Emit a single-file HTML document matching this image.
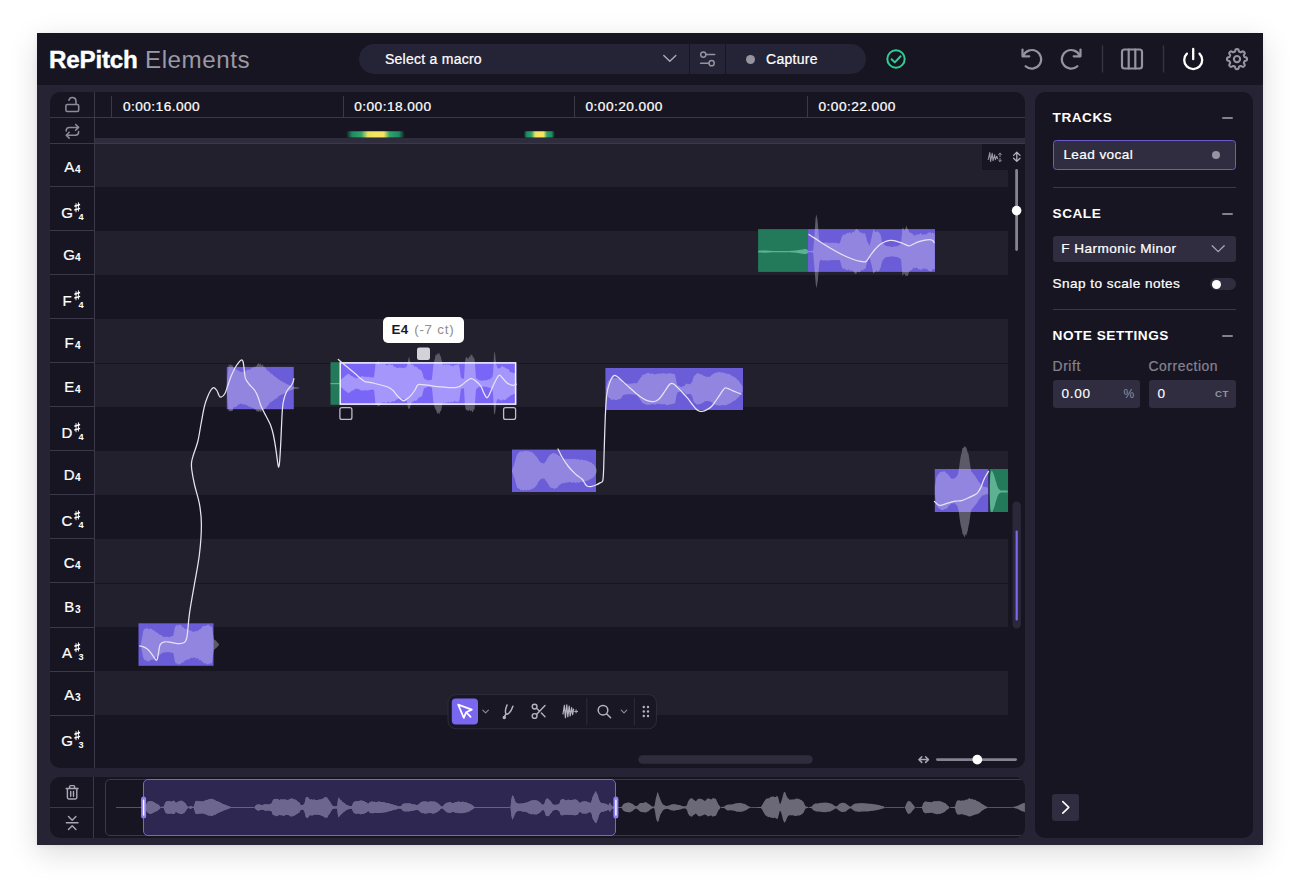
<!DOCTYPE html>
<html><head><meta charset="utf-8"><title>RePitch Elements</title>
<style>
*{box-sizing:border-box;margin:0;padding:0}
html,body{width:1300px;height:886px;overflow:hidden;background:#ffffff}
body{position:relative;font-family:"Liberation Sans",sans-serif;color:#fff}
.abs{position:absolute}
.win{position:absolute;left:37px;top:33px;width:1226px;height:812px;background:#252334;box-shadow:0 8px 28px rgba(0,0,0,.14),0 1px 5px rgba(0,0,0,.06)}
.hdr{position:absolute;left:37px;top:33px;width:1226px;height:52px;background:#171521}
.panel{position:absolute;background:#171522;border-radius:10px;overflow:hidden}
.t{position:absolute;white-space:nowrap;line-height:1}
.m{-webkit-text-stroke:0.24px currentColor}
svg{position:absolute;overflow:visible}
</style></head><body>

<div class="win"></div><div class="hdr"></div>
<div class="t" style="left:49px;top:47.6px;font-size:24.2px;font-weight:bold;letter-spacing:-0.2px;-webkit-text-stroke:0.4px #fff">RePitch</div>
<div class="t" style="left:145px;top:47.6px;font-size:24.2px;color:#9b99a4;letter-spacing:0.55px">Elements</div>
<div class="abs" style="left:358.6px;top:44px;width:507.4px;height:30px;border-radius:15px;background:#252336"></div>
<div class="abs" style="left:689px;top:44px;width:1px;height:30px;background:#171521"></div>
<div class="abs" style="left:725px;top:44px;width:1px;height:30px;background:#171521"></div>
<div class="t m" style="left:385px;top:52px;font-size:14px;letter-spacing:0.25px">Select a macro</div>
<div class="t m" style="left:766px;top:52px;font-size:14px;letter-spacing:0.3px">Capture</div>
<div class="abs" style="left:745.5px;top:54.5px;width:9px;height:9px;border-radius:50%;background:#9593a0"></div>
<svg style="left:0;top:0" width="1300" height="90" viewBox="0 0 1300 90" fill="none" stroke-linecap="round" stroke-linejoin="round">
<path d="M663.8 55.4 L669.8 61.2 L675.8 55.4" stroke="#aeacb8" stroke-width="1.4"/>
<g stroke="#9593a0" stroke-width="1.5"><circle cx="703.3" cy="54.6" r="2.6"/><path d="M706.5 54.6H714.6"/><circle cx="711.6" cy="63.2" r="2.6"/><path d="M700.6 63.2H708.5"/></g>
<g stroke="#2fcf93" stroke-width="2"><circle cx="896" cy="59" r="8.7"/><path d="M891.6 59.3 L894.8 62.4 L900.6 56.2"/></g>
<g stroke="#9593a0" stroke-width="2.2"><path d="M1022.5 49.5 V56.3 H1029.3"/><path d="M1023.2 56 A9.3 9.3 0 1 1 1025.6 66.2"/></g>
<g stroke="#9593a0" stroke-width="2.2"><path d="M1080.5 49.5 V56.3 H1073.7"/><path d="M1079.8 56 A9.3 9.3 0 1 0 1077.4 66.2"/></g>
<path d="M1102.5 46V72M1163.5 46V72" stroke="#353342" stroke-width="1.5"/>
<g stroke="#9593a0" stroke-width="2.2"><rect x="1122" y="49.5" width="20" height="19" rx="2.5"/><path d="M1128.7 49.5V68.5M1135.3 49.5V68.5"/></g>
<g stroke="#ffffff" stroke-width="2.3"><path d="M1193.2 48.9V59.2"/><path d="M1186.9 53.6 A9 9 0 1 0 1199.5 53.6"/></g>
<g stroke="#9593a0" stroke-width="2.1"><path d="M1237.00 49.10 L1237.39 49.11 L1237.78 49.17 L1238.16 49.30 L1238.49 49.67 L1238.73 50.42 L1238.90 51.17 L1239.13 51.56 L1239.39 51.74 L1239.67 51.87 L1239.95 51.99 L1240.23 52.10 L1240.51 52.21 L1240.83 52.26 L1241.26 52.15 L1241.92 51.74 L1242.61 51.38 L1243.11 51.35 L1243.47 51.52 L1243.78 51.76 L1244.07 52.03 L1244.34 52.32 L1244.58 52.63 L1244.75 52.99 L1244.72 53.49 L1244.36 54.18 L1243.95 54.84 L1243.84 55.27 L1243.89 55.59 L1244.00 55.87 L1244.11 56.15 L1244.23 56.43 L1244.36 56.71 L1244.54 56.97 L1244.93 57.20 L1245.68 57.37 L1246.43 57.61 L1246.80 57.94 L1246.93 58.32 L1246.99 58.71 L1247.00 59.10 L1246.99 59.49 L1246.93 59.88 L1246.80 60.26 L1246.43 60.59 L1245.68 60.83 L1244.93 61.00 L1244.54 61.23 L1244.36 61.49 L1244.23 61.77 L1244.11 62.05 L1244.00 62.33 L1243.89 62.61 L1243.84 62.93 L1243.95 63.36 L1244.36 64.02 L1244.72 64.71 L1244.75 65.21 L1244.58 65.57 L1244.34 65.88 L1244.07 66.17 L1243.78 66.44 L1243.47 66.68 L1243.11 66.85 L1242.61 66.82 L1241.92 66.46 L1241.26 66.05 L1240.83 65.94 L1240.51 65.99 L1240.23 66.10 L1239.95 66.21 L1239.67 66.33 L1239.39 66.46 L1239.13 66.64 L1238.90 67.03 L1238.73 67.78 L1238.49 68.53 L1238.16 68.90 L1237.78 69.03 L1237.39 69.09 L1237.00 69.10 L1236.61 69.09 L1236.22 69.03 L1235.84 68.90 L1235.51 68.53 L1235.27 67.78 L1235.10 67.03 L1234.87 66.64 L1234.61 66.46 L1234.33 66.33 L1234.05 66.21 L1233.77 66.10 L1233.49 65.99 L1233.17 65.94 L1232.74 66.05 L1232.08 66.46 L1231.39 66.82 L1230.89 66.85 L1230.53 66.68 L1230.22 66.44 L1229.93 66.17 L1229.66 65.88 L1229.42 65.57 L1229.25 65.21 L1229.28 64.71 L1229.64 64.02 L1230.05 63.36 L1230.16 62.93 L1230.11 62.61 L1230.00 62.33 L1229.89 62.05 L1229.77 61.77 L1229.64 61.49 L1229.46 61.23 L1229.07 61.00 L1228.32 60.83 L1227.57 60.59 L1227.20 60.26 L1227.07 59.88 L1227.01 59.49 L1227.00 59.10 L1227.01 58.71 L1227.07 58.32 L1227.20 57.94 L1227.57 57.61 L1228.32 57.37 L1229.07 57.20 L1229.46 56.97 L1229.64 56.71 L1229.77 56.43 L1229.89 56.15 L1230.00 55.87 L1230.11 55.59 L1230.16 55.27 L1230.05 54.84 L1229.64 54.18 L1229.28 53.49 L1229.25 52.99 L1229.42 52.63 L1229.66 52.32 L1229.93 52.03 L1230.22 51.76 L1230.53 51.52 L1230.89 51.35 L1231.39 51.38 L1232.08 51.74 L1232.74 52.15 L1233.17 52.26 L1233.49 52.21 L1233.77 52.10 L1234.05 51.99 L1234.33 51.87 L1234.61 51.74 L1234.87 51.56 L1235.10 51.17 L1235.27 50.42 L1235.51 49.67 L1235.84 49.30 L1236.22 49.17 L1236.61 49.11 Z" stroke-linejoin="round"/><circle cx="1237.0" cy="59.1" r="3.15"/></g>
</svg>
<div class="panel" style="left:50px;top:92px;width:975px;height:676px">
<div class="abs" style="left:45px;top:51.50px;width:913.2px;height:43.20px;background:#22202d"></div>
<div class="abs" style="left:45px;top:94.70px;width:913.2px;height:44.03px;background:#171522"></div>
<div class="abs" style="left:45px;top:138.73px;width:913.2px;height:44.03px;background:#22202d"></div>
<div class="abs" style="left:45px;top:182.76px;width:913.2px;height:44.03px;background:#171522"></div>
<div class="abs" style="left:45px;top:226.79px;width:913.2px;height:44.03px;background:#22202d"></div>
<div class="abs" style="left:45px;top:270.82px;width:913.2px;height:44.03px;background:#22202d"></div>
<div class="abs" style="left:45px;top:314.85px;width:913.2px;height:44.03px;background:#171522"></div>
<div class="abs" style="left:45px;top:358.88px;width:913.2px;height:44.03px;background:#22202d"></div>
<div class="abs" style="left:45px;top:402.91px;width:913.2px;height:44.03px;background:#171522"></div>
<div class="abs" style="left:45px;top:446.94px;width:913.2px;height:44.03px;background:#22202d"></div>
<div class="abs" style="left:45px;top:490.97px;width:913.2px;height:44.03px;background:#22202d"></div>
<div class="abs" style="left:45px;top:535.00px;width:913.2px;height:44.03px;background:#171522"></div>
<div class="abs" style="left:45px;top:579.03px;width:913.2px;height:44.03px;background:#22202d"></div>
<div class="abs" style="left:45px;top:623.06px;width:913.2px;height:44.03px;background:#171522"></div>
<div class="abs" style="left:45px;top:270.72px;width:913.2px;height:1px;background:#171522"></div>
<div class="abs" style="left:45px;top:490.87px;width:913.2px;height:1px;background:#171522"></div>
<div class="abs" style="left:45px;top:45.6px;width:930px;height:6px;background:#2f2d3d"></div>
<div class="abs" style="left:0;top:25px;width:975px;height:1px;background:#3b3949"></div>
<div class="abs" style="left:0;top:51px;width:975px;height:1px;background:#3b3949"></div>
<div class="abs" style="left:44px;top:0;width:1px;height:676px;background:#3b3949"></div>
<div class="abs" style="left:0;top:94.20px;width:44px;height:1px;background:#3b3949"></div>
<div class="abs" style="left:0;top:138.23px;width:44px;height:1px;background:#3b3949"></div>
<div class="abs" style="left:0;top:182.26px;width:44px;height:1px;background:#3b3949"></div>
<div class="abs" style="left:0;top:226.29px;width:44px;height:1px;background:#3b3949"></div>
<div class="abs" style="left:0;top:270.32px;width:44px;height:1px;background:#3b3949"></div>
<div class="abs" style="left:0;top:314.35px;width:44px;height:1px;background:#3b3949"></div>
<div class="abs" style="left:0;top:358.38px;width:44px;height:1px;background:#3b3949"></div>
<div class="abs" style="left:0;top:402.41px;width:44px;height:1px;background:#3b3949"></div>
<div class="abs" style="left:0;top:446.44px;width:44px;height:1px;background:#3b3949"></div>
<div class="abs" style="left:0;top:490.47px;width:44px;height:1px;background:#3b3949"></div>
<div class="abs" style="left:0;top:534.50px;width:44px;height:1px;background:#3b3949"></div>
<div class="abs" style="left:0;top:578.53px;width:44px;height:1px;background:#3b3949"></div>
<div class="abs" style="left:0;top:622.56px;width:44px;height:1px;background:#3b3949"></div>
<div class="abs" style="left:61.2px;top:4px;width:1px;height:21px;background:#3b3949"></div>
<div class="t m" style="left:72.9px;top:7.9px;font-size:13.7px;letter-spacing:0.45px">0:00:16.000</div>
<div class="abs" style="left:292.5px;top:4px;width:1px;height:21px;background:#3b3949"></div>
<div class="t m" style="left:304.2px;top:7.9px;font-size:13.7px;letter-spacing:0.45px">0:00:18.000</div>
<div class="abs" style="left:523.8px;top:4px;width:1px;height:21px;background:#3b3949"></div>
<div class="t m" style="left:535.5px;top:7.9px;font-size:13.7px;letter-spacing:0.45px">0:00:20.000</div>
<div class="abs" style="left:756.8px;top:4px;width:1px;height:21px;background:#3b3949"></div>
<div class="t m" style="left:768.5px;top:7.9px;font-size:13.7px;letter-spacing:0.45px">0:00:22.000</div>
<div class="abs" style="left:931.8px;top:52px;width:44px;height:25.5px;background:#171522"></div>
</div>
<svg style="left:0;top:0" width="1300" height="886" viewBox="0 0 1300 886" fill="none">
<defs>
<linearGradient id="mk" x1="0" x2="1" y1="0" y2="0"><stop offset="0" stop-color="#1a7a56" stop-opacity="0"/><stop offset="0.1" stop-color="#1d8a60"/><stop offset="0.26" stop-color="#2fa56a"/><stop offset="0.37" stop-color="#e9e060"/><stop offset="0.48" stop-color="#f6e35f"/><stop offset="0.64" stop-color="#f6e35f"/><stop offset="0.74" stop-color="#2fa56a"/><stop offset="0.9" stop-color="#1d8a60"/><stop offset="1" stop-color="#1a7a56" stop-opacity="0"/></linearGradient>
<filter id="bl" x="-10%" y="-30%" width="120%" height="160%"><feGaussianBlur stdDeviation="0.7"/></filter>
<clipPath id="gridclip"><rect x="95" y="144" width="913.2" height="624"/></clipPath>
<clipPath id="c_b1"><rect x="138.5" y="623.3" width="75.0" height="42.5"/></clipPath>
<clipPath id="c_b2"><rect x="226.8" y="366.9" width="67.0" height="42.3"/></clipPath>
<clipPath id="c_b3"><rect x="339.5" y="362.2" width="176.8" height="42.6"/></clipPath>
<clipPath id="c_b3g"><rect x="330.5" y="362.2" width="9.0" height="42.6"/></clipPath>
<clipPath id="c_b4"><rect x="512.0" y="449.6" width="84.0" height="42.4"/></clipPath>
<clipPath id="c_b5"><rect x="605.4" y="368.0" width="137.6" height="42.0"/></clipPath>
<clipPath id="c_b6g"><rect x="758.1" y="229.1" width="49.9" height="42.8"/></clipPath>
<clipPath id="c_b6"><rect x="808.0" y="229.1" width="127.0" height="42.8"/></clipPath>
<clipPath id="c_b7"><rect x="934.8" y="469.0" width="53.6" height="43.0"/></clipPath>
<clipPath id="c_b7g"><rect x="989.6" y="469.0" width="18.6" height="43.0"/></clipPath>
</defs>
<rect x="346" y="131.2" width="59" height="6.4" rx="2" fill="url(#mk)" filter="url(#bl)"/>
<rect x="523.5" y="131.2" width="31.5" height="6.4" rx="2" fill="url(#mk)" filter="url(#bl)"/>
<g clip-path="url(#gridclip)">
<path d="M141.0 642.7 L141.8 639.1 L142.5 635.3 L143.2 631.0 L144.0 629.3 L144.8 628.8 L145.5 628.9 L146.2 627.8 L147.0 628.2 L147.8 628.3 L148.5 629.2 L149.2 629.2 L150.0 628.2 L150.8 628.7 L151.5 628.7 L152.2 629.8 L153.0 630.1 L153.8 629.9 L154.5 631.2 L155.2 631.2 L156.0 631.9 L156.8 632.8 L157.5 632.6 L158.2 633.4 L159.0 634.1 L159.8 634.9 L160.5 634.8 L161.2 635.0 L162.0 635.4 L162.8 636.6 L163.5 636.9 L164.2 636.8 L165.0 636.7 L165.8 637.0 L166.5 636.7 L167.2 636.5 L168.0 637.0 L168.8 637.2 L169.5 636.9 L170.2 636.5 L171.0 636.5 L171.8 636.2 L172.5 636.0 L173.2 636.0 L174.0 632.0 L174.8 627.4 L175.5 626.2 L176.2 625.0 L177.0 625.1 L177.8 626.3 L178.5 624.6 L179.2 624.7 L180.0 625.3 L180.8 624.6 L181.5 625.8 L182.2 627.3 L183.0 626.9 L183.8 627.7 L184.5 628.6 L185.2 629.0 L186.0 628.7 L186.8 628.8 L187.5 629.3 L188.2 630.0 L189.0 630.4 L189.8 630.1 L190.5 630.5 L191.2 630.6 L192.0 631.6 L192.8 631.4 L193.5 631.5 L194.2 632.0 L195.0 631.3 L195.8 630.7 L196.5 630.9 L197.2 631.4 L198.0 630.1 L198.8 630.2 L199.5 629.6 L200.2 629.0 L201.0 629.0 L201.8 627.3 L202.5 626.5 L203.2 626.6 L204.0 625.6 L204.8 626.0 L205.5 625.9 L206.2 625.9 L207.0 624.7 L207.8 625.0 L208.5 624.4 L209.2 624.9 L210.0 626.4 L210.8 626.4 L211.5 626.5 L212.2 627.3 L213.0 634.1 L213.8 639.2 L214.5 639.8 L215.2 640.3 L216.0 640.6 L216.8 641.8 L217.5 642.5 L218.2 643.2 L219.0 644.1 L219.0 645.1 L218.2 645.9 L217.5 646.7 L216.8 647.5 L216.0 648.3 L215.2 648.8 L214.5 649.6 L213.8 649.9 L213.0 655.0 L212.2 661.9 L211.5 663.9 L210.8 662.7 L210.0 663.8 L209.2 663.4 L208.5 664.3 L207.8 664.8 L207.0 663.9 L206.2 663.5 L205.5 663.4 L204.8 662.9 L204.0 663.8 L203.2 662.2 L202.5 661.6 L201.8 661.7 L201.0 660.5 L200.2 659.5 L199.5 660.4 L198.8 659.5 L198.0 657.7 L197.2 658.7 L196.5 658.4 L195.8 658.5 L195.0 657.8 L194.2 657.0 L193.5 658.0 L192.8 657.7 L192.0 658.2 L191.2 657.4 L190.5 658.3 L189.8 658.9 L189.0 659.2 L188.2 659.3 L187.5 659.9 L186.8 659.5 L186.0 660.4 L185.2 660.3 L184.5 660.9 L183.8 662.7 L183.0 662.1 L182.2 662.4 L181.5 663.1 L180.8 663.8 L180.0 664.6 L179.2 664.0 L178.5 664.5 L177.8 664.6 L177.0 663.0 L176.2 663.9 L175.5 662.9 L174.8 661.2 L174.0 656.7 L173.2 652.8 L172.5 653.1 L171.8 652.4 L171.0 652.8 L170.2 652.3 L169.5 652.1 L168.8 652.5 L168.0 651.9 L167.2 652.2 L166.5 652.3 L165.8 652.1 L165.0 652.6 L164.2 652.5 L163.5 652.8 L162.8 652.8 L162.0 653.2 L161.2 653.8 L160.5 654.1 L159.8 655.2 L159.0 655.6 L158.2 655.4 L157.5 656.2 L156.8 656.5 L156.0 657.5 L155.2 657.6 L154.5 658.3 L153.8 659.1 L153.0 659.8 L152.2 659.8 L151.5 659.8 L150.8 659.6 L150.0 661.0 L149.2 660.9 L148.5 661.6 L147.8 661.2 L147.0 660.4 L146.2 661.2 L145.5 659.7 L144.8 660.3 L144.0 659.3 L143.2 657.6 L142.5 654.0 L141.8 650.5 L141.0 646.6 Z" fill="#5c5a68"/>
<path d="M226.5 387.1 L227.2 378.8 L228.0 371.1 L228.8 364.2 L229.5 365.8 L230.2 363.7 L231.0 365.5 L231.8 364.8 L232.5 365.3 L233.2 368.1 L234.0 368.1 L234.8 368.4 L235.5 369.8 L236.2 369.2 L237.0 369.7 L237.8 370.3 L238.5 370.4 L239.2 371.1 L240.0 371.8 L240.8 371.7 L241.5 372.1 L242.2 372.3 L243.0 371.9 L243.8 370.9 L244.5 370.9 L245.2 371.6 L246.0 370.6 L246.8 370.6 L247.5 369.4 L248.2 369.4 L249.0 370.0 L249.8 369.2 L250.5 369.6 L251.2 368.6 L252.0 368.1 L252.8 367.5 L253.5 367.1 L254.2 367.2 L255.0 367.3 L255.8 366.1 L256.5 366.3 L257.2 364.2 L258.0 363.7 L258.8 363.3 L259.5 364.7 L260.2 363.0 L261.0 364.7 L261.8 365.5 L262.5 364.3 L263.2 365.3 L264.0 367.5 L264.8 366.5 L265.5 368.2 L266.2 368.5 L267.0 370.4 L267.8 370.8 L268.5 370.5 L269.2 372.3 L270.0 372.1 L270.8 374.0 L271.5 373.5 L272.2 374.0 L273.0 374.9 L273.8 375.6 L274.5 376.6 L275.2 376.4 L276.0 377.4 L276.8 377.5 L277.5 378.7 L278.2 378.7 L279.0 379.8 L279.8 379.9 L280.5 380.4 L281.2 381.1 L282.0 381.6 L282.8 381.8 L283.5 382.4 L284.2 382.6 L285.0 383.0 L285.8 383.5 L286.5 384.1 L287.2 384.3 L288.0 384.6 L288.8 385.0 L289.5 385.4 L290.2 385.5 L291.0 386.0 L291.8 386.2 L292.5 386.4 L293.2 386.6 L294.0 386.9 L294.8 387.0 L295.5 387.1 L296.2 387.1 L297.0 387.2 L297.8 387.3 L298.5 387.4 L299.2 387.5 L299.2 388.5 L298.5 388.6 L297.8 388.7 L297.0 388.8 L296.2 388.9 L295.5 388.9 L294.8 389.0 L294.0 389.1 L293.2 389.3 L292.5 389.5 L291.8 389.9 L291.0 390.2 L290.2 390.4 L289.5 390.7 L288.8 391.1 L288.0 391.5 L287.2 391.8 L286.5 392.1 L285.8 392.5 L285.0 392.9 L284.2 393.4 L283.5 393.8 L282.8 394.3 L282.0 394.2 L281.2 395.0 L280.5 395.0 L279.8 395.5 L279.0 396.1 L278.2 396.5 L277.5 397.6 L276.8 398.5 L276.0 398.4 L275.2 398.7 L274.5 400.1 L273.8 399.8 L273.0 401.3 L272.2 401.0 L271.5 402.2 L270.8 401.8 L270.0 402.4 L269.2 403.9 L268.5 404.9 L267.8 405.4 L267.0 407.0 L266.2 407.3 L265.5 408.2 L264.8 408.9 L264.0 408.9 L263.2 410.5 L262.5 409.9 L261.8 410.2 L261.0 412.6 L260.2 411.6 L259.5 411.0 L258.8 411.2 L258.0 411.9 L257.2 411.1 L256.5 411.4 L255.8 409.1 L255.0 410.2 L254.2 408.4 L253.5 407.8 L252.8 408.3 L252.0 407.5 L251.2 407.6 L250.5 407.4 L249.8 406.4 L249.0 406.5 L248.2 406.6 L247.5 405.7 L246.8 404.9 L246.0 405.1 L245.2 404.7 L244.5 404.6 L243.8 403.8 L243.0 404.6 L242.2 404.6 L241.5 403.8 L240.8 403.4 L240.0 403.7 L239.2 404.7 L238.5 404.2 L237.8 405.4 L237.0 405.7 L236.2 406.7 L235.5 407.5 L234.8 406.7 L234.0 407.0 L233.2 408.6 L232.5 411.0 L231.8 410.7 L231.0 411.4 L230.2 410.7 L229.5 410.4 L228.8 411.7 L228.0 405.9 L227.2 396.7 L226.5 389.0 Z" fill="#5c5a68"/>
<path d="M339.5 381.7 L340.2 380.7 L341.0 379.9 L341.8 379.0 L342.5 378.2 L343.2 378.0 L344.0 376.9 L344.8 376.4 L345.5 375.5 L346.2 375.4 L347.0 374.5 L347.8 373.7 L348.5 373.9 L349.2 374.2 L350.0 374.8 L350.8 375.5 L351.5 376.0 L352.2 376.3 L353.0 376.5 L353.8 377.4 L354.5 377.6 L355.2 377.6 L356.0 378.6 L356.8 378.3 L357.5 377.6 L358.2 377.6 L359.0 377.6 L359.8 377.2 L360.5 377.1 L361.2 376.5 L362.0 376.1 L362.8 376.2 L363.5 376.6 L364.2 376.7 L365.0 376.7 L365.8 377.0 L366.5 376.8 L367.2 377.0 L368.0 377.1 L368.8 376.6 L369.5 377.2 L370.2 377.3 L371.0 377.2 L371.8 377.2 L372.5 377.5 L373.2 377.4 L374.0 377.1 L374.8 371.0 L375.5 363.9 L376.2 361.8 L377.0 362.5 L377.8 361.7 L378.5 361.3 L379.2 361.7 L380.0 363.4 L380.8 364.1 L381.5 362.2 L382.2 364.6 L383.0 363.8 L383.8 363.3 L384.5 363.4 L385.2 363.4 L386.0 365.5 L386.8 365.3 L387.5 365.6 L388.2 364.1 L389.0 364.8 L389.8 363.8 L390.5 365.0 L391.2 364.4 L392.0 364.9 L392.8 364.3 L393.5 366.3 L394.2 366.8 L395.0 367.2 L395.8 366.6 L396.5 368.4 L397.2 367.7 L398.0 368.0 L398.8 367.5 L399.5 367.8 L400.2 367.5 L401.0 367.9 L401.8 367.5 L402.5 368.4 L403.2 367.7 L404.0 368.2 L404.8 367.6 L405.5 367.4 L406.2 367.3 L407.0 366.1 L407.8 362.2 L408.5 358.3 L409.2 356.8 L410.0 361.1 L410.8 363.8 L411.5 365.0 L412.2 364.3 L413.0 364.6 L413.8 365.6 L414.5 366.9 L415.2 366.4 L416.0 366.4 L416.8 367.3 L417.5 367.6 L418.2 368.8 L419.0 369.6 L419.8 369.5 L420.5 370.0 L421.2 370.0 L422.0 372.0 L422.8 374.1 L423.5 377.2 L424.2 378.8 L425.0 379.1 L425.8 379.7 L426.5 379.9 L427.2 379.7 L428.0 380.4 L428.8 380.2 L429.5 380.0 L430.2 380.1 L431.0 380.1 L431.8 379.6 L432.5 374.1 L433.2 366.6 L434.0 361.7 L434.8 358.9 L435.5 355.2 L436.2 354.2 L437.0 355.2 L437.8 352.8 L438.5 354.3 L439.2 352.4 L440.0 355.4 L440.8 356.3 L441.5 359.7 L442.2 362.1 L443.0 365.0 L443.8 364.9 L444.5 363.4 L445.2 365.4 L446.0 363.9 L446.8 364.5 L447.5 364.4 L448.2 365.1 L449.0 364.2 L449.8 364.6 L450.5 365.5 L451.2 365.9 L452.0 365.3 L452.8 366.5 L453.5 366.3 L454.2 365.0 L455.0 365.0 L455.8 365.3 L456.5 364.5 L457.2 365.4 L458.0 364.0 L458.8 364.1 L459.5 367.3 L460.2 372.3 L461.0 378.1 L461.8 378.3 L462.5 378.6 L463.2 378.4 L464.0 378.9 L464.8 364.4 L465.5 358.3 L466.2 357.2 L467.0 357.1 L467.8 358.9 L468.5 358.5 L469.2 356.1 L470.0 357.4 L470.8 354.3 L471.5 355.1 L472.2 354.5 L473.0 357.8 L473.8 357.0 L474.5 359.0 L475.2 367.1 L476.0 378.2 L476.8 378.6 L477.5 378.8 L478.2 379.7 L479.0 379.9 L479.8 380.4 L480.5 380.5 L481.2 380.7 L482.0 380.7 L482.8 380.4 L483.5 380.6 L484.2 380.3 L485.0 380.3 L485.8 380.4 L486.5 380.2 L487.2 380.0 L488.0 379.7 L488.8 379.3 L489.5 379.4 L490.2 378.8 L491.0 378.6 L491.8 377.4 L492.5 376.5 L493.2 371.4 L494.0 354.5 L494.8 350.9 L495.5 357.7 L496.2 364.2 L497.0 366.6 L497.8 368.4 L498.5 368.5 L499.2 368.6 L500.0 367.7 L500.8 367.7 L501.5 366.3 L502.2 365.9 L503.0 367.0 L503.8 366.8 L504.5 367.2 L505.2 368.0 L506.0 368.5 L506.8 368.2 L507.5 369.6 L508.2 368.8 L509.0 369.7 L509.8 371.8 L510.5 372.2 L511.2 372.4 L512.0 371.9 L512.8 373.2 L513.5 373.1 L514.2 373.0 L515.0 373.5 L515.8 374.3 L515.8 392.3 L515.0 393.4 L514.2 393.8 L513.5 393.9 L512.8 395.0 L512.0 394.4 L511.2 395.2 L510.5 395.7 L509.8 395.8 L509.0 397.2 L508.2 397.7 L507.5 397.3 L506.8 398.2 L506.0 400.3 L505.2 399.3 L504.5 400.4 L503.8 399.0 L503.0 400.6 L502.2 399.5 L501.5 400.7 L500.8 400.5 L500.0 399.7 L499.2 399.5 L498.5 399.5 L497.8 398.4 L497.0 400.2 L496.2 402.4 L495.5 410.2 L494.8 414.5 L494.0 413.2 L493.2 395.4 L492.5 389.9 L491.8 389.2 L491.0 388.5 L490.2 387.8 L489.5 388.0 L488.8 387.6 L488.0 387.4 L487.2 387.0 L486.5 386.8 L485.8 386.9 L485.0 386.7 L484.2 386.8 L483.5 386.4 L482.8 386.5 L482.0 386.7 L481.2 386.4 L480.5 386.3 L479.8 386.6 L479.0 386.9 L478.2 387.5 L477.5 388.2 L476.8 388.4 L476.0 389.3 L475.2 399.9 L474.5 410.4 L473.8 408.7 L473.0 412.2 L472.2 411.9 L471.5 410.0 L470.8 411.2 L470.0 411.0 L469.2 409.3 L468.5 411.0 L467.8 410.9 L467.0 409.7 L466.2 410.3 L465.5 408.8 L464.8 403.3 L464.0 388.5 L463.2 388.2 L462.5 388.8 L461.8 388.6 L461.0 388.9 L460.2 394.2 L459.5 399.9 L458.8 401.1 L458.0 402.4 L457.2 400.9 L456.5 402.0 L455.8 402.4 L455.0 400.5 L454.2 400.8 L453.5 402.1 L452.8 402.0 L452.0 402.4 L451.2 401.2 L450.5 402.6 L449.8 402.2 L449.0 403.3 L448.2 401.2 L447.5 403.0 L446.8 402.1 L446.0 403.8 L445.2 402.3 L444.5 403.5 L443.8 403.1 L443.0 402.8 L442.2 404.4 L441.5 409.1 L440.8 411.2 L440.0 411.4 L439.2 414.7 L438.5 412.5 L437.8 413.7 L437.0 413.0 L436.2 410.3 L435.5 409.2 L434.8 407.8 L434.0 404.9 L433.2 400.9 L432.5 392.7 L431.8 387.4 L431.0 387.3 L430.2 386.9 L429.5 386.8 L428.8 387.1 L428.0 386.8 L427.2 387.0 L426.5 387.6 L425.8 387.4 L425.0 387.9 L424.2 388.3 L423.5 390.3 L422.8 392.7 L422.0 396.3 L421.2 396.6 L420.5 397.1 L419.8 397.3 L419.0 398.0 L418.2 397.6 L417.5 399.4 L416.8 400.3 L416.0 400.8 L415.2 401.3 L414.5 399.9 L413.8 402.1 L413.0 400.7 L412.2 402.7 L411.5 402.4 L410.8 404.1 L410.0 408.0 L409.2 408.7 L408.5 409.1 L407.8 407.1 L407.0 401.4 L406.2 399.9 L405.5 400.2 L404.8 400.8 L404.0 399.6 L403.2 398.7 L402.5 398.8 L401.8 398.3 L401.0 399.7 L400.2 399.4 L399.5 398.0 L398.8 398.0 L398.0 399.4 L397.2 399.2 L396.5 399.4 L395.8 400.4 L395.0 401.1 L394.2 400.7 L393.5 402.3 L392.8 401.0 L392.0 400.9 L391.2 402.2 L390.5 402.4 L389.8 402.0 L389.0 403.3 L388.2 401.3 L387.5 401.9 L386.8 402.5 L386.0 403.5 L385.2 402.7 L384.5 402.6 L383.8 401.9 L383.0 403.7 L382.2 402.0 L381.5 403.7 L380.8 403.0 L380.0 405.5 L379.2 406.2 L378.5 405.8 L377.8 406.4 L377.0 404.4 L376.2 404.7 L375.5 404.5 L374.8 396.7 L374.0 389.8 L373.2 390.0 L372.5 389.6 L371.8 389.6 L371.0 389.9 L370.2 389.5 L369.5 390.2 L368.8 390.2 L368.0 390.3 L367.2 390.5 L366.5 390.2 L365.8 390.0 L365.0 390.7 L364.2 390.2 L363.5 390.3 L362.8 390.2 L362.0 390.7 L361.2 390.7 L360.5 389.9 L359.8 389.5 L359.0 389.4 L358.2 389.1 L357.5 389.1 L356.8 388.7 L356.0 388.6 L355.2 388.9 L354.5 389.4 L353.8 390.3 L353.0 390.6 L352.2 390.5 L351.5 391.1 L350.8 391.6 L350.0 392.2 L349.2 392.8 L348.5 392.8 L347.8 393.0 L347.0 392.1 L346.2 391.6 L345.5 391.1 L344.8 390.6 L344.0 389.5 L343.2 389.3 L342.5 388.3 L341.8 387.8 L341.0 387.0 L340.2 386.3 L339.5 385.3 Z" fill="#5c5a68"/>
<path d="M512.0 469.9 L512.8 467.9 L513.5 466.3 L514.2 464.1 L515.0 461.7 L515.8 458.4 L516.5 456.1 L517.2 454.4 L518.0 453.0 L518.8 452.7 L519.5 451.8 L520.2 451.3 L521.0 451.3 L521.8 452.0 L522.5 451.2 L523.2 451.7 L524.0 450.5 L524.8 451.1 L525.5 451.0 L526.2 451.1 L527.0 450.5 L527.8 451.6 L528.5 450.9 L529.2 451.4 L530.0 451.2 L530.8 451.9 L531.5 451.4 L532.2 452.8 L533.0 452.5 L533.8 454.2 L534.5 454.2 L535.2 455.4 L536.0 456.0 L536.8 457.1 L537.5 458.3 L538.2 459.1 L539.0 460.8 L539.8 461.5 L540.5 462.4 L541.2 462.4 L542.0 463.0 L542.8 462.9 L543.5 463.6 L544.2 463.5 L545.0 462.2 L545.8 461.2 L546.5 459.9 L547.2 458.8 L548.0 457.6 L548.8 455.9 L549.5 455.3 L550.2 454.8 L551.0 454.1 L551.8 453.9 L552.5 453.2 L553.2 453.0 L554.0 453.3 L554.8 453.3 L555.5 453.7 L556.2 453.8 L557.0 454.2 L557.8 455.3 L558.5 455.6 L559.2 456.0 L560.0 456.0 L560.8 457.1 L561.5 458.3 L562.2 458.7 L563.0 458.0 L563.8 458.9 L564.5 459.1 L565.2 459.2 L566.0 459.0 L566.8 458.8 L567.5 459.2 L568.2 458.8 L569.0 458.9 L569.8 459.3 L570.5 458.8 L571.2 458.7 L572.0 459.1 L572.8 459.3 L573.5 459.0 L574.2 458.5 L575.0 458.9 L575.8 459.2 L576.5 459.5 L577.2 459.0 L578.0 459.2 L578.8 459.5 L579.5 459.7 L580.2 459.7 L581.0 459.7 L581.8 459.6 L582.5 459.5 L583.2 460.2 L584.0 460.3 L584.8 460.1 L585.5 460.7 L586.2 460.4 L587.0 460.6 L587.8 460.9 L588.5 461.5 L589.2 461.9 L590.0 461.9 L590.8 462.3 L591.5 462.6 L592.2 463.6 L593.0 464.0 L593.8 464.6 L594.5 465.5 L595.2 466.6 L596.0 468.3 L596.8 469.8 L596.8 471.8 L596.0 473.4 L595.2 475.1 L594.5 476.1 L593.8 476.7 L593.0 477.7 L592.2 478.1 L591.5 478.6 L590.8 479.3 L590.0 479.1 L589.2 479.8 L588.5 480.4 L587.8 480.4 L587.0 480.8 L586.2 480.9 L585.5 481.4 L584.8 481.4 L584.0 481.0 L583.2 481.6 L582.5 482.0 L581.8 482.3 L581.0 481.8 L580.2 481.6 L579.5 482.4 L578.8 482.7 L578.0 482.7 L577.2 482.2 L576.5 482.5 L575.8 482.9 L575.0 482.9 L574.2 482.3 L573.5 482.3 L572.8 482.6 L572.0 482.7 L571.2 482.5 L570.5 482.2 L569.8 482.1 L569.0 482.0 L568.2 482.6 L567.5 482.6 L566.8 482.8 L566.0 482.2 L565.2 483.1 L564.5 483.1 L563.8 483.3 L563.0 483.3 L562.2 482.8 L561.5 484.1 L560.8 484.0 L560.0 484.6 L559.2 485.5 L558.5 485.8 L557.8 487.4 L557.0 487.5 L556.2 488.4 L555.5 487.9 L554.8 489.1 L554.0 488.9 L553.2 488.1 L552.5 487.9 L551.8 488.2 L551.0 487.9 L550.2 486.8 L549.5 486.7 L548.8 485.0 L548.0 484.0 L547.2 482.6 L546.5 481.5 L545.8 480.7 L545.0 479.4 L544.2 478.6 L543.5 478.5 L542.8 478.4 L542.0 478.5 L541.2 479.2 L540.5 479.3 L539.8 479.9 L539.0 481.4 L538.2 482.0 L537.5 483.9 L536.8 485.3 L536.0 486.0 L535.2 486.9 L534.5 488.0 L533.8 487.4 L533.0 489.2 L532.2 488.6 L531.5 489.6 L530.8 489.0 L530.0 490.2 L529.2 490.0 L528.5 489.9 L527.8 489.5 L527.0 490.2 L526.2 491.0 L525.5 489.8 L524.8 489.9 L524.0 489.7 L523.2 490.7 L522.5 490.7 L521.8 489.3 L521.0 490.2 L520.2 489.9 L519.5 488.8 L518.8 489.1 L518.0 487.8 L517.2 487.9 L516.5 485.3 L515.8 483.1 L515.0 480.0 L514.2 477.6 L513.5 475.5 L512.8 473.6 L512.0 471.8 Z" fill="#5c5a68"/>
<path d="M606.0 388.0 L606.8 385.5 L607.5 382.8 L608.2 380.8 L609.0 380.7 L609.8 379.4 L610.5 378.9 L611.2 378.7 L612.0 378.2 L612.8 377.9 L613.5 378.5 L614.2 377.7 L615.0 378.3 L615.8 378.2 L616.5 377.9 L617.2 378.1 L618.0 378.4 L618.8 378.9 L619.5 379.1 L620.2 379.2 L621.0 379.6 L621.8 380.7 L622.5 382.5 L623.2 383.4 L624.0 383.2 L624.8 383.5 L625.5 383.5 L626.2 383.6 L627.0 383.4 L627.8 383.6 L628.5 383.7 L629.2 383.7 L630.0 383.8 L630.8 383.6 L631.5 383.6 L632.2 383.4 L633.0 383.3 L633.8 383.3 L634.5 383.2 L635.2 383.3 L636.0 383.1 L636.8 383.3 L637.5 382.5 L638.2 381.0 L639.0 379.9 L639.8 379.1 L640.5 377.4 L641.2 377.3 L642.0 375.5 L642.8 374.5 L643.5 374.9 L644.2 374.4 L645.0 374.2 L645.8 373.3 L646.5 373.9 L647.2 373.1 L648.0 372.5 L648.8 373.0 L649.5 373.2 L650.2 374.1 L651.0 374.0 L651.8 373.1 L652.5 373.7 L653.2 373.7 L654.0 374.0 L654.8 374.5 L655.5 374.5 L656.2 373.4 L657.0 374.3 L657.8 373.3 L658.5 373.9 L659.2 373.4 L660.0 373.6 L660.8 373.4 L661.5 373.4 L662.2 373.9 L663.0 373.1 L663.8 373.0 L664.5 373.7 L665.2 373.6 L666.0 373.3 L666.8 373.9 L667.5 373.8 L668.2 372.9 L669.0 373.7 L669.8 373.0 L670.5 373.0 L671.2 373.6 L672.0 374.1 L672.8 373.8 L673.5 373.7 L674.2 374.6 L675.0 374.2 L675.8 378.8 L676.5 382.3 L677.2 385.4 L678.0 385.6 L678.8 386.1 L679.5 386.3 L680.2 386.7 L681.0 387.1 L681.8 386.8 L682.5 386.7 L683.2 386.3 L684.0 386.0 L684.8 385.4 L685.5 384.4 L686.2 383.6 L687.0 383.7 L687.8 383.9 L688.5 384.0 L689.2 384.2 L690.0 384.3 L690.8 383.3 L691.5 382.7 L692.2 381.7 L693.0 379.0 L693.8 376.3 L694.5 375.4 L695.2 374.9 L696.0 374.4 L696.8 373.5 L697.5 373.1 L698.2 373.0 L699.0 374.1 L699.8 374.1 L700.5 374.1 L701.2 374.5 L702.0 374.8 L702.8 374.7 L703.5 375.8 L704.2 375.9 L705.0 375.9 L705.8 376.5 L706.5 377.4 L707.2 376.4 L708.0 376.8 L708.8 376.7 L709.5 376.9 L710.2 376.2 L711.0 375.5 L711.8 375.1 L712.5 374.3 L713.2 374.0 L714.0 373.4 L714.8 372.7 L715.5 373.0 L716.2 372.6 L717.0 372.2 L717.8 372.9 L718.5 371.8 L719.2 372.1 L720.0 371.8 L720.8 372.8 L721.5 372.4 L722.2 372.2 L723.0 372.4 L723.8 373.1 L724.5 372.8 L725.2 373.1 L726.0 373.8 L726.8 374.0 L727.5 373.6 L728.2 373.9 L729.0 373.7 L729.8 374.3 L730.5 374.7 L731.2 375.2 L732.0 375.9 L732.8 376.6 L733.5 376.2 L734.2 377.5 L735.0 377.1 L735.8 378.3 L736.5 378.5 L737.2 379.8 L738.0 380.1 L738.8 380.9 L739.5 382.0 L740.2 383.3 L741.0 384.1 L741.8 385.3 L742.5 386.4 L742.5 391.6 L741.8 392.6 L741.0 393.6 L740.2 394.7 L739.5 396.2 L738.8 396.7 L738.0 397.9 L737.2 398.6 L736.5 398.7 L735.8 400.2 L735.0 400.2 L734.2 400.7 L733.5 401.0 L732.8 401.4 L732.0 402.4 L731.2 402.5 L730.5 403.1 L729.8 403.8 L729.0 403.4 L728.2 404.4 L727.5 404.5 L726.8 404.7 L726.0 404.9 L725.2 405.4 L724.5 405.4 L723.8 404.9 L723.0 405.2 L722.2 404.8 L721.5 405.4 L720.8 405.4 L720.0 405.3 L719.2 406.1 L718.5 405.3 L717.8 405.7 L717.0 405.1 L716.2 405.5 L715.5 404.6 L714.8 404.7 L714.0 404.5 L713.2 404.4 L712.5 402.7 L711.8 402.4 L711.0 402.0 L710.2 401.2 L709.5 401.4 L708.8 401.2 L708.0 401.0 L707.2 401.1 L706.5 401.0 L705.8 400.9 L705.0 401.6 L704.2 401.5 L703.5 402.6 L702.8 402.8 L702.0 402.9 L701.2 403.7 L700.5 403.9 L699.8 404.4 L699.0 404.0 L698.2 404.6 L697.5 404.5 L696.8 404.7 L696.0 403.8 L695.2 403.2 L694.5 402.4 L693.8 401.9 L693.0 398.9 L692.2 396.6 L691.5 395.1 L690.8 394.5 L690.0 393.8 L689.2 393.9 L688.5 393.9 L687.8 394.3 L687.0 394.3 L686.2 394.2 L685.5 393.7 L684.8 392.7 L684.0 391.9 L683.2 391.5 L682.5 391.4 L681.8 391.2 L681.0 391.0 L680.2 391.3 L679.5 391.7 L678.8 391.9 L678.0 392.4 L677.2 392.8 L676.5 395.5 L675.8 399.4 L675.0 403.5 L674.2 403.3 L673.5 403.4 L672.8 404.3 L672.0 404.1 L671.2 404.2 L670.5 404.7 L669.8 404.3 L669.0 404.8 L668.2 405.0 L667.5 405.3 L666.8 405.2 L666.0 404.7 L665.2 404.7 L664.5 404.1 L663.8 404.1 L663.0 404.2 L662.2 404.4 L661.5 404.7 L660.8 403.7 L660.0 403.8 L659.2 404.2 L658.5 403.7 L657.8 404.1 L657.0 403.4 L656.2 404.3 L655.5 404.3 L654.8 404.4 L654.0 404.4 L653.2 403.9 L652.5 403.9 L651.8 404.4 L651.0 404.3 L650.2 404.5 L649.5 404.9 L648.8 404.5 L648.0 405.2 L647.2 404.7 L646.5 404.8 L645.8 404.7 L645.0 404.2 L644.2 403.4 L643.5 403.2 L642.8 403.6 L642.0 402.4 L641.2 400.7 L640.5 399.9 L639.8 398.8 L639.0 397.7 L638.2 396.7 L637.5 395.4 L636.8 394.7 L636.0 394.9 L635.2 394.8 L634.5 394.4 L633.8 394.8 L633.0 394.3 L632.2 394.4 L631.5 394.5 L630.8 394.2 L630.0 394.1 L629.2 394.2 L628.5 394.2 L627.8 394.3 L627.0 394.3 L626.2 394.6 L625.5 394.7 L624.8 394.4 L624.0 394.8 L623.2 395.0 L622.5 395.9 L621.8 397.1 L621.0 398.6 L620.2 398.9 L619.5 399.2 L618.8 399.0 L618.0 399.2 L617.2 400.1 L616.5 400.3 L615.8 400.1 L615.0 400.0 L614.2 399.6 L613.5 399.6 L612.8 399.4 L612.0 399.8 L611.2 399.9 L610.5 399.0 L609.8 398.3 L609.0 397.9 L608.2 396.9 L607.5 394.9 L606.8 392.6 L606.0 390.0 Z" fill="#5c5a68"/>
<path d="M808.0 251.0 L808.8 250.9 L809.5 250.9 L810.2 250.9 L811.0 250.9 L811.8 250.8 L812.5 250.9 L813.2 250.2 L814.0 240.2 L814.8 229.6 L815.5 219.1 L816.2 214.5 L817.0 217.3 L817.8 222.3 L818.5 232.9 L819.2 239.5 L820.0 241.8 L820.8 243.2 L821.5 242.8 L822.2 242.9 L823.0 243.2 L823.8 243.0 L824.5 242.5 L825.2 242.5 L826.0 242.6 L826.8 242.3 L827.5 242.6 L828.2 243.0 L829.0 243.1 L829.8 242.8 L830.5 242.8 L831.2 243.0 L832.0 242.8 L832.8 242.8 L833.5 243.1 L834.2 242.6 L835.0 243.4 L835.8 242.6 L836.5 242.6 L837.2 243.4 L838.0 243.2 L838.8 243.4 L839.5 243.2 L840.2 242.3 L841.0 239.5 L841.8 236.7 L842.5 235.7 L843.2 234.3 L844.0 235.0 L844.8 234.4 L845.5 234.4 L846.2 233.6 L847.0 233.0 L847.8 232.9 L848.5 233.4 L849.2 232.2 L850.0 232.0 L850.8 233.4 L851.5 233.5 L852.2 231.4 L853.0 232.1 L853.8 232.4 L854.5 230.6 L855.2 230.6 L856.0 228.9 L856.8 229.1 L857.5 229.8 L858.2 230.1 L859.0 230.7 L859.8 232.3 L860.5 232.8 L861.2 231.8 L862.0 233.3 L862.8 233.5 L863.5 233.4 L864.2 233.3 L865.0 233.1 L865.8 236.5 L866.5 238.0 L867.2 241.6 L868.0 242.9 L868.8 244.2 L869.5 245.9 L870.2 242.9 L871.0 240.1 L871.8 236.6 L872.5 233.3 L873.2 230.3 L874.0 229.3 L874.8 231.7 L875.5 232.0 L876.2 231.5 L877.0 232.1 L877.8 230.6 L878.5 232.5 L879.2 232.8 L880.0 233.6 L880.8 235.4 L881.5 238.9 L882.2 242.3 L883.0 243.0 L883.8 244.0 L884.5 244.9 L885.2 245.0 L886.0 246.1 L886.8 246.1 L887.5 246.3 L888.2 246.4 L889.0 246.3 L889.8 246.5 L890.5 246.5 L891.2 247.0 L892.0 246.9 L892.8 246.7 L893.5 246.5 L894.2 246.7 L895.0 246.1 L895.8 246.4 L896.5 246.2 L897.2 246.2 L898.0 245.9 L898.8 245.2 L899.5 244.7 L900.2 244.4 L901.0 243.9 L901.8 234.9 L902.5 228.2 L903.2 227.4 L904.0 230.4 L904.8 230.3 L905.5 228.4 L906.2 225.3 L907.0 227.9 L907.8 228.5 L908.5 230.4 L909.2 231.9 L910.0 232.7 L910.8 232.7 L911.5 233.2 L912.2 233.4 L913.0 234.6 L913.8 234.8 L914.5 235.9 L915.2 235.5 L916.0 234.4 L916.8 234.4 L917.5 234.8 L918.2 234.5 L919.0 233.8 L919.8 234.5 L920.5 233.1 L921.2 233.3 L922.0 234.7 L922.8 234.7 L923.5 234.7 L924.2 234.6 L925.0 233.7 L925.8 234.7 L926.5 234.3 L927.2 233.8 L928.0 232.6 L928.8 232.6 L929.5 232.8 L930.2 232.1 L931.0 233.1 L931.8 233.4 L932.5 232.2 L933.2 232.7 L934.0 234.1 L934.8 232.8 L934.8 269.8 L934.0 269.1 L933.2 269.1 L932.5 269.3 L931.8 270.9 L931.0 271.4 L930.2 271.3 L929.5 271.1 L928.8 270.9 L928.0 270.2 L927.2 269.1 L926.5 269.6 L925.8 268.2 L925.0 269.3 L924.2 268.0 L923.5 268.6 L922.8 270.0 L922.0 268.5 L921.2 269.7 L920.5 270.4 L919.8 268.6 L919.0 269.9 L918.2 269.2 L917.5 267.9 L916.8 268.3 L916.0 267.3 L915.2 268.0 L914.5 268.7 L913.8 267.6 L913.0 268.0 L912.2 269.9 L911.5 270.0 L910.8 270.9 L910.0 270.2 L909.2 271.7 L908.5 273.6 L907.8 275.5 L907.0 276.3 L906.2 275.4 L905.5 276.0 L904.8 273.4 L904.0 274.2 L903.2 274.5 L902.5 276.6 L901.8 268.5 L901.0 259.2 L900.2 258.7 L899.5 258.1 L898.8 258.0 L898.0 257.2 L897.2 257.2 L896.5 256.8 L895.8 257.1 L895.0 256.7 L894.2 256.7 L893.5 256.5 L892.8 256.6 L892.0 256.3 L891.2 256.6 L890.5 256.5 L889.8 256.5 L889.0 257.1 L888.2 256.7 L887.5 256.9 L886.8 257.3 L886.0 257.1 L885.2 257.7 L884.5 258.2 L883.8 259.1 L883.0 259.9 L882.2 261.4 L881.5 263.9 L880.8 267.3 L880.0 268.7 L879.2 271.0 L878.5 271.0 L877.8 272.0 L877.0 270.9 L876.2 269.9 L875.5 271.8 L874.8 271.9 L874.0 273.0 L873.2 273.4 L872.5 269.4 L871.8 265.6 L871.0 262.8 L870.2 260.1 L869.5 257.6 L868.8 258.5 L868.0 259.9 L867.2 262.4 L866.5 264.3 L865.8 267.9 L865.0 268.8 L864.2 269.0 L863.5 269.6 L862.8 271.0 L862.0 269.7 L861.2 270.0 L860.5 271.5 L859.8 271.8 L859.0 272.8 L858.2 271.4 L857.5 271.6 L856.8 272.6 L856.0 274.6 L855.2 273.6 L854.5 273.3 L853.8 271.9 L853.0 270.4 L852.2 271.0 L851.5 270.6 L850.8 270.3 L850.0 271.0 L849.2 270.0 L848.5 269.2 L847.8 270.1 L847.0 270.0 L846.2 270.2 L845.5 268.9 L844.8 269.3 L844.0 268.0 L843.2 269.2 L842.5 268.7 L841.8 266.9 L841.0 264.3 L840.2 261.0 L839.5 260.0 L838.8 260.0 L838.0 259.9 L837.2 260.1 L836.5 260.4 L835.8 260.3 L835.0 260.1 L834.2 259.9 L833.5 259.9 L832.8 260.1 L832.0 260.4 L831.2 260.0 L830.5 259.9 L829.8 260.6 L829.0 260.5 L828.2 260.7 L827.5 260.5 L826.8 260.6 L826.0 260.4 L825.2 260.6 L824.5 260.2 L823.8 260.3 L823.0 260.8 L822.2 260.3 L821.5 259.8 L820.8 259.8 L820.0 260.8 L819.2 263.7 L818.5 272.1 L817.8 280.7 L817.0 285.3 L816.2 288.3 L815.5 281.4 L814.8 272.8 L814.0 263.0 L813.2 253.1 L812.5 252.4 L811.8 252.4 L811.0 252.3 L810.2 252.3 L809.5 252.3 L808.8 252.3 L808.0 252.2 Z" fill="#5c5a68"/>
<path d="M934.8 486.8 L935.5 482.4 L936.3 477.5 L937.0 475.9 L937.8 474.9 L938.5 473.7 L939.3 473.4 L940.0 472.0 L940.8 471.9 L941.5 471.6 L942.3 472.2 L943.0 471.2 L943.8 471.2 L944.5 471.3 L945.3 471.8 L946.0 473.1 L946.8 473.4 L947.5 473.7 L948.3 474.6 L949.0 476.1 L949.8 476.3 L950.5 477.9 L951.3 478.4 L952.0 478.7 L952.8 478.7 L953.5 478.3 L954.3 478.7 L955.0 477.6 L955.8 477.6 L956.5 476.7 L957.3 475.2 L958.0 473.9 L958.8 470.1 L959.5 464.3 L960.3 458.8 L961.0 455.0 L961.8 452.5 L962.5 448.0 L963.3 448.1 L964.0 447.0 L964.8 446.1 L965.5 447.3 L966.3 447.5 L967.0 449.9 L967.8 452.7 L968.5 454.0 L969.3 459.0 L970.0 463.8 L970.8 469.2 L971.5 471.9 L972.3 472.2 L973.0 473.7 L973.8 474.2 L974.5 475.2 L975.3 475.9 L976.0 477.7 L976.8 478.5 L977.5 479.8 L978.3 481.2 L979.0 482.0 L979.8 483.0 L980.5 483.9 L981.3 485.1 L982.0 485.8 L982.8 486.2 L983.5 486.5 L984.3 486.8 L985.0 486.8 L985.8 487.1 L986.5 487.3 L987.3 487.6 L988.0 487.8 L988.0 493.7 L987.3 494.1 L986.5 494.3 L985.8 494.5 L985.0 494.8 L984.3 494.9 L983.5 495.3 L982.8 495.4 L982.0 495.6 L981.3 496.7 L980.5 497.7 L979.8 498.3 L979.0 499.7 L978.3 500.8 L977.5 502.2 L976.8 503.1 L976.0 504.3 L975.3 505.0 L974.5 506.0 L973.8 507.0 L973.0 507.8 L972.3 508.7 L971.5 509.6 L970.8 511.7 L970.0 517.4 L969.3 523.0 L968.5 526.1 L967.8 530.4 L967.0 532.9 L966.3 535.4 L965.5 534.2 L964.8 536.9 L964.0 536.5 L963.3 534.3 L962.5 533.9 L961.8 529.6 L961.0 526.4 L960.3 522.9 L959.5 517.5 L958.8 511.5 L958.0 508.2 L957.3 505.8 L956.5 505.3 L955.8 504.6 L955.0 503.8 L954.3 503.1 L953.5 503.4 L952.8 503.2 L952.0 503.6 L951.3 503.5 L950.5 504.4 L949.8 505.1 L949.0 505.5 L948.3 506.4 L947.5 507.9 L946.8 508.4 L946.0 509.0 L945.3 508.8 L944.5 509.2 L943.8 509.7 L943.0 510.0 L942.3 510.0 L941.5 509.9 L940.8 509.5 L940.0 508.8 L939.3 508.4 L938.5 508.1 L937.8 507.1 L937.0 506.0 L936.3 504.2 L935.5 499.3 L934.8 494.6 Z" fill="#5c5a68"/>
<rect x="138.5" y="623.3" width="75.0" height="42.5" fill="#6b5cd8"/>
<path d="M141.0 642.7 L141.8 639.1 L142.5 635.3 L143.2 631.0 L144.0 629.3 L144.8 628.8 L145.5 628.9 L146.2 627.8 L147.0 628.2 L147.8 628.3 L148.5 629.2 L149.2 629.2 L150.0 628.2 L150.8 628.7 L151.5 628.7 L152.2 629.8 L153.0 630.1 L153.8 629.9 L154.5 631.2 L155.2 631.2 L156.0 631.9 L156.8 632.8 L157.5 632.6 L158.2 633.4 L159.0 634.1 L159.8 634.9 L160.5 634.8 L161.2 635.0 L162.0 635.4 L162.8 636.6 L163.5 636.9 L164.2 636.8 L165.0 636.7 L165.8 637.0 L166.5 636.7 L167.2 636.5 L168.0 637.0 L168.8 637.2 L169.5 636.9 L170.2 636.5 L171.0 636.5 L171.8 636.2 L172.5 636.0 L173.2 636.0 L174.0 632.0 L174.8 627.4 L175.5 626.2 L176.2 625.0 L177.0 625.1 L177.8 626.3 L178.5 624.6 L179.2 624.7 L180.0 625.3 L180.8 624.6 L181.5 625.8 L182.2 627.3 L183.0 626.9 L183.8 627.7 L184.5 628.6 L185.2 629.0 L186.0 628.7 L186.8 628.8 L187.5 629.3 L188.2 630.0 L189.0 630.4 L189.8 630.1 L190.5 630.5 L191.2 630.6 L192.0 631.6 L192.8 631.4 L193.5 631.5 L194.2 632.0 L195.0 631.3 L195.8 630.7 L196.5 630.9 L197.2 631.4 L198.0 630.1 L198.8 630.2 L199.5 629.6 L200.2 629.0 L201.0 629.0 L201.8 627.3 L202.5 626.5 L203.2 626.6 L204.0 625.6 L204.8 626.0 L205.5 625.9 L206.2 625.9 L207.0 624.7 L207.8 625.0 L208.5 624.4 L209.2 624.9 L210.0 626.4 L210.8 626.4 L211.5 626.5 L212.2 627.3 L213.0 634.1 L213.8 639.2 L214.5 639.8 L215.2 640.3 L216.0 640.6 L216.8 641.8 L217.5 642.5 L218.2 643.2 L219.0 644.1 L219.0 645.1 L218.2 645.9 L217.5 646.7 L216.8 647.5 L216.0 648.3 L215.2 648.8 L214.5 649.6 L213.8 649.9 L213.0 655.0 L212.2 661.9 L211.5 663.9 L210.8 662.7 L210.0 663.8 L209.2 663.4 L208.5 664.3 L207.8 664.8 L207.0 663.9 L206.2 663.5 L205.5 663.4 L204.8 662.9 L204.0 663.8 L203.2 662.2 L202.5 661.6 L201.8 661.7 L201.0 660.5 L200.2 659.5 L199.5 660.4 L198.8 659.5 L198.0 657.7 L197.2 658.7 L196.5 658.4 L195.8 658.5 L195.0 657.8 L194.2 657.0 L193.5 658.0 L192.8 657.7 L192.0 658.2 L191.2 657.4 L190.5 658.3 L189.8 658.9 L189.0 659.2 L188.2 659.3 L187.5 659.9 L186.8 659.5 L186.0 660.4 L185.2 660.3 L184.5 660.9 L183.8 662.7 L183.0 662.1 L182.2 662.4 L181.5 663.1 L180.8 663.8 L180.0 664.6 L179.2 664.0 L178.5 664.5 L177.8 664.6 L177.0 663.0 L176.2 663.9 L175.5 662.9 L174.8 661.2 L174.0 656.7 L173.2 652.8 L172.5 653.1 L171.8 652.4 L171.0 652.8 L170.2 652.3 L169.5 652.1 L168.8 652.5 L168.0 651.9 L167.2 652.2 L166.5 652.3 L165.8 652.1 L165.0 652.6 L164.2 652.5 L163.5 652.8 L162.8 652.8 L162.0 653.2 L161.2 653.8 L160.5 654.1 L159.8 655.2 L159.0 655.6 L158.2 655.4 L157.5 656.2 L156.8 656.5 L156.0 657.5 L155.2 657.6 L154.5 658.3 L153.8 659.1 L153.0 659.8 L152.2 659.8 L151.5 659.8 L150.8 659.6 L150.0 661.0 L149.2 660.9 L148.5 661.6 L147.8 661.2 L147.0 660.4 L146.2 661.2 L145.5 659.7 L144.8 660.3 L144.0 659.3 L143.2 657.6 L142.5 654.0 L141.8 650.5 L141.0 646.6 Z" fill="#9185e0" clip-path="url(#c_b1)"/>
<rect x="226.8" y="366.9" width="67.0" height="42.3" fill="#6b5cd8"/>
<path d="M226.5 387.1 L227.2 378.8 L228.0 371.1 L228.8 364.2 L229.5 365.8 L230.2 363.7 L231.0 365.5 L231.8 364.8 L232.5 365.3 L233.2 368.1 L234.0 368.1 L234.8 368.4 L235.5 369.8 L236.2 369.2 L237.0 369.7 L237.8 370.3 L238.5 370.4 L239.2 371.1 L240.0 371.8 L240.8 371.7 L241.5 372.1 L242.2 372.3 L243.0 371.9 L243.8 370.9 L244.5 370.9 L245.2 371.6 L246.0 370.6 L246.8 370.6 L247.5 369.4 L248.2 369.4 L249.0 370.0 L249.8 369.2 L250.5 369.6 L251.2 368.6 L252.0 368.1 L252.8 367.5 L253.5 367.1 L254.2 367.2 L255.0 367.3 L255.8 366.1 L256.5 366.3 L257.2 364.2 L258.0 363.7 L258.8 363.3 L259.5 364.7 L260.2 363.0 L261.0 364.7 L261.8 365.5 L262.5 364.3 L263.2 365.3 L264.0 367.5 L264.8 366.5 L265.5 368.2 L266.2 368.5 L267.0 370.4 L267.8 370.8 L268.5 370.5 L269.2 372.3 L270.0 372.1 L270.8 374.0 L271.5 373.5 L272.2 374.0 L273.0 374.9 L273.8 375.6 L274.5 376.6 L275.2 376.4 L276.0 377.4 L276.8 377.5 L277.5 378.7 L278.2 378.7 L279.0 379.8 L279.8 379.9 L280.5 380.4 L281.2 381.1 L282.0 381.6 L282.8 381.8 L283.5 382.4 L284.2 382.6 L285.0 383.0 L285.8 383.5 L286.5 384.1 L287.2 384.3 L288.0 384.6 L288.8 385.0 L289.5 385.4 L290.2 385.5 L291.0 386.0 L291.8 386.2 L292.5 386.4 L293.2 386.6 L294.0 386.9 L294.8 387.0 L295.5 387.1 L296.2 387.1 L297.0 387.2 L297.8 387.3 L298.5 387.4 L299.2 387.5 L299.2 388.5 L298.5 388.6 L297.8 388.7 L297.0 388.8 L296.2 388.9 L295.5 388.9 L294.8 389.0 L294.0 389.1 L293.2 389.3 L292.5 389.5 L291.8 389.9 L291.0 390.2 L290.2 390.4 L289.5 390.7 L288.8 391.1 L288.0 391.5 L287.2 391.8 L286.5 392.1 L285.8 392.5 L285.0 392.9 L284.2 393.4 L283.5 393.8 L282.8 394.3 L282.0 394.2 L281.2 395.0 L280.5 395.0 L279.8 395.5 L279.0 396.1 L278.2 396.5 L277.5 397.6 L276.8 398.5 L276.0 398.4 L275.2 398.7 L274.5 400.1 L273.8 399.8 L273.0 401.3 L272.2 401.0 L271.5 402.2 L270.8 401.8 L270.0 402.4 L269.2 403.9 L268.5 404.9 L267.8 405.4 L267.0 407.0 L266.2 407.3 L265.5 408.2 L264.8 408.9 L264.0 408.9 L263.2 410.5 L262.5 409.9 L261.8 410.2 L261.0 412.6 L260.2 411.6 L259.5 411.0 L258.8 411.2 L258.0 411.9 L257.2 411.1 L256.5 411.4 L255.8 409.1 L255.0 410.2 L254.2 408.4 L253.5 407.8 L252.8 408.3 L252.0 407.5 L251.2 407.6 L250.5 407.4 L249.8 406.4 L249.0 406.5 L248.2 406.6 L247.5 405.7 L246.8 404.9 L246.0 405.1 L245.2 404.7 L244.5 404.6 L243.8 403.8 L243.0 404.6 L242.2 404.6 L241.5 403.8 L240.8 403.4 L240.0 403.7 L239.2 404.7 L238.5 404.2 L237.8 405.4 L237.0 405.7 L236.2 406.7 L235.5 407.5 L234.8 406.7 L234.0 407.0 L233.2 408.6 L232.5 411.0 L231.8 410.7 L231.0 411.4 L230.2 410.7 L229.5 410.4 L228.8 411.7 L228.0 405.9 L227.2 396.7 L226.5 389.0 Z" fill="#9185e0" clip-path="url(#c_b2)"/>
<rect x="339.5" y="362.2" width="176.8" height="42.6" fill="#7a66f6"/>
<path d="M339.5 381.7 L340.2 380.7 L341.0 379.9 L341.8 379.0 L342.5 378.2 L343.2 378.0 L344.0 376.9 L344.8 376.4 L345.5 375.5 L346.2 375.4 L347.0 374.5 L347.8 373.7 L348.5 373.9 L349.2 374.2 L350.0 374.8 L350.8 375.5 L351.5 376.0 L352.2 376.3 L353.0 376.5 L353.8 377.4 L354.5 377.6 L355.2 377.6 L356.0 378.6 L356.8 378.3 L357.5 377.6 L358.2 377.6 L359.0 377.6 L359.8 377.2 L360.5 377.1 L361.2 376.5 L362.0 376.1 L362.8 376.2 L363.5 376.6 L364.2 376.7 L365.0 376.7 L365.8 377.0 L366.5 376.8 L367.2 377.0 L368.0 377.1 L368.8 376.6 L369.5 377.2 L370.2 377.3 L371.0 377.2 L371.8 377.2 L372.5 377.5 L373.2 377.4 L374.0 377.1 L374.8 371.0 L375.5 363.9 L376.2 361.8 L377.0 362.5 L377.8 361.7 L378.5 361.3 L379.2 361.7 L380.0 363.4 L380.8 364.1 L381.5 362.2 L382.2 364.6 L383.0 363.8 L383.8 363.3 L384.5 363.4 L385.2 363.4 L386.0 365.5 L386.8 365.3 L387.5 365.6 L388.2 364.1 L389.0 364.8 L389.8 363.8 L390.5 365.0 L391.2 364.4 L392.0 364.9 L392.8 364.3 L393.5 366.3 L394.2 366.8 L395.0 367.2 L395.8 366.6 L396.5 368.4 L397.2 367.7 L398.0 368.0 L398.8 367.5 L399.5 367.8 L400.2 367.5 L401.0 367.9 L401.8 367.5 L402.5 368.4 L403.2 367.7 L404.0 368.2 L404.8 367.6 L405.5 367.4 L406.2 367.3 L407.0 366.1 L407.8 362.2 L408.5 358.3 L409.2 356.8 L410.0 361.1 L410.8 363.8 L411.5 365.0 L412.2 364.3 L413.0 364.6 L413.8 365.6 L414.5 366.9 L415.2 366.4 L416.0 366.4 L416.8 367.3 L417.5 367.6 L418.2 368.8 L419.0 369.6 L419.8 369.5 L420.5 370.0 L421.2 370.0 L422.0 372.0 L422.8 374.1 L423.5 377.2 L424.2 378.8 L425.0 379.1 L425.8 379.7 L426.5 379.9 L427.2 379.7 L428.0 380.4 L428.8 380.2 L429.5 380.0 L430.2 380.1 L431.0 380.1 L431.8 379.6 L432.5 374.1 L433.2 366.6 L434.0 361.7 L434.8 358.9 L435.5 355.2 L436.2 354.2 L437.0 355.2 L437.8 352.8 L438.5 354.3 L439.2 352.4 L440.0 355.4 L440.8 356.3 L441.5 359.7 L442.2 362.1 L443.0 365.0 L443.8 364.9 L444.5 363.4 L445.2 365.4 L446.0 363.9 L446.8 364.5 L447.5 364.4 L448.2 365.1 L449.0 364.2 L449.8 364.6 L450.5 365.5 L451.2 365.9 L452.0 365.3 L452.8 366.5 L453.5 366.3 L454.2 365.0 L455.0 365.0 L455.8 365.3 L456.5 364.5 L457.2 365.4 L458.0 364.0 L458.8 364.1 L459.5 367.3 L460.2 372.3 L461.0 378.1 L461.8 378.3 L462.5 378.6 L463.2 378.4 L464.0 378.9 L464.8 364.4 L465.5 358.3 L466.2 357.2 L467.0 357.1 L467.8 358.9 L468.5 358.5 L469.2 356.1 L470.0 357.4 L470.8 354.3 L471.5 355.1 L472.2 354.5 L473.0 357.8 L473.8 357.0 L474.5 359.0 L475.2 367.1 L476.0 378.2 L476.8 378.6 L477.5 378.8 L478.2 379.7 L479.0 379.9 L479.8 380.4 L480.5 380.5 L481.2 380.7 L482.0 380.7 L482.8 380.4 L483.5 380.6 L484.2 380.3 L485.0 380.3 L485.8 380.4 L486.5 380.2 L487.2 380.0 L488.0 379.7 L488.8 379.3 L489.5 379.4 L490.2 378.8 L491.0 378.6 L491.8 377.4 L492.5 376.5 L493.2 371.4 L494.0 354.5 L494.8 350.9 L495.5 357.7 L496.2 364.2 L497.0 366.6 L497.8 368.4 L498.5 368.5 L499.2 368.6 L500.0 367.7 L500.8 367.7 L501.5 366.3 L502.2 365.9 L503.0 367.0 L503.8 366.8 L504.5 367.2 L505.2 368.0 L506.0 368.5 L506.8 368.2 L507.5 369.6 L508.2 368.8 L509.0 369.7 L509.8 371.8 L510.5 372.2 L511.2 372.4 L512.0 371.9 L512.8 373.2 L513.5 373.1 L514.2 373.0 L515.0 373.5 L515.8 374.3 L515.8 392.3 L515.0 393.4 L514.2 393.8 L513.5 393.9 L512.8 395.0 L512.0 394.4 L511.2 395.2 L510.5 395.7 L509.8 395.8 L509.0 397.2 L508.2 397.7 L507.5 397.3 L506.8 398.2 L506.0 400.3 L505.2 399.3 L504.5 400.4 L503.8 399.0 L503.0 400.6 L502.2 399.5 L501.5 400.7 L500.8 400.5 L500.0 399.7 L499.2 399.5 L498.5 399.5 L497.8 398.4 L497.0 400.2 L496.2 402.4 L495.5 410.2 L494.8 414.5 L494.0 413.2 L493.2 395.4 L492.5 389.9 L491.8 389.2 L491.0 388.5 L490.2 387.8 L489.5 388.0 L488.8 387.6 L488.0 387.4 L487.2 387.0 L486.5 386.8 L485.8 386.9 L485.0 386.7 L484.2 386.8 L483.5 386.4 L482.8 386.5 L482.0 386.7 L481.2 386.4 L480.5 386.3 L479.8 386.6 L479.0 386.9 L478.2 387.5 L477.5 388.2 L476.8 388.4 L476.0 389.3 L475.2 399.9 L474.5 410.4 L473.8 408.7 L473.0 412.2 L472.2 411.9 L471.5 410.0 L470.8 411.2 L470.0 411.0 L469.2 409.3 L468.5 411.0 L467.8 410.9 L467.0 409.7 L466.2 410.3 L465.5 408.8 L464.8 403.3 L464.0 388.5 L463.2 388.2 L462.5 388.8 L461.8 388.6 L461.0 388.9 L460.2 394.2 L459.5 399.9 L458.8 401.1 L458.0 402.4 L457.2 400.9 L456.5 402.0 L455.8 402.4 L455.0 400.5 L454.2 400.8 L453.5 402.1 L452.8 402.0 L452.0 402.4 L451.2 401.2 L450.5 402.6 L449.8 402.2 L449.0 403.3 L448.2 401.2 L447.5 403.0 L446.8 402.1 L446.0 403.8 L445.2 402.3 L444.5 403.5 L443.8 403.1 L443.0 402.8 L442.2 404.4 L441.5 409.1 L440.8 411.2 L440.0 411.4 L439.2 414.7 L438.5 412.5 L437.8 413.7 L437.0 413.0 L436.2 410.3 L435.5 409.2 L434.8 407.8 L434.0 404.9 L433.2 400.9 L432.5 392.7 L431.8 387.4 L431.0 387.3 L430.2 386.9 L429.5 386.8 L428.8 387.1 L428.0 386.8 L427.2 387.0 L426.5 387.6 L425.8 387.4 L425.0 387.9 L424.2 388.3 L423.5 390.3 L422.8 392.7 L422.0 396.3 L421.2 396.6 L420.5 397.1 L419.8 397.3 L419.0 398.0 L418.2 397.6 L417.5 399.4 L416.8 400.3 L416.0 400.8 L415.2 401.3 L414.5 399.9 L413.8 402.1 L413.0 400.7 L412.2 402.7 L411.5 402.4 L410.8 404.1 L410.0 408.0 L409.2 408.7 L408.5 409.1 L407.8 407.1 L407.0 401.4 L406.2 399.9 L405.5 400.2 L404.8 400.8 L404.0 399.6 L403.2 398.7 L402.5 398.8 L401.8 398.3 L401.0 399.7 L400.2 399.4 L399.5 398.0 L398.8 398.0 L398.0 399.4 L397.2 399.2 L396.5 399.4 L395.8 400.4 L395.0 401.1 L394.2 400.7 L393.5 402.3 L392.8 401.0 L392.0 400.9 L391.2 402.2 L390.5 402.4 L389.8 402.0 L389.0 403.3 L388.2 401.3 L387.5 401.9 L386.8 402.5 L386.0 403.5 L385.2 402.7 L384.5 402.6 L383.8 401.9 L383.0 403.7 L382.2 402.0 L381.5 403.7 L380.8 403.0 L380.0 405.5 L379.2 406.2 L378.5 405.8 L377.8 406.4 L377.0 404.4 L376.2 404.7 L375.5 404.5 L374.8 396.7 L374.0 389.8 L373.2 390.0 L372.5 389.6 L371.8 389.6 L371.0 389.9 L370.2 389.5 L369.5 390.2 L368.8 390.2 L368.0 390.3 L367.2 390.5 L366.5 390.2 L365.8 390.0 L365.0 390.7 L364.2 390.2 L363.5 390.3 L362.8 390.2 L362.0 390.7 L361.2 390.7 L360.5 389.9 L359.8 389.5 L359.0 389.4 L358.2 389.1 L357.5 389.1 L356.8 388.7 L356.0 388.6 L355.2 388.9 L354.5 389.4 L353.8 390.3 L353.0 390.6 L352.2 390.5 L351.5 391.1 L350.8 391.6 L350.0 392.2 L349.2 392.8 L348.5 392.8 L347.8 393.0 L347.0 392.1 L346.2 391.6 L345.5 391.1 L344.8 390.6 L344.0 389.5 L343.2 389.3 L342.5 388.3 L341.8 387.8 L341.0 387.0 L340.2 386.3 L339.5 385.3 Z" fill="#a596fb" clip-path="url(#c_b3)"/>
<rect x="330.5" y="362.2" width="9.0" height="42.6" fill="#237a5b"/>
<rect x="512.0" y="449.6" width="84.0" height="42.4" fill="#6b5cd8"/>
<path d="M512.0 469.9 L512.8 467.9 L513.5 466.3 L514.2 464.1 L515.0 461.7 L515.8 458.4 L516.5 456.1 L517.2 454.4 L518.0 453.0 L518.8 452.7 L519.5 451.8 L520.2 451.3 L521.0 451.3 L521.8 452.0 L522.5 451.2 L523.2 451.7 L524.0 450.5 L524.8 451.1 L525.5 451.0 L526.2 451.1 L527.0 450.5 L527.8 451.6 L528.5 450.9 L529.2 451.4 L530.0 451.2 L530.8 451.9 L531.5 451.4 L532.2 452.8 L533.0 452.5 L533.8 454.2 L534.5 454.2 L535.2 455.4 L536.0 456.0 L536.8 457.1 L537.5 458.3 L538.2 459.1 L539.0 460.8 L539.8 461.5 L540.5 462.4 L541.2 462.4 L542.0 463.0 L542.8 462.9 L543.5 463.6 L544.2 463.5 L545.0 462.2 L545.8 461.2 L546.5 459.9 L547.2 458.8 L548.0 457.6 L548.8 455.9 L549.5 455.3 L550.2 454.8 L551.0 454.1 L551.8 453.9 L552.5 453.2 L553.2 453.0 L554.0 453.3 L554.8 453.3 L555.5 453.7 L556.2 453.8 L557.0 454.2 L557.8 455.3 L558.5 455.6 L559.2 456.0 L560.0 456.0 L560.8 457.1 L561.5 458.3 L562.2 458.7 L563.0 458.0 L563.8 458.9 L564.5 459.1 L565.2 459.2 L566.0 459.0 L566.8 458.8 L567.5 459.2 L568.2 458.8 L569.0 458.9 L569.8 459.3 L570.5 458.8 L571.2 458.7 L572.0 459.1 L572.8 459.3 L573.5 459.0 L574.2 458.5 L575.0 458.9 L575.8 459.2 L576.5 459.5 L577.2 459.0 L578.0 459.2 L578.8 459.5 L579.5 459.7 L580.2 459.7 L581.0 459.7 L581.8 459.6 L582.5 459.5 L583.2 460.2 L584.0 460.3 L584.8 460.1 L585.5 460.7 L586.2 460.4 L587.0 460.6 L587.8 460.9 L588.5 461.5 L589.2 461.9 L590.0 461.9 L590.8 462.3 L591.5 462.6 L592.2 463.6 L593.0 464.0 L593.8 464.6 L594.5 465.5 L595.2 466.6 L596.0 468.3 L596.8 469.8 L596.8 471.8 L596.0 473.4 L595.2 475.1 L594.5 476.1 L593.8 476.7 L593.0 477.7 L592.2 478.1 L591.5 478.6 L590.8 479.3 L590.0 479.1 L589.2 479.8 L588.5 480.4 L587.8 480.4 L587.0 480.8 L586.2 480.9 L585.5 481.4 L584.8 481.4 L584.0 481.0 L583.2 481.6 L582.5 482.0 L581.8 482.3 L581.0 481.8 L580.2 481.6 L579.5 482.4 L578.8 482.7 L578.0 482.7 L577.2 482.2 L576.5 482.5 L575.8 482.9 L575.0 482.9 L574.2 482.3 L573.5 482.3 L572.8 482.6 L572.0 482.7 L571.2 482.5 L570.5 482.2 L569.8 482.1 L569.0 482.0 L568.2 482.6 L567.5 482.6 L566.8 482.8 L566.0 482.2 L565.2 483.1 L564.5 483.1 L563.8 483.3 L563.0 483.3 L562.2 482.8 L561.5 484.1 L560.8 484.0 L560.0 484.6 L559.2 485.5 L558.5 485.8 L557.8 487.4 L557.0 487.5 L556.2 488.4 L555.5 487.9 L554.8 489.1 L554.0 488.9 L553.2 488.1 L552.5 487.9 L551.8 488.2 L551.0 487.9 L550.2 486.8 L549.5 486.7 L548.8 485.0 L548.0 484.0 L547.2 482.6 L546.5 481.5 L545.8 480.7 L545.0 479.4 L544.2 478.6 L543.5 478.5 L542.8 478.4 L542.0 478.5 L541.2 479.2 L540.5 479.3 L539.8 479.9 L539.0 481.4 L538.2 482.0 L537.5 483.9 L536.8 485.3 L536.0 486.0 L535.2 486.9 L534.5 488.0 L533.8 487.4 L533.0 489.2 L532.2 488.6 L531.5 489.6 L530.8 489.0 L530.0 490.2 L529.2 490.0 L528.5 489.9 L527.8 489.5 L527.0 490.2 L526.2 491.0 L525.5 489.8 L524.8 489.9 L524.0 489.7 L523.2 490.7 L522.5 490.7 L521.8 489.3 L521.0 490.2 L520.2 489.9 L519.5 488.8 L518.8 489.1 L518.0 487.8 L517.2 487.9 L516.5 485.3 L515.8 483.1 L515.0 480.0 L514.2 477.6 L513.5 475.5 L512.8 473.6 L512.0 471.8 Z" fill="#9185e0" clip-path="url(#c_b4)"/>
<rect x="605.4" y="368.0" width="137.6" height="42.0" fill="#6b5cd8"/>
<path d="M606.0 388.0 L606.8 385.5 L607.5 382.8 L608.2 380.8 L609.0 380.7 L609.8 379.4 L610.5 378.9 L611.2 378.7 L612.0 378.2 L612.8 377.9 L613.5 378.5 L614.2 377.7 L615.0 378.3 L615.8 378.2 L616.5 377.9 L617.2 378.1 L618.0 378.4 L618.8 378.9 L619.5 379.1 L620.2 379.2 L621.0 379.6 L621.8 380.7 L622.5 382.5 L623.2 383.4 L624.0 383.2 L624.8 383.5 L625.5 383.5 L626.2 383.6 L627.0 383.4 L627.8 383.6 L628.5 383.7 L629.2 383.7 L630.0 383.8 L630.8 383.6 L631.5 383.6 L632.2 383.4 L633.0 383.3 L633.8 383.3 L634.5 383.2 L635.2 383.3 L636.0 383.1 L636.8 383.3 L637.5 382.5 L638.2 381.0 L639.0 379.9 L639.8 379.1 L640.5 377.4 L641.2 377.3 L642.0 375.5 L642.8 374.5 L643.5 374.9 L644.2 374.4 L645.0 374.2 L645.8 373.3 L646.5 373.9 L647.2 373.1 L648.0 372.5 L648.8 373.0 L649.5 373.2 L650.2 374.1 L651.0 374.0 L651.8 373.1 L652.5 373.7 L653.2 373.7 L654.0 374.0 L654.8 374.5 L655.5 374.5 L656.2 373.4 L657.0 374.3 L657.8 373.3 L658.5 373.9 L659.2 373.4 L660.0 373.6 L660.8 373.4 L661.5 373.4 L662.2 373.9 L663.0 373.1 L663.8 373.0 L664.5 373.7 L665.2 373.6 L666.0 373.3 L666.8 373.9 L667.5 373.8 L668.2 372.9 L669.0 373.7 L669.8 373.0 L670.5 373.0 L671.2 373.6 L672.0 374.1 L672.8 373.8 L673.5 373.7 L674.2 374.6 L675.0 374.2 L675.8 378.8 L676.5 382.3 L677.2 385.4 L678.0 385.6 L678.8 386.1 L679.5 386.3 L680.2 386.7 L681.0 387.1 L681.8 386.8 L682.5 386.7 L683.2 386.3 L684.0 386.0 L684.8 385.4 L685.5 384.4 L686.2 383.6 L687.0 383.7 L687.8 383.9 L688.5 384.0 L689.2 384.2 L690.0 384.3 L690.8 383.3 L691.5 382.7 L692.2 381.7 L693.0 379.0 L693.8 376.3 L694.5 375.4 L695.2 374.9 L696.0 374.4 L696.8 373.5 L697.5 373.1 L698.2 373.0 L699.0 374.1 L699.8 374.1 L700.5 374.1 L701.2 374.5 L702.0 374.8 L702.8 374.7 L703.5 375.8 L704.2 375.9 L705.0 375.9 L705.8 376.5 L706.5 377.4 L707.2 376.4 L708.0 376.8 L708.8 376.7 L709.5 376.9 L710.2 376.2 L711.0 375.5 L711.8 375.1 L712.5 374.3 L713.2 374.0 L714.0 373.4 L714.8 372.7 L715.5 373.0 L716.2 372.6 L717.0 372.2 L717.8 372.9 L718.5 371.8 L719.2 372.1 L720.0 371.8 L720.8 372.8 L721.5 372.4 L722.2 372.2 L723.0 372.4 L723.8 373.1 L724.5 372.8 L725.2 373.1 L726.0 373.8 L726.8 374.0 L727.5 373.6 L728.2 373.9 L729.0 373.7 L729.8 374.3 L730.5 374.7 L731.2 375.2 L732.0 375.9 L732.8 376.6 L733.5 376.2 L734.2 377.5 L735.0 377.1 L735.8 378.3 L736.5 378.5 L737.2 379.8 L738.0 380.1 L738.8 380.9 L739.5 382.0 L740.2 383.3 L741.0 384.1 L741.8 385.3 L742.5 386.4 L742.5 391.6 L741.8 392.6 L741.0 393.6 L740.2 394.7 L739.5 396.2 L738.8 396.7 L738.0 397.9 L737.2 398.6 L736.5 398.7 L735.8 400.2 L735.0 400.2 L734.2 400.7 L733.5 401.0 L732.8 401.4 L732.0 402.4 L731.2 402.5 L730.5 403.1 L729.8 403.8 L729.0 403.4 L728.2 404.4 L727.5 404.5 L726.8 404.7 L726.0 404.9 L725.2 405.4 L724.5 405.4 L723.8 404.9 L723.0 405.2 L722.2 404.8 L721.5 405.4 L720.8 405.4 L720.0 405.3 L719.2 406.1 L718.5 405.3 L717.8 405.7 L717.0 405.1 L716.2 405.5 L715.5 404.6 L714.8 404.7 L714.0 404.5 L713.2 404.4 L712.5 402.7 L711.8 402.4 L711.0 402.0 L710.2 401.2 L709.5 401.4 L708.8 401.2 L708.0 401.0 L707.2 401.1 L706.5 401.0 L705.8 400.9 L705.0 401.6 L704.2 401.5 L703.5 402.6 L702.8 402.8 L702.0 402.9 L701.2 403.7 L700.5 403.9 L699.8 404.4 L699.0 404.0 L698.2 404.6 L697.5 404.5 L696.8 404.7 L696.0 403.8 L695.2 403.2 L694.5 402.4 L693.8 401.9 L693.0 398.9 L692.2 396.6 L691.5 395.1 L690.8 394.5 L690.0 393.8 L689.2 393.9 L688.5 393.9 L687.8 394.3 L687.0 394.3 L686.2 394.2 L685.5 393.7 L684.8 392.7 L684.0 391.9 L683.2 391.5 L682.5 391.4 L681.8 391.2 L681.0 391.0 L680.2 391.3 L679.5 391.7 L678.8 391.9 L678.0 392.4 L677.2 392.8 L676.5 395.5 L675.8 399.4 L675.0 403.5 L674.2 403.3 L673.5 403.4 L672.8 404.3 L672.0 404.1 L671.2 404.2 L670.5 404.7 L669.8 404.3 L669.0 404.8 L668.2 405.0 L667.5 405.3 L666.8 405.2 L666.0 404.7 L665.2 404.7 L664.5 404.1 L663.8 404.1 L663.0 404.2 L662.2 404.4 L661.5 404.7 L660.8 403.7 L660.0 403.8 L659.2 404.2 L658.5 403.7 L657.8 404.1 L657.0 403.4 L656.2 404.3 L655.5 404.3 L654.8 404.4 L654.0 404.4 L653.2 403.9 L652.5 403.9 L651.8 404.4 L651.0 404.3 L650.2 404.5 L649.5 404.9 L648.8 404.5 L648.0 405.2 L647.2 404.7 L646.5 404.8 L645.8 404.7 L645.0 404.2 L644.2 403.4 L643.5 403.2 L642.8 403.6 L642.0 402.4 L641.2 400.7 L640.5 399.9 L639.8 398.8 L639.0 397.7 L638.2 396.7 L637.5 395.4 L636.8 394.7 L636.0 394.9 L635.2 394.8 L634.5 394.4 L633.8 394.8 L633.0 394.3 L632.2 394.4 L631.5 394.5 L630.8 394.2 L630.0 394.1 L629.2 394.2 L628.5 394.2 L627.8 394.3 L627.0 394.3 L626.2 394.6 L625.5 394.7 L624.8 394.4 L624.0 394.8 L623.2 395.0 L622.5 395.9 L621.8 397.1 L621.0 398.6 L620.2 398.9 L619.5 399.2 L618.8 399.0 L618.0 399.2 L617.2 400.1 L616.5 400.3 L615.8 400.1 L615.0 400.0 L614.2 399.6 L613.5 399.6 L612.8 399.4 L612.0 399.8 L611.2 399.9 L610.5 399.0 L609.8 398.3 L609.0 397.9 L608.2 396.9 L607.5 394.9 L606.8 392.6 L606.0 390.0 Z" fill="#9185e0" clip-path="url(#c_b5)"/>
<rect x="758.1" y="229.1" width="49.9" height="42.8" fill="#237a5b"/>
<path d="M757.0 251.1 L757.8 251.0 L758.5 250.8 L759.2 250.7 L760.0 250.6 L760.8 250.6 L761.5 250.6 L762.2 250.6 L763.0 250.5 L763.8 250.5 L764.5 250.5 L765.2 250.5 L766.0 250.5 L766.8 250.5 L767.5 250.6 L768.2 250.7 L769.0 250.7 L769.8 250.8 L770.5 250.8 L771.2 250.8 L772.0 250.9 L772.8 250.9 L773.5 250.9 L774.2 250.9 L775.0 250.9 L775.8 250.9 L776.5 250.9 L777.2 250.9 L778.0 250.9 L778.8 250.9 L779.5 250.9 L780.2 250.9 L781.0 250.9 L781.8 250.9 L782.5 250.9 L783.2 250.9 L784.0 250.9 L784.8 250.9 L785.5 250.9 L786.2 250.9 L787.0 250.9 L787.8 250.9 L788.5 250.9 L789.2 250.9 L790.0 250.9 L790.8 250.8 L791.5 250.8 L792.2 250.8 L793.0 250.7 L793.8 250.7 L794.5 250.6 L795.2 250.5 L796.0 250.5 L796.8 250.4 L797.5 250.3 L798.2 250.1 L799.0 250.0 L799.8 249.9 L800.5 249.8 L801.2 249.7 L802.0 249.5 L802.8 249.4 L803.5 249.3 L804.2 249.1 L805.0 249.0 L805.8 249.1 L806.5 249.2 L807.2 249.6 L808.0 250.8 L808.0 252.4 L807.2 253.6 L806.5 254.0 L805.8 254.1 L805.0 254.2 L804.2 254.1 L803.5 253.9 L802.8 253.8 L802.0 253.7 L801.2 253.5 L800.5 253.4 L799.8 253.3 L799.0 253.2 L798.2 253.1 L797.5 252.9 L796.8 252.8 L796.0 252.7 L795.2 252.7 L794.5 252.6 L793.8 252.5 L793.0 252.5 L792.2 252.4 L791.5 252.4 L790.8 252.3 L790.0 252.3 L789.2 252.3 L788.5 252.3 L787.8 252.3 L787.0 252.3 L786.2 252.3 L785.5 252.3 L784.8 252.3 L784.0 252.3 L783.2 252.3 L782.5 252.3 L781.8 252.3 L781.0 252.3 L780.2 252.3 L779.5 252.3 L778.8 252.3 L778.0 252.3 L777.2 252.3 L776.5 252.3 L775.8 252.3 L775.0 252.3 L774.2 252.3 L773.5 252.3 L772.8 252.3 L772.0 252.3 L771.2 252.3 L770.5 252.4 L769.8 252.4 L769.0 252.5 L768.2 252.5 L767.5 252.6 L766.8 252.7 L766.0 252.7 L765.2 252.7 L764.5 252.7 L763.8 252.7 L763.0 252.7 L762.2 252.6 L761.5 252.6 L760.8 252.6 L760.0 252.6 L759.2 252.5 L758.5 252.3 L757.8 252.2 L757.0 252.1 Z" fill="#5fb193" clip-path="url(#c_b6g)"/>
<rect x="808.0" y="229.1" width="127.0" height="42.8" fill="#6b5cd8"/>
<path d="M808.0 251.0 L808.8 250.9 L809.5 250.9 L810.2 250.9 L811.0 250.9 L811.8 250.8 L812.5 250.9 L813.2 250.2 L814.0 240.2 L814.8 229.6 L815.5 219.1 L816.2 214.5 L817.0 217.3 L817.8 222.3 L818.5 232.9 L819.2 239.5 L820.0 241.8 L820.8 243.2 L821.5 242.8 L822.2 242.9 L823.0 243.2 L823.8 243.0 L824.5 242.5 L825.2 242.5 L826.0 242.6 L826.8 242.3 L827.5 242.6 L828.2 243.0 L829.0 243.1 L829.8 242.8 L830.5 242.8 L831.2 243.0 L832.0 242.8 L832.8 242.8 L833.5 243.1 L834.2 242.6 L835.0 243.4 L835.8 242.6 L836.5 242.6 L837.2 243.4 L838.0 243.2 L838.8 243.4 L839.5 243.2 L840.2 242.3 L841.0 239.5 L841.8 236.7 L842.5 235.7 L843.2 234.3 L844.0 235.0 L844.8 234.4 L845.5 234.4 L846.2 233.6 L847.0 233.0 L847.8 232.9 L848.5 233.4 L849.2 232.2 L850.0 232.0 L850.8 233.4 L851.5 233.5 L852.2 231.4 L853.0 232.1 L853.8 232.4 L854.5 230.6 L855.2 230.6 L856.0 228.9 L856.8 229.1 L857.5 229.8 L858.2 230.1 L859.0 230.7 L859.8 232.3 L860.5 232.8 L861.2 231.8 L862.0 233.3 L862.8 233.5 L863.5 233.4 L864.2 233.3 L865.0 233.1 L865.8 236.5 L866.5 238.0 L867.2 241.6 L868.0 242.9 L868.8 244.2 L869.5 245.9 L870.2 242.9 L871.0 240.1 L871.8 236.6 L872.5 233.3 L873.2 230.3 L874.0 229.3 L874.8 231.7 L875.5 232.0 L876.2 231.5 L877.0 232.1 L877.8 230.6 L878.5 232.5 L879.2 232.8 L880.0 233.6 L880.8 235.4 L881.5 238.9 L882.2 242.3 L883.0 243.0 L883.8 244.0 L884.5 244.9 L885.2 245.0 L886.0 246.1 L886.8 246.1 L887.5 246.3 L888.2 246.4 L889.0 246.3 L889.8 246.5 L890.5 246.5 L891.2 247.0 L892.0 246.9 L892.8 246.7 L893.5 246.5 L894.2 246.7 L895.0 246.1 L895.8 246.4 L896.5 246.2 L897.2 246.2 L898.0 245.9 L898.8 245.2 L899.5 244.7 L900.2 244.4 L901.0 243.9 L901.8 234.9 L902.5 228.2 L903.2 227.4 L904.0 230.4 L904.8 230.3 L905.5 228.4 L906.2 225.3 L907.0 227.9 L907.8 228.5 L908.5 230.4 L909.2 231.9 L910.0 232.7 L910.8 232.7 L911.5 233.2 L912.2 233.4 L913.0 234.6 L913.8 234.8 L914.5 235.9 L915.2 235.5 L916.0 234.4 L916.8 234.4 L917.5 234.8 L918.2 234.5 L919.0 233.8 L919.8 234.5 L920.5 233.1 L921.2 233.3 L922.0 234.7 L922.8 234.7 L923.5 234.7 L924.2 234.6 L925.0 233.7 L925.8 234.7 L926.5 234.3 L927.2 233.8 L928.0 232.6 L928.8 232.6 L929.5 232.8 L930.2 232.1 L931.0 233.1 L931.8 233.4 L932.5 232.2 L933.2 232.7 L934.0 234.1 L934.8 232.8 L934.8 269.8 L934.0 269.1 L933.2 269.1 L932.5 269.3 L931.8 270.9 L931.0 271.4 L930.2 271.3 L929.5 271.1 L928.8 270.9 L928.0 270.2 L927.2 269.1 L926.5 269.6 L925.8 268.2 L925.0 269.3 L924.2 268.0 L923.5 268.6 L922.8 270.0 L922.0 268.5 L921.2 269.7 L920.5 270.4 L919.8 268.6 L919.0 269.9 L918.2 269.2 L917.5 267.9 L916.8 268.3 L916.0 267.3 L915.2 268.0 L914.5 268.7 L913.8 267.6 L913.0 268.0 L912.2 269.9 L911.5 270.0 L910.8 270.9 L910.0 270.2 L909.2 271.7 L908.5 273.6 L907.8 275.5 L907.0 276.3 L906.2 275.4 L905.5 276.0 L904.8 273.4 L904.0 274.2 L903.2 274.5 L902.5 276.6 L901.8 268.5 L901.0 259.2 L900.2 258.7 L899.5 258.1 L898.8 258.0 L898.0 257.2 L897.2 257.2 L896.5 256.8 L895.8 257.1 L895.0 256.7 L894.2 256.7 L893.5 256.5 L892.8 256.6 L892.0 256.3 L891.2 256.6 L890.5 256.5 L889.8 256.5 L889.0 257.1 L888.2 256.7 L887.5 256.9 L886.8 257.3 L886.0 257.1 L885.2 257.7 L884.5 258.2 L883.8 259.1 L883.0 259.9 L882.2 261.4 L881.5 263.9 L880.8 267.3 L880.0 268.7 L879.2 271.0 L878.5 271.0 L877.8 272.0 L877.0 270.9 L876.2 269.9 L875.5 271.8 L874.8 271.9 L874.0 273.0 L873.2 273.4 L872.5 269.4 L871.8 265.6 L871.0 262.8 L870.2 260.1 L869.5 257.6 L868.8 258.5 L868.0 259.9 L867.2 262.4 L866.5 264.3 L865.8 267.9 L865.0 268.8 L864.2 269.0 L863.5 269.6 L862.8 271.0 L862.0 269.7 L861.2 270.0 L860.5 271.5 L859.8 271.8 L859.0 272.8 L858.2 271.4 L857.5 271.6 L856.8 272.6 L856.0 274.6 L855.2 273.6 L854.5 273.3 L853.8 271.9 L853.0 270.4 L852.2 271.0 L851.5 270.6 L850.8 270.3 L850.0 271.0 L849.2 270.0 L848.5 269.2 L847.8 270.1 L847.0 270.0 L846.2 270.2 L845.5 268.9 L844.8 269.3 L844.0 268.0 L843.2 269.2 L842.5 268.7 L841.8 266.9 L841.0 264.3 L840.2 261.0 L839.5 260.0 L838.8 260.0 L838.0 259.9 L837.2 260.1 L836.5 260.4 L835.8 260.3 L835.0 260.1 L834.2 259.9 L833.5 259.9 L832.8 260.1 L832.0 260.4 L831.2 260.0 L830.5 259.9 L829.8 260.6 L829.0 260.5 L828.2 260.7 L827.5 260.5 L826.8 260.6 L826.0 260.4 L825.2 260.6 L824.5 260.2 L823.8 260.3 L823.0 260.8 L822.2 260.3 L821.5 259.8 L820.8 259.8 L820.0 260.8 L819.2 263.7 L818.5 272.1 L817.8 280.7 L817.0 285.3 L816.2 288.3 L815.5 281.4 L814.8 272.8 L814.0 263.0 L813.2 253.1 L812.5 252.4 L811.8 252.4 L811.0 252.3 L810.2 252.3 L809.5 252.3 L808.8 252.3 L808.0 252.2 Z" fill="#9185e0" clip-path="url(#c_b6)"/>
<rect x="934.8" y="469.0" width="53.6" height="43.0" fill="#6b5cd8"/>
<path d="M934.8 486.8 L935.5 482.4 L936.3 477.5 L937.0 475.9 L937.8 474.9 L938.5 473.7 L939.3 473.4 L940.0 472.0 L940.8 471.9 L941.5 471.6 L942.3 472.2 L943.0 471.2 L943.8 471.2 L944.5 471.3 L945.3 471.8 L946.0 473.1 L946.8 473.4 L947.5 473.7 L948.3 474.6 L949.0 476.1 L949.8 476.3 L950.5 477.9 L951.3 478.4 L952.0 478.7 L952.8 478.7 L953.5 478.3 L954.3 478.7 L955.0 477.6 L955.8 477.6 L956.5 476.7 L957.3 475.2 L958.0 473.9 L958.8 470.1 L959.5 464.3 L960.3 458.8 L961.0 455.0 L961.8 452.5 L962.5 448.0 L963.3 448.1 L964.0 447.0 L964.8 446.1 L965.5 447.3 L966.3 447.5 L967.0 449.9 L967.8 452.7 L968.5 454.0 L969.3 459.0 L970.0 463.8 L970.8 469.2 L971.5 471.9 L972.3 472.2 L973.0 473.7 L973.8 474.2 L974.5 475.2 L975.3 475.9 L976.0 477.7 L976.8 478.5 L977.5 479.8 L978.3 481.2 L979.0 482.0 L979.8 483.0 L980.5 483.9 L981.3 485.1 L982.0 485.8 L982.8 486.2 L983.5 486.5 L984.3 486.8 L985.0 486.8 L985.8 487.1 L986.5 487.3 L987.3 487.6 L988.0 487.8 L988.0 493.7 L987.3 494.1 L986.5 494.3 L985.8 494.5 L985.0 494.8 L984.3 494.9 L983.5 495.3 L982.8 495.4 L982.0 495.6 L981.3 496.7 L980.5 497.7 L979.8 498.3 L979.0 499.7 L978.3 500.8 L977.5 502.2 L976.8 503.1 L976.0 504.3 L975.3 505.0 L974.5 506.0 L973.8 507.0 L973.0 507.8 L972.3 508.7 L971.5 509.6 L970.8 511.7 L970.0 517.4 L969.3 523.0 L968.5 526.1 L967.8 530.4 L967.0 532.9 L966.3 535.4 L965.5 534.2 L964.8 536.9 L964.0 536.5 L963.3 534.3 L962.5 533.9 L961.8 529.6 L961.0 526.4 L960.3 522.9 L959.5 517.5 L958.8 511.5 L958.0 508.2 L957.3 505.8 L956.5 505.3 L955.8 504.6 L955.0 503.8 L954.3 503.1 L953.5 503.4 L952.8 503.2 L952.0 503.6 L951.3 503.5 L950.5 504.4 L949.8 505.1 L949.0 505.5 L948.3 506.4 L947.5 507.9 L946.8 508.4 L946.0 509.0 L945.3 508.8 L944.5 509.2 L943.8 509.7 L943.0 510.0 L942.3 510.0 L941.5 509.9 L940.8 509.5 L940.0 508.8 L939.3 508.4 L938.5 508.1 L937.8 507.1 L937.0 506.0 L936.3 504.2 L935.5 499.3 L934.8 494.6 Z" fill="#9185e0" clip-path="url(#c_b7)"/>
<rect x="989.6" y="469.0" width="18.6" height="43.0" fill="#237a5b"/>
<path d="M989.6 485.6 L990.4 474.6 L991.1 471.7 L991.9 470.2 L992.6 472.0 L993.4 473.3 L994.1 475.6 L994.9 477.7 L995.6 480.4 L996.4 483.1 L997.1 485.4 L997.9 487.5 L998.6 488.9 L999.4 489.6 L1000.1 490.3 L1000.9 490.4 L1001.6 490.4 L1002.4 490.4 L1003.1 490.4 L1003.9 490.5 L1004.6 490.5 L1005.4 490.5 L1006.1 490.5 L1006.9 490.5 L1007.6 490.5 L1007.6 492.5 L1006.9 492.5 L1006.1 492.5 L1005.4 492.6 L1004.6 492.5 L1003.9 492.6 L1003.1 492.6 L1002.4 492.6 L1001.6 492.6 L1000.9 492.7 L1000.1 492.7 L999.4 493.4 L998.6 494.2 L997.9 495.4 L997.1 497.6 L996.4 499.9 L995.6 502.2 L994.9 505.2 L994.1 507.8 L993.4 509.1 L992.6 511.4 L991.9 512.8 L991.1 511.1 L990.4 509.0 L989.6 497.3 Z" fill="#5fb193" clip-path="url(#c_b7g)"/>
<rect x="330.5" y="383" width="9" height="1.2" fill="#5fb193"/>
<rect x="340.2" y="362.9" width="175.4" height="41.2" fill="none" stroke="#f4f2ff" stroke-width="1.5"/>
<path d="M139.7 645.9 C140.3 646.1 142.1 646.2 143.5 646.9 C144.9 647.6 146.8 648.4 148.4 650.0 C150.1 651.6 152.2 654.7 153.4 656.3 C154.6 657.9 155.0 659.3 155.6 659.8 C156.2 660.3 156.7 660.7 157.2 659.4 C157.7 658.1 158.1 654.5 158.6 652.0 C159.1 649.5 159.2 646.3 160.2 644.6 C161.2 642.9 162.6 642.1 164.6 641.8 C166.6 641.5 169.5 642.3 172.0 642.6 C174.5 642.9 177.4 643.7 179.5 643.6 C181.6 643.5 183.4 643.1 184.6 642.2 C185.8 641.4 186.1 640.2 186.6 638.5 C187.1 636.8 187.1 636.1 187.6 632.0 C188.1 627.9 188.3 622.1 189.4 614.1 C190.5 606.1 192.7 594.2 194.4 584.3 C196.1 574.4 198.2 564.4 199.4 554.5 C200.6 544.6 201.4 533.0 201.4 524.7 C201.4 516.4 200.7 511.4 199.6 504.8 C198.5 498.2 195.9 490.8 194.6 485.0 C193.3 479.2 192.3 473.8 191.8 470.0 C191.3 466.2 191.3 464.5 191.6 462.0 C191.9 459.5 192.3 458.5 193.4 455.0 C194.5 451.5 196.6 446.2 197.9 441.0 C199.2 435.8 199.9 429.8 201.0 424.0 C202.1 418.2 203.3 410.8 204.4 406.3 C205.5 401.8 206.5 399.6 207.5 397.0 C208.5 394.4 209.6 392.1 210.6 390.5 C211.6 388.9 212.6 387.6 213.7 387.6 C214.8 387.6 216.0 389.2 216.9 390.5 C217.8 391.8 218.3 394.4 219.0 395.5 C219.7 396.6 220.0 397.5 221.0 397.2 C222.0 396.9 223.6 395.7 224.8 393.7 C226.0 391.7 226.9 387.9 228.0 385.0 C229.1 382.1 229.9 379.1 231.1 376.3 C232.3 373.5 233.7 370.4 235.0 368.0 C236.3 365.6 237.9 363.5 239.0 362.1 C240.1 360.7 240.9 359.9 241.6 359.8 C242.3 359.7 242.6 360.3 243.0 361.5 C243.4 362.7 243.5 364.2 243.9 366.9 C244.3 369.6 244.5 375.0 245.3 377.9 C246.2 380.8 247.4 381.9 249.0 384.0 C250.6 386.1 253.3 388.3 254.8 390.5 C256.3 392.7 256.9 394.4 258.0 397.0 C259.1 399.6 259.8 403.1 261.1 406.3 C262.4 409.5 264.4 412.8 266.0 416.0 C267.6 419.2 269.4 422.1 270.6 425.3 C271.8 428.5 272.6 431.3 273.4 435.0 C274.2 438.7 274.9 442.9 275.6 447.4 C276.3 451.9 277.1 458.7 277.6 462.0 C278.1 465.3 278.3 467.2 278.6 467.2 C278.9 467.2 279.3 465.5 279.6 462.0 C279.9 458.5 280.1 454.8 280.6 446.0 C281.1 437.2 281.8 417.3 282.4 409.5 C283.0 401.7 283.3 401.9 284.0 399.0 C284.7 396.1 285.6 393.9 286.4 392.1 C287.2 390.3 288.1 389.4 289.0 388.2 C289.9 387.0 290.9 386.1 291.6 385.0 C292.3 383.9 292.8 382.7 293.2 381.6 C293.6 380.5 293.8 379.1 293.9 378.6" stroke="#e6e4f3" stroke-width="1.25" stroke-linejoin="round" stroke-linecap="round" fill="none"/>
<path d="M338.3 359.5 C339.6 360.6 343.2 363.6 346.0 366.0 C348.8 368.4 352.3 371.3 355.0 373.6 C357.7 375.9 360.2 378.2 362.0 379.6 C363.8 381.0 363.8 381.2 366.0 381.8 C368.2 382.4 371.4 382.6 375.0 383.5 C378.6 384.4 384.7 385.8 387.7 387.0 C390.7 388.2 391.4 389.1 393.0 390.5 C394.6 391.9 395.4 393.8 397.0 395.5 C398.6 397.2 401.4 399.9 402.9 400.6 C404.4 401.3 404.6 400.5 406.0 399.6 C407.4 398.7 409.5 397.0 411.0 395.4 C412.5 393.8 414.0 391.6 415.0 390.0 C416.0 388.4 416.3 386.9 417.0 386.0 C417.7 385.1 417.6 384.4 419.4 384.3 C421.2 384.2 424.6 384.8 428.0 385.2 C431.4 385.6 435.4 386.4 440.0 386.8 C444.6 387.2 451.9 387.8 455.4 387.6 C458.9 387.4 459.2 386.6 461.0 385.6 C462.8 384.6 464.4 382.8 466.0 381.6 C467.6 380.4 469.2 378.9 470.6 378.6 C472.0 378.3 472.8 378.7 474.5 380.0 C476.2 381.3 479.3 384.1 480.8 386.2 C482.3 388.3 482.6 390.6 483.6 392.5 C484.6 394.4 485.8 397.2 486.7 397.7 C487.6 398.1 487.9 397.1 489.0 395.2 C490.1 393.2 491.7 388.9 493.0 386.0 C494.3 383.1 495.9 379.8 497.0 378.0 C498.1 376.2 498.7 375.2 499.6 375.2 C500.5 375.2 501.4 376.8 502.5 378.0 C503.6 379.2 505.2 381.3 506.5 382.4 C507.8 383.5 509.4 384.3 510.5 384.8 C511.6 385.3 512.4 385.4 513.4 385.3 C514.4 385.2 515.8 384.4 516.3 384.2" stroke="#e6e4f3" stroke-width="1.25" stroke-linejoin="round" stroke-linecap="round" fill="none"/>
<path d="M558.0 449.0 C558.7 450.3 560.3 454.2 562.0 457.0 C563.7 459.8 565.8 463.2 568.0 466.0 C570.2 468.8 572.7 471.4 575.0 473.6 C577.3 475.8 580.4 477.4 582.0 479.0 C583.6 480.6 583.8 481.8 584.6 483.0 C585.4 484.2 585.9 485.4 587.0 486.0 C588.1 486.6 589.5 486.8 591.0 486.6 C592.5 486.4 594.4 485.7 596.0 485.0 C597.6 484.3 599.3 483.3 600.4 482.6 C601.5 481.9 602.3 482.7 602.8 480.6 C603.3 478.5 603.4 475.1 603.6 470.0 C603.8 464.9 603.9 460.0 604.2 450.0 C604.5 440.0 605.1 419.5 605.6 410.0 C606.1 400.5 606.4 397.4 607.0 393.0 C607.6 388.6 608.6 386.2 609.4 383.6 C610.2 381.0 611.1 379.0 612.0 377.6 C612.9 376.2 613.8 375.6 614.6 375.4 C615.4 375.2 616.1 375.8 617.0 376.4 C617.9 377.0 617.8 377.1 620.0 379.0 C622.2 380.9 626.7 385.1 630.0 388.0 C633.3 390.9 637.3 394.6 640.0 396.6 C642.7 398.6 644.0 399.4 646.0 400.2 C648.0 401.0 650.3 401.5 652.0 401.6 C653.7 401.7 654.7 401.6 656.0 401.0 C657.3 400.4 658.5 399.7 660.0 398.0 C661.5 396.3 663.5 393.2 665.0 391.0 C666.5 388.8 667.9 386.3 669.0 385.0 C670.1 383.7 670.8 383.5 671.6 383.4 C672.4 383.3 673.3 383.8 674.0 384.2 C674.7 384.6 674.7 384.7 676.0 386.0 C677.3 387.3 680.0 389.9 682.0 392.0 C684.0 394.1 686.3 396.6 688.0 398.6 C689.7 400.6 690.7 402.3 692.0 404.0 C693.3 405.7 694.8 407.8 696.0 409.0 C697.2 410.2 698.0 410.6 699.0 411.0 C700.0 411.4 700.7 411.6 702.0 411.4 C703.3 411.2 705.3 410.5 707.0 409.6 C708.7 408.7 710.3 407.8 712.0 406.0 C713.7 404.2 715.3 401.4 717.0 399.0 C718.7 396.6 720.7 393.4 722.0 391.6 C723.3 389.8 724.0 388.5 725.0 388.0 C726.0 387.5 726.7 388.1 728.0 388.6 C729.3 389.1 730.8 389.9 733.0 390.8 C735.2 391.7 739.7 393.5 741.0 394.0" stroke="#e6e4f3" stroke-width="1.25" stroke-linejoin="round" stroke-linecap="round" fill="none"/>
<path d="M809.0 234.4 C810.0 235.1 812.8 237.0 815.0 238.4 C817.2 239.8 818.7 240.9 822.0 243.0 C825.3 245.1 831.0 248.6 834.8 250.8 C838.6 253.0 841.6 254.5 845.0 256.0 C848.4 257.5 852.3 259.1 855.0 260.0 C857.7 260.9 859.3 261.1 861.0 261.4 C862.7 261.7 864.2 262.2 865.4 261.8 C866.6 261.4 867.1 260.2 868.0 259.0 C868.9 257.8 869.8 256.2 871.0 254.5 C872.2 252.8 873.9 250.7 875.4 249.0 C876.9 247.3 878.3 245.7 880.0 244.4 C881.7 243.2 883.8 242.2 885.5 241.5 C887.2 240.8 888.6 240.6 890.0 240.4 C891.4 240.2 892.3 240.3 894.0 240.6 C895.7 240.9 898.2 241.8 900.0 242.4 C901.8 243.0 903.5 243.8 905.0 244.4 C906.5 245.0 907.8 245.7 909.0 245.8 C910.2 245.9 910.7 245.4 912.0 244.8 C913.3 244.2 915.2 243.1 917.0 242.4 C918.8 241.7 921.1 241.0 922.8 240.6 C924.5 240.2 925.6 239.9 927.0 239.8 C928.4 239.7 930.0 239.6 931.0 239.8 C932.0 240.0 932.5 240.3 933.0 240.8 C933.5 241.3 933.8 242.3 934.0 242.6" stroke="#e6e4f3" stroke-width="1.25" stroke-linejoin="round" stroke-linecap="round" fill="none"/>
<path d="M934.4 501.4 C934.8 501.8 936.1 503.3 937.0 504.0 C937.9 504.7 938.4 505.3 939.6 505.4 C940.8 505.5 941.9 505.0 944.0 504.4 C946.1 503.8 949.9 502.4 952.1 501.8 C954.3 501.2 955.4 501.2 957.0 501.0 C958.6 500.8 959.8 501.1 961.6 500.6 C963.4 500.1 965.6 499.1 968.0 498.0 C970.4 496.9 974.0 495.4 975.8 494.3 C977.6 493.2 977.8 492.5 978.6 491.4 C979.4 490.3 980.0 489.1 980.6 487.9 C981.2 486.7 981.7 485.3 982.2 484.0 C982.7 482.7 983.1 481.4 983.7 480.0 C984.3 478.6 985.2 476.9 986.0 475.5 C986.8 474.1 988.1 472.1 988.5 471.4" stroke="#e6e4f3" stroke-width="1.25" stroke-linejoin="round" stroke-linecap="round" fill="none"/>
</g>
<rect x="417" y="347.4" width="13" height="12.6" rx="2.2" fill="#d3d2d8"/>
<rect x="339.9" y="407.6" width="12" height="11.8" rx="2" fill="#171522" stroke="#bebcc6" stroke-width="1.3"/>
<rect x="503.6" y="407.6" width="12" height="11.8" rx="2" fill="#171522" stroke="#bebcc6" stroke-width="1.3"/>
<rect x="1015.2" y="169" width="2.8" height="82" rx="1.4" fill="#85838f"/>
<circle cx="1016.6" cy="210.6" r="4.8" fill="#fff"/>
<rect x="1012.5" y="501.5" width="8.4" height="127" rx="4.2" fill="#2b2939"/>
<rect x="1015.6" y="530.5" width="2.2" height="90" rx="1.1" fill="#7b68ee"/>
<rect x="638.3" y="755.3" width="174.5" height="8.4" rx="4.2" fill="#2f2d3d"/>
<rect x="936" y="758.2" width="81" height="2.8" rx="1.4" fill="#85838f"/>
<circle cx="977.3" cy="759.6" r="4.9" fill="#fff"/>
<g stroke="#a9a7b1" stroke-width="1.5" stroke-linecap="round" stroke-linejoin="round"><path d="M919.4 759.6H928"/><path d="M921.8 756.8L919 759.6L921.8 762.4M925.6 756.8L928.4 759.6L925.6 762.4"/></g>
<g stroke="#9a98a3" stroke-width="1.1" stroke-linecap="round" stroke-linejoin="round"><path d="M988.2 159.5L989.8 152.6L990.6 161.4L992.2 153.4L993 160.6L994.6 154.8L995.4 159.6L996.8 156.2L997.6 158.6"/><path d="M1000 153.2V156.6M998.6 154.6L1000 153.2L1001.4 154.6M1000 161.6V158.4M998.6 160.2L1000 161.6L1001.4 160.2" stroke-width="0.9"/></g>
<g stroke="#b5b3bd" stroke-width="1.25" stroke-linecap="round" stroke-linejoin="round"><path d="M1016.8 152.4V161.2M1013.6 155.4L1016.8 152.2L1020 155.4M1013.6 158.2L1016.8 161.4L1020 158.2"/></g>
<rect x="448" y="694.6" width="208.4" height="34.2" rx="8" fill="#191724" stroke="#2f2d3c" stroke-width="1"/>
<rect x="451.8" y="698.4" width="26.2" height="26.2" rx="4" fill="#7a67f0"/>
<g stroke-linecap="round" stroke-linejoin="round">
<path d="M458.2 704.6 L471.8 709.6 L466.2 712.2 L463.8 717.8 Z" stroke="#fff" stroke-width="1.75" fill="none"/><path d="M466.6 712.6 L470.6 716.8" stroke="#fff" stroke-width="1.75"/>
<path d="M482.8 710.2 L485.6 712.9 L488.4 710.2" stroke="#8d8b96" stroke-width="1.15"/>
<path d="M621.2 710.2 L624 712.9 L626.8 710.2" stroke="#8d8b96" stroke-width="1.15"/>
<g stroke="#b5b3bd" stroke-width="1.5"><path d="M507 705 C505.6 708.6 504.8 712 506 713.7 C507.8 715.4 510.8 712.2 512.9 706.2"/><path d="M505.9 713.9 L504.6 716.6"/><circle cx="504.3" cy="717.4" r="1" fill="#b5b3bd"/></g>
<g stroke="#b5b3bd" stroke-width="1.4"><circle cx="534.6" cy="706.6" r="2.4"/><circle cx="534.6" cy="716" r="2.4"/><path d="M536.5 708.2 L539.6 711.2M541.4 713.1 L545 716.8M536.5 714.4 L545 705.4"/></g>
<g stroke="#b5b3bd" stroke-width="1.2"><path d="M563 714L564.4 705.4L565.4 717.6L566.8 704.8L567.8 716.8L569.2 706.2L570.2 716L571.6 707.6L572.6 714.6L573.6 709.2"/><path d="M574.6 711.4H577.6M576.1 709.9V712.9" stroke-width="1"/></g>
<path d="M586.8 698.6V724.6M634.4 698.6V724.6" stroke="#2c2a39" stroke-width="1.1"/>
<g stroke="#b5b3bd" stroke-width="1.5"><circle cx="603" cy="710.2" r="4.8"/><path d="M606.6 713.8L610.6 717.8"/></g>
<circle cx="643.8" cy="707.0" r="1.2" fill="#b5b3bd" stroke="none"/>
<circle cx="643.8" cy="711.5" r="1.2" fill="#b5b3bd" stroke="none"/>
<circle cx="643.8" cy="716.0" r="1.2" fill="#b5b3bd" stroke="none"/>
<circle cx="648.0" cy="707.0" r="1.2" fill="#b5b3bd" stroke="none"/>
<circle cx="648.0" cy="711.5" r="1.2" fill="#b5b3bd" stroke="none"/>
<circle cx="648.0" cy="716.0" r="1.2" fill="#b5b3bd" stroke="none"/>
</g>
<g stroke="#8d8b96" stroke-width="1.55" stroke-linecap="round" stroke-linejoin="round"><rect x="65.9" y="104.4" width="12.8" height="7" rx="1.4"/><path d="M76 104.2V101.2 A3.6 3.6 0 0 0 68.9 100.3"/></g>
<g stroke="#8d8b96" stroke-width="1.55" stroke-linecap="round" stroke-linejoin="round"><path d="M66.2 131V130.6 A3.2 3.2 0 0 1 69.4 127.4H78.4M75.6 124.5L78.6 127.4L75.6 130.3"/><path d="M78.6 131.6V132 A3.2 3.2 0 0 1 75.4 135.2H66.4M69.2 132.3L66.2 135.2L69.2 138.1"/></g>
</svg>
<div class="abs" style="left:382.6px;top:316.6px;width:81.2px;height:26px;border-radius:5px;background:#fff"></div>
<div class="t" style="left:391.6px;top:322.6px;font-size:13.4px;font-weight:bold;color:#1c1a26;letter-spacing:0.2px">E4</div>
<div class="t" style="left:414.2px;top:322.6px;font-size:13.4px;color:#8e8d94;letter-spacing:0.75px">(-7 ct)</div>
<div class="t m" style="left:63.2px;top:158.8px;font-size:15px;width:12px;text-align:center">A</div>
<div class="t" style="left:74.9px;top:164.6px;font-size:10.2px;font-weight:bold">4</div>
<div class="t m" style="left:60px;top:204.6px;font-size:15px;width:14px;text-align:center">G</div>
<div class="t" style="left:78.6px;top:212.8px;font-size:9.2px;font-weight:bold">4</div>
<svg style="left:73.9px;top:202.0px" width="6.5" height="10.8" viewBox="0 0 7 11" preserveAspectRatio="none" fill="none" stroke="#fff"><path d="M2.2 1.2V10.4M4.8 0.4V9.6" stroke-width="0.95"/><path d="M0.4 4.3L6.6 2.6M0.4 8.2L6.6 6.5" stroke-width="1.55"/></svg>
<div class="t m" style="left:63.2px;top:246.9px;font-size:15px;width:12px;text-align:center">G</div>
<div class="t" style="left:74.9px;top:252.6px;font-size:10.2px;font-weight:bold">4</div>
<div class="t m" style="left:60px;top:292.6px;font-size:15px;width:14px;text-align:center">F</div>
<div class="t" style="left:78.6px;top:300.9px;font-size:9.2px;font-weight:bold">4</div>
<svg style="left:73.9px;top:290.1px" width="6.5" height="10.8" viewBox="0 0 7 11" preserveAspectRatio="none" fill="none" stroke="#fff"><path d="M2.2 1.2V10.4M4.8 0.4V9.6" stroke-width="0.95"/><path d="M0.4 4.3L6.6 2.6M0.4 8.2L6.6 6.5" stroke-width="1.55"/></svg>
<div class="t m" style="left:63.2px;top:335.0px;font-size:15px;width:12px;text-align:center">F</div>
<div class="t" style="left:74.9px;top:340.7px;font-size:10.2px;font-weight:bold">4</div>
<div class="t m" style="left:63.2px;top:379.0px;font-size:15px;width:12px;text-align:center">E</div>
<div class="t" style="left:74.9px;top:384.7px;font-size:10.2px;font-weight:bold">4</div>
<div class="t m" style="left:60px;top:424.7px;font-size:15px;width:14px;text-align:center">D</div>
<div class="t" style="left:78.6px;top:433.0px;font-size:9.2px;font-weight:bold">4</div>
<svg style="left:73.9px;top:422.2px" width="6.5" height="10.8" viewBox="0 0 7 11" preserveAspectRatio="none" fill="none" stroke="#fff"><path d="M2.2 1.2V10.4M4.8 0.4V9.6" stroke-width="0.95"/><path d="M0.4 4.3L6.6 2.6M0.4 8.2L6.6 6.5" stroke-width="1.55"/></svg>
<div class="t m" style="left:63.2px;top:467.0px;font-size:15px;width:12px;text-align:center">D</div>
<div class="t" style="left:74.9px;top:472.8px;font-size:10.2px;font-weight:bold">4</div>
<div class="t m" style="left:60px;top:512.8px;font-size:15px;width:14px;text-align:center">C</div>
<div class="t" style="left:78.6px;top:521.0px;font-size:9.2px;font-weight:bold">4</div>
<svg style="left:73.9px;top:510.2px" width="6.5" height="10.8" viewBox="0 0 7 11" preserveAspectRatio="none" fill="none" stroke="#fff"><path d="M2.2 1.2V10.4M4.8 0.4V9.6" stroke-width="0.95"/><path d="M0.4 4.3L6.6 2.6M0.4 8.2L6.6 6.5" stroke-width="1.55"/></svg>
<div class="t m" style="left:63.2px;top:555.1px;font-size:15px;width:12px;text-align:center">C</div>
<div class="t" style="left:74.9px;top:560.9px;font-size:10.2px;font-weight:bold">4</div>
<div class="t m" style="left:63.2px;top:599.1px;font-size:15px;width:12px;text-align:center">B</div>
<div class="t" style="left:74.9px;top:604.9px;font-size:10.2px;font-weight:bold">3</div>
<div class="t m" style="left:60px;top:644.9px;font-size:15px;width:14px;text-align:center">A</div>
<div class="t" style="left:78.6px;top:653.1px;font-size:9.2px;font-weight:bold">3</div>
<svg style="left:73.9px;top:642.3px" width="6.5" height="10.8" viewBox="0 0 7 11" preserveAspectRatio="none" fill="none" stroke="#fff"><path d="M2.2 1.2V10.4M4.8 0.4V9.6" stroke-width="0.95"/><path d="M0.4 4.3L6.6 2.6M0.4 8.2L6.6 6.5" stroke-width="1.55"/></svg>
<div class="t m" style="left:63.2px;top:687.2px;font-size:15px;width:12px;text-align:center">A</div>
<div class="t" style="left:74.9px;top:692.9px;font-size:10.2px;font-weight:bold">3</div>
<div class="t m" style="left:60px;top:732.9px;font-size:15px;width:14px;text-align:center">G</div>
<div class="t" style="left:78.6px;top:741.2px;font-size:9.2px;font-weight:bold">3</div>
<svg style="left:73.9px;top:730.4px" width="6.5" height="10.8" viewBox="0 0 7 11" preserveAspectRatio="none" fill="none" stroke="#fff"><path d="M2.2 1.2V10.4M4.8 0.4V9.6" stroke-width="0.95"/><path d="M0.4 4.3L6.6 2.6M0.4 8.2L6.6 6.5" stroke-width="1.55"/></svg>
<div class="panel" style="left:1035px;top:92px;width:218px;height:745.5px"></div>
<div class="t" style="left:1052.6px;top:111.2px;font-size:13.6px;font-weight:bold;letter-spacing:0.52px">TRACKS</div>
<div class="abs" style="left:1221.5px;top:116.9px;width:11.6px;height:1.7px;background:#83818d;border-radius:1px"></div>
<div class="abs" style="left:1052.6px;top:140.3px;width:183.5px;height:29.6px;border-radius:3.5px;background:#2f2d3f;border:1.5px solid #6a5bcf"></div>
<div class="t m" style="left:1063.4px;top:148px;font-size:13.6px;letter-spacing:0.4px">Lead vocal</div>
<div class="abs" style="left:1211.7px;top:150.8px;width:8.6px;height:8.6px;border-radius:50%;background:#9593a0"></div>
<div class="abs" style="left:1052.6px;top:187px;width:183.5px;height:1px;background:#3b3949"></div>
<div class="t" style="left:1052.6px;top:207.2px;font-size:13.6px;font-weight:bold;letter-spacing:0.52px">SCALE</div>
<div class="abs" style="left:1221.5px;top:212.9px;width:11.6px;height:1.7px;background:#83818d;border-radius:1px"></div>
<div class="abs" style="left:1052.6px;top:235.8px;width:183.5px;height:26.2px;border-radius:3px;background:#2f2d3f"></div>
<div class="t m" style="left:1061.2px;top:241.8px;font-size:13.6px;letter-spacing:0.45px">F Harmonic Minor</div>
<div class="t m" style="left:1052.6px;top:277px;font-size:13.6px;letter-spacing:0.44px">Snap to scale notes</div>
<div class="abs" style="left:1209.9px;top:277.6px;width:26px;height:12.8px;border-radius:6.4px;background:#2f2d3f"></div>
<div class="abs" style="left:1211.7px;top:279.5px;width:9px;height:9px;border-radius:50%;background:#fff"></div>
<div class="abs" style="left:1052.6px;top:309.2px;width:183.5px;height:1px;background:#3b3949"></div>
<div class="t" style="left:1052.6px;top:329.2px;font-size:13.6px;font-weight:bold;letter-spacing:0.52px">NOTE SETTINGS</div>
<div class="abs" style="left:1221.5px;top:334.9px;width:11.6px;height:1.7px;background:#83818d;border-radius:1px"></div>
<div class="t m" style="left:1052.6px;top:359.6px;font-size:13.9px;letter-spacing:0.55px;color:#85838f">Drift</div>
<div class="t m" style="left:1148.5px;top:359.6px;font-size:13.9px;letter-spacing:0.55px;color:#85838f">Correction</div>
<div class="abs" style="left:1052.6px;top:379.8px;width:87.3px;height:28px;border-radius:3px;background:#2f2d3f"></div>
<div class="abs" style="left:1148.5px;top:379.8px;width:87.5px;height:28px;border-radius:3px;background:#2f2d3f"></div>
<div class="t" style="-webkit-text-stroke:0.12px #fff;left:1061.4px;top:387.2px;font-size:13.6px;letter-spacing:0.7px">0.00</div>
<div class="t" style="left:1123.4px;top:388px;font-size:12px;color:#9593a0">%</div>
<div class="t" style="-webkit-text-stroke:0.12px #fff;left:1157.4px;top:387.2px;font-size:13.6px">0</div>
<div class="t" style="left:1215px;top:389.4px;font-size:9.6px;font-weight:bold;letter-spacing:0.6px;color:#9593a0">CT</div>
<div class="abs" style="left:1052.3px;top:794px;width:26.5px;height:26.7px;border-radius:3px;background:#2f2d3f"></div>
<svg style="left:0;top:0" width="1300" height="886" viewBox="0 0 1300 886" fill="none" stroke-linecap="round" stroke-linejoin="round">
<path d="M1212.2 245.8 L1218.2 251.6 L1224.2 245.8" stroke="#a9a7b3" stroke-width="1.3"/>
<path d="M1062.8 801.6 L1068.8 807.4 L1062.8 813.2" stroke="#fff" stroke-width="1.6"/>
</svg>
<div class="panel" style="left:50px;top:777.4px;width:975px;height:60.2px">
<div class="abs" style="left:43px;top:0;width:1.1px;height:61px;background:#3b3949"></div>
<div class="abs" style="left:0;top:29.2px;width:43px;height:1.2px;background:#3b3949"></div>
<div class="abs" style="left:55.4px;top:1.5px;width:930px;height:57.3px;border:1px solid #3b3949;border-radius:5px"></div>
<div class="abs" style="left:92.8px;top:1.5px;width:473.6px;height:57.4px;border:1.6px solid #7464e6;border-radius:5px;background:#2e2752"></div>
</div>
<svg style="left:0;top:0" width="1300" height="886" viewBox="0 0 1300 886" fill="none">
<defs><clipPath id="ovsel"><rect x="143.5" y="779.5" width="472" height="56"/></clipPath><clipPath id="ovall"><rect x="106" y="779.5" width="919" height="56"/></clipPath></defs>
<g clip-path="url(#ovall)"><path d="M116.0 807.0 L116.7 807.0 L117.4 807.0 L118.1 807.0 L118.8 807.0 L119.5 807.0 L120.2 807.0 L120.9 807.0 L121.6 807.0 L122.3 807.0 L123.0 807.0 L123.7 807.0 L124.4 807.0 L125.1 807.0 L125.8 807.0 L126.5 807.0 L127.2 807.0 L127.9 807.0 L128.6 807.0 L129.3 807.0 L130.0 807.0 L130.7 807.0 L131.4 807.0 L132.1 807.0 L132.8 807.0 L133.5 807.0 L134.2 807.0 L134.9 807.0 L135.6 807.0 L136.3 807.0 L137.0 807.0 L137.7 807.0 L138.4 807.0 L139.1 807.0 L139.8 807.0 L140.5 807.0 L141.2 807.0 L141.9 807.0 L142.6 807.0 L142.6 807.8 L141.9 807.8 L141.2 807.8 L140.5 807.8 L139.8 807.8 L139.1 807.8 L138.4 807.8 L137.7 807.8 L137.0 807.8 L136.3 807.8 L135.6 807.8 L134.9 807.8 L134.2 807.8 L133.5 807.8 L132.8 807.8 L132.1 807.8 L131.4 807.8 L130.7 807.8 L130.0 807.8 L129.3 807.8 L128.6 807.8 L127.9 807.8 L127.2 807.8 L126.5 807.8 L125.8 807.8 L125.1 807.8 L124.4 807.8 L123.7 807.8 L123.0 807.8 L122.3 807.8 L121.6 807.8 L120.9 807.8 L120.2 807.8 L119.5 807.8 L118.8 807.8 L118.1 807.8 L117.4 807.8 L116.7 807.8 L116.0 807.8 Z M145.5 806.9 L146.2 804.9 L146.9 803.1 L147.6 801.8 L148.3 801.4 L149.0 801.6 L149.7 800.9 L150.4 801.1 L151.1 801.1 L151.8 801.4 L152.5 801.6 L153.2 801.8 L153.9 802.4 L154.6 802.6 L155.3 802.9 L156.0 803.4 L156.7 803.9 L157.4 804.1 L158.1 804.5 L158.8 805.2 L159.5 805.7 L160.2 806.4 L160.2 808.5 L159.5 809.1 L158.8 809.6 L158.1 810.2 L157.4 810.7 L156.7 811.0 L156.0 811.4 L155.3 811.7 L154.6 812.1 L153.9 812.5 L153.2 812.8 L152.5 813.2 L151.8 813.3 L151.1 813.7 L150.4 814.0 L149.7 813.8 L149.0 813.4 L148.3 813.1 L147.6 812.8 L146.9 812.0 L146.2 809.9 L145.5 807.9 Z M160.6 806.9 L161.3 806.9 L162.0 806.8 L162.7 806.8 L163.4 806.8 L164.1 806.3 L164.8 803.7 L165.5 801.9 L166.2 802.0 L166.9 801.1 L167.6 800.9 L168.3 800.9 L169.0 801.2 L169.7 801.3 L170.4 801.5 L171.1 801.7 L171.8 801.5 L172.5 801.3 L173.2 801.0 L173.9 800.6 L174.6 801.3 L175.3 802.3 L176.0 803.1 L176.7 802.5 L177.4 802.2 L178.1 801.6 L178.8 801.4 L179.5 801.4 L180.2 801.0 L180.9 800.6 L181.6 800.7 L182.3 801.2 L183.0 801.6 L183.7 801.8 L184.4 802.4 L185.1 803.0 L185.8 803.7 L186.5 805.0 L187.2 806.2 L187.9 806.6 L188.6 806.8 L188.6 808.0 L187.9 808.2 L187.2 808.6 L186.5 809.8 L185.8 811.0 L185.1 811.6 L184.4 812.8 L183.7 813.0 L183.0 813.5 L182.3 813.9 L181.6 813.8 L180.9 814.2 L180.2 813.8 L179.5 813.3 L178.8 813.5 L178.1 813.1 L177.4 812.8 L176.7 812.3 L176.0 811.8 L175.3 812.4 L174.6 813.6 L173.9 813.9 L173.2 813.9 L172.5 814.1 L171.8 813.8 L171.1 813.2 L170.4 813.5 L169.7 813.5 L169.0 813.8 L168.3 813.7 L167.6 813.7 L166.9 813.6 L166.2 812.9 L165.5 812.8 L164.8 811.0 L164.1 808.4 L163.4 808.0 L162.7 808.0 L162.0 807.9 L161.3 807.9 L160.6 807.9 Z M189.0 806.9 L189.7 806.3 L190.4 805.7 L191.1 806.2 L191.8 806.6 L192.5 806.8 L193.2 806.7 L193.9 806.7 L194.6 804.0 L195.3 801.6 L196.0 801.2 L196.7 800.8 L197.4 801.2 L198.1 800.8 L198.8 801.2 L199.5 801.3 L200.2 801.5 L200.9 801.2 L201.6 801.6 L202.3 801.4 L203.0 801.5 L203.7 801.0 L204.4 801.0 L205.1 800.6 L205.8 800.3 L206.5 799.8 L207.2 800.2 L207.9 799.8 L208.6 799.4 L209.3 798.9 L210.0 798.9 L210.7 799.0 L211.4 798.7 L212.1 799.3 L212.8 798.9 L213.5 799.5 L214.2 799.9 L214.9 799.8 L215.6 800.7 L216.3 800.9 L217.0 800.9 L217.7 801.2 L218.4 801.8 L219.1 802.1 L219.8 802.2 L220.5 802.8 L221.2 803.1 L221.9 803.3 L222.6 803.9 L223.3 803.9 L224.0 804.4 L224.7 804.6 L225.4 804.9 L226.1 805.1 L226.8 805.5 L227.5 805.7 L228.2 806.0 L228.9 806.2 L229.6 806.4 L230.3 806.7 L231.0 806.9 L231.0 807.9 L230.3 808.1 L229.6 808.4 L228.9 808.6 L228.2 808.8 L227.5 809.0 L226.8 809.4 L226.1 809.7 L225.4 809.8 L224.7 810.1 L224.0 810.6 L223.3 810.6 L222.6 810.9 L221.9 811.6 L221.2 811.6 L220.5 811.8 L219.8 812.1 L219.1 812.7 L218.4 813.1 L217.7 813.1 L217.0 813.8 L216.3 814.1 L215.6 814.5 L214.9 815.0 L214.2 814.8 L213.5 815.1 L212.8 815.9 L212.1 816.0 L211.4 816.1 L210.7 815.9 L210.0 815.5 L209.3 815.6 L208.6 815.4 L207.9 815.4 L207.2 814.8 L206.5 814.8 L205.8 814.2 L205.1 813.9 L204.4 814.2 L203.7 813.3 L203.0 813.4 L202.3 813.4 L201.6 813.2 L200.9 813.5 L200.2 813.6 L199.5 813.4 L198.8 813.7 L198.1 814.3 L197.4 813.7 L196.7 813.9 L196.0 813.4 L195.3 813.6 L194.6 810.8 L193.9 808.2 L193.2 808.1 L192.5 808.0 L191.8 808.1 L191.1 808.7 L190.4 809.0 L189.7 808.4 L189.0 807.9 Z M231.0 807.0 L231.7 807.0 L232.4 807.0 L233.1 807.0 L233.8 807.0 L234.5 807.0 L235.2 807.0 L235.9 807.0 L236.6 807.0 L237.3 807.0 L238.0 807.0 L238.7 807.0 L239.4 807.0 L240.1 807.0 L240.8 807.0 L241.5 807.0 L242.2 807.0 L242.9 807.0 L243.6 807.0 L244.3 807.0 L245.0 807.0 L245.7 807.0 L246.4 807.0 L247.1 807.0 L247.8 807.0 L248.5 807.0 L249.2 807.0 L249.9 807.0 L250.6 807.0 L251.3 807.0 L252.0 807.0 L252.7 807.0 L253.4 807.0 L254.1 807.0 L254.1 807.8 L253.4 807.8 L252.7 807.8 L252.0 807.8 L251.3 807.8 L250.6 807.8 L249.9 807.8 L249.2 807.8 L248.5 807.8 L247.8 807.8 L247.1 807.8 L246.4 807.8 L245.7 807.8 L245.0 807.8 L244.3 807.8 L243.6 807.8 L242.9 807.8 L242.2 807.8 L241.5 807.8 L240.8 807.8 L240.1 807.8 L239.4 807.8 L238.7 807.8 L238.0 807.8 L237.3 807.8 L236.6 807.8 L235.9 807.8 L235.2 807.8 L234.5 807.8 L233.8 807.8 L233.1 807.8 L232.4 807.8 L231.7 807.8 L231.0 807.8 Z M254.6 806.9 L255.3 806.1 L256.0 805.3 L256.7 804.8 L257.4 804.6 L258.1 804.5 L258.8 804.5 L259.5 804.4 L260.2 804.6 L260.9 805.0 L261.6 805.2 L262.3 805.3 L263.0 804.9 L263.7 804.6 L264.4 804.3 L265.1 804.2 L265.8 804.2 L266.5 804.3 L267.2 804.4 L267.9 804.3 L268.6 804.4 L269.3 804.4 L270.0 804.1 L270.7 803.8 L271.4 803.6 L272.1 802.3 L272.8 800.3 L273.5 799.4 L274.2 799.3 L274.9 798.9 L275.6 798.9 L276.3 798.7 L277.0 798.9 L277.7 798.9 L278.4 799.2 L279.1 799.9 L279.8 800.1 L280.5 799.4 L281.2 799.2 L281.9 799.7 L282.6 799.4 L283.3 799.5 L284.0 799.5 L284.7 799.5 L285.4 799.3 L286.1 800.0 L286.8 799.7 L287.5 800.0 L288.2 800.1 L288.9 799.4 L289.6 799.4 L290.3 799.1 L291.0 798.5 L291.7 798.4 L292.4 798.6 L293.1 799.2 L293.8 799.0 L294.5 799.8 L295.2 799.5 L295.9 799.9 L296.6 800.3 L297.3 801.2 L298.0 801.7 L298.7 802.2 L299.4 802.5 L300.1 804.1 L300.8 805.1 L301.5 805.1 L302.2 805.1 L302.9 805.0 L303.6 804.5 L304.3 804.0 L305.0 801.5 L305.7 798.0 L306.4 797.1 L307.1 797.3 L307.8 797.2 L308.5 797.8 L309.2 799.1 L309.9 799.6 L310.6 799.8 L311.3 799.3 L312.0 799.4 L312.7 799.9 L313.4 799.5 L314.1 799.5 L314.8 799.8 L315.5 800.1 L316.2 799.9 L316.9 800.2 L317.6 800.2 L318.3 799.7 L319.0 799.8 L319.7 799.5 L320.4 799.4 L321.1 799.4 L321.8 799.1 L322.5 798.9 L323.2 798.3 L323.9 798.5 L324.6 796.9 L325.3 797.6 L326.0 796.9 L326.7 797.6 L327.4 797.9 L328.1 799.3 L328.8 800.0 L329.5 801.0 L330.2 802.0 L330.9 803.2 L331.6 804.6 L332.3 805.4 L333.0 806.0 L333.7 806.0 L334.4 806.3 L335.1 806.3 L335.8 806.4 L336.5 806.1 L337.2 805.9 L337.9 799.9 L338.6 797.2 L339.3 798.4 L340.0 799.4 L340.7 799.9 L341.4 800.6 L342.1 801.6 L342.8 802.2 L343.5 802.6 L344.2 803.0 L344.9 803.6 L345.6 804.2 L346.3 804.7 L347.0 805.2 L347.7 805.3 L348.4 805.6 L349.1 805.9 L349.8 806.1 L350.5 806.1 L351.2 806.0 L351.9 806.1 L352.6 804.3 L353.3 802.5 L354.0 802.2 L354.7 801.5 L355.4 801.3 L356.1 801.3 L356.8 801.3 L357.5 801.1 L358.2 801.6 L358.9 801.2 L359.6 800.8 L360.3 800.4 L361.0 800.7 L361.7 800.4 L362.4 800.7 L363.1 800.9 L363.8 801.1 L364.5 801.2 L365.2 802.1 L365.9 802.0 L366.6 802.5 L367.3 803.2 L368.0 803.7 L368.7 803.4 L369.4 802.4 L370.1 802.2 L370.8 801.8 L371.5 801.6 L372.2 801.6 L372.9 801.8 L373.6 802.0 L374.3 801.6 L375.0 801.9 L375.7 802.3 L376.4 802.2 L377.1 802.1 L377.8 801.8 L378.5 801.6 L379.2 801.6 L379.9 801.8 L380.6 802.0 L381.3 802.1 L382.0 802.2 L382.7 801.9 L383.4 802.1 L384.1 802.4 L384.8 802.3 L385.5 802.7 L386.2 802.9 L386.9 803.0 L387.6 803.1 L388.3 803.1 L389.0 803.6 L389.7 803.6 L390.4 804.0 L391.1 804.0 L391.8 804.2 L392.5 804.4 L393.2 804.6 L393.9 804.9 L394.6 805.2 L395.3 805.3 L396.0 805.6 L396.7 805.7 L397.4 805.9 L398.1 806.1 L398.8 806.2 L399.5 806.4 L400.2 806.2 L400.9 806.1 L401.6 805.7 L402.3 804.6 L403.0 803.7 L403.7 803.7 L404.4 803.5 L405.1 803.5 L405.8 803.4 L406.5 803.2 L407.2 803.4 L407.9 803.5 L408.6 803.3 L409.3 803.6 L410.0 803.5 L410.7 803.6 L411.4 803.9 L412.1 804.2 L412.8 804.2 L413.5 804.4 L414.2 804.4 L414.9 804.5 L415.6 804.7 L416.3 804.9 L417.0 804.9 L417.7 804.7 L418.4 804.4 L419.1 804.1 L419.8 803.3 L420.5 802.6 L421.2 802.0 L421.9 801.8 L422.6 801.8 L423.3 801.5 L424.0 801.6 L424.7 801.6 L425.4 801.3 L426.1 801.4 L426.8 801.7 L427.5 801.9 L428.2 801.9 L428.9 801.4 L429.6 801.7 L430.3 801.6 L431.0 801.6 L431.7 801.4 L432.4 801.8 L433.1 801.4 L433.8 801.3 L434.5 801.8 L435.2 801.8 L435.9 802.2 L436.6 802.4 L437.3 802.8 L438.0 803.4 L438.7 804.1 L439.4 804.5 L440.1 805.2 L440.8 806.1 L441.5 806.4 L442.2 806.4 L442.9 806.5 L443.6 805.6 L444.3 804.5 L445.0 803.8 L445.7 803.4 L446.4 803.1 L447.1 802.6 L447.8 802.7 L448.5 802.6 L449.2 802.3 L449.9 802.0 L450.6 802.1 L451.3 802.7 L452.0 803.0 L452.7 803.1 L453.4 803.1 L454.1 802.7 L454.8 802.5 L455.5 802.2 L456.2 802.2 L456.9 802.1 L457.6 801.8 L458.3 801.8 L459.0 801.5 L459.7 801.7 L460.4 801.9 L461.1 802.1 L461.8 802.0 L462.5 801.6 L463.2 801.7 L463.9 802.1 L464.6 802.4 L465.3 802.1 L466.0 802.6 L466.7 802.4 L467.4 802.9 L468.1 803.3 L468.8 803.4 L469.5 803.7 L470.2 803.9 L470.9 804.3 L471.6 804.7 L472.3 805.3 L473.0 805.7 L473.7 806.3 L474.4 806.9 L474.4 808.0 L473.7 808.4 L473.0 809.0 L472.3 809.4 L471.6 809.9 L470.9 810.3 L470.2 810.7 L469.5 811.2 L468.8 811.5 L468.1 811.7 L467.4 812.1 L466.7 812.4 L466.0 812.1 L465.3 812.6 L464.6 812.7 L463.9 812.9 L463.2 812.9 L462.5 813.1 L461.8 813.2 L461.1 813.2 L460.4 813.1 L459.7 813.0 L459.0 813.4 L458.3 812.8 L457.6 813.1 L456.9 812.6 L456.2 812.9 L455.5 812.6 L454.8 812.6 L454.1 812.2 L453.4 811.7 L452.7 811.7 L452.0 812.0 L451.3 812.4 L450.6 812.7 L449.9 812.9 L449.2 812.4 L448.5 812.7 L447.8 812.3 L447.1 812.4 L446.4 811.9 L445.7 811.3 L445.0 810.8 L444.3 810.2 L443.6 809.2 L442.9 808.4 L442.2 808.4 L441.5 808.5 L440.8 808.7 L440.1 809.5 L439.4 810.4 L438.7 810.7 L438.0 811.6 L437.3 811.9 L436.6 812.6 L435.9 812.5 L435.2 813.1 L434.5 813.3 L433.8 813.4 L433.1 813.5 L432.4 813.4 L431.7 813.2 L431.0 812.9 L430.3 812.9 L429.6 812.8 L428.9 813.3 L428.2 813.1 L427.5 813.3 L426.8 813.2 L426.1 813.4 L425.4 813.5 L424.7 813.4 L424.0 813.2 L423.3 812.8 L422.6 813.2 L421.9 813.0 L421.2 812.8 L420.5 811.9 L419.8 811.4 L419.1 810.7 L418.4 810.5 L417.7 810.1 L417.0 809.8 L416.3 810.0 L415.6 810.0 L414.9 810.3 L414.2 810.4 L413.5 810.4 L412.8 810.6 L412.1 811.0 L411.4 810.8 L410.7 811.0 L410.0 811.2 L409.3 811.3 L408.6 811.4 L407.9 811.1 L407.2 811.5 L406.5 811.3 L405.8 811.4 L405.1 811.2 L404.4 811.2 L403.7 811.3 L403.0 810.9 L402.3 810.1 L401.6 809.2 L400.9 808.8 L400.2 808.6 L399.5 808.4 L398.8 808.5 L398.1 808.8 L397.4 808.8 L396.7 809.2 L396.0 809.4 L395.3 809.4 L394.6 809.7 L393.9 810.0 L393.2 810.0 L392.5 810.3 L391.8 810.4 L391.1 810.9 L390.4 810.9 L389.7 811.1 L389.0 811.4 L388.3 811.3 L387.6 811.5 L386.9 812.0 L386.2 812.2 L385.5 811.9 L384.8 812.4 L384.1 812.3 L383.4 812.5 L382.7 812.6 L382.0 812.6 L381.3 812.9 L380.6 812.9 L379.9 813.1 L379.2 813.1 L378.5 812.9 L377.8 813.0 L377.1 813.1 L376.4 813.0 L375.7 812.7 L375.0 813.1 L374.3 812.8 L373.6 812.9 L372.9 813.4 L372.2 813.1 L371.5 812.9 L370.8 813.2 L370.1 812.9 L369.4 812.2 L368.7 811.2 L368.0 811.1 L367.3 811.7 L366.6 812.4 L365.9 812.4 L365.2 812.9 L364.5 813.6 L363.8 813.8 L363.1 813.8 L362.4 813.9 L361.7 814.0 L361.0 814.3 L360.3 814.3 L359.6 813.6 L358.9 813.8 L358.2 813.5 L357.5 813.5 L356.8 813.6 L356.1 814.0 L355.4 813.7 L354.7 813.3 L354.0 812.7 L353.3 812.3 L352.6 810.6 L351.9 808.8 L351.2 808.7 L350.5 808.8 L349.8 808.7 L349.1 808.9 L348.4 809.2 L347.7 809.4 L347.0 809.7 L346.3 810.1 L345.6 810.8 L344.9 811.3 L344.2 811.8 L343.5 811.9 L342.8 812.9 L342.1 813.5 L341.4 814.1 L340.7 814.9 L340.0 815.4 L339.3 816.5 L338.6 817.5 L337.9 815.1 L337.2 808.8 L336.5 808.6 L335.8 808.4 L335.1 808.5 L334.4 808.5 L333.7 808.7 L333.0 808.8 L332.3 809.3 L331.6 810.4 L330.9 811.3 L330.2 812.8 L329.5 814.0 L328.8 814.6 L328.1 815.8 L327.4 817.4 L326.7 817.5 L326.0 817.5 L325.3 817.7 L324.6 817.2 L323.9 816.6 L323.2 816.6 L322.5 816.1 L321.8 815.6 L321.1 815.7 L320.4 815.0 L319.7 815.1 L319.0 815.1 L318.3 815.0 L317.6 814.5 L316.9 814.7 L316.2 814.5 L315.5 814.5 L314.8 814.6 L314.1 814.9 L313.4 814.8 L312.7 815.4 L312.0 815.4 L311.3 815.5 L310.6 815.0 L309.9 815.3 L309.2 815.8 L308.5 816.8 L307.8 817.9 L307.1 817.9 L306.4 817.4 L305.7 816.7 L305.0 813.8 L304.3 811.1 L303.6 810.2 L302.9 809.6 L302.2 809.8 L301.5 809.7 L300.8 809.8 L300.1 810.8 L299.4 812.4 L298.7 812.5 L298.0 813.3 L297.3 814.1 L296.6 814.0 L295.9 814.4 L295.2 815.2 L294.5 815.2 L293.8 816.0 L293.1 815.6 L292.4 816.5 L291.7 816.1 L291.0 816.8 L290.3 816.0 L289.6 815.8 L288.9 815.2 L288.2 814.7 L287.5 814.8 L286.8 815.1 L286.1 814.8 L285.4 814.8 L284.7 815.6 L284.0 815.7 L283.3 815.7 L282.6 815.2 L281.9 815.4 L281.2 815.0 L280.5 815.3 L279.8 814.8 L279.1 815.0 L278.4 815.5 L277.7 815.4 L277.0 816.0 L276.3 816.3 L275.6 815.8 L274.9 815.5 L274.2 815.2 L273.5 814.9 L272.8 814.8 L272.1 812.7 L271.4 811.1 L270.7 810.8 L270.0 810.7 L269.3 810.7 L268.6 810.6 L267.9 810.6 L267.2 810.5 L266.5 810.6 L265.8 810.7 L265.1 810.7 L264.4 810.3 L263.7 810.0 L263.0 809.8 L262.3 809.7 L261.6 809.5 L260.9 809.9 L260.2 810.1 L259.5 810.2 L258.8 810.4 L258.1 810.4 L257.4 810.2 L256.7 810.0 L256.0 809.4 L255.3 808.7 L254.6 807.9 Z M474.4 807.0 L475.1 807.0 L475.8 807.0 L476.5 807.0 L477.2 807.0 L477.9 807.0 L478.6 807.0 L479.3 807.0 L480.0 807.0 L480.7 807.0 L481.4 807.0 L482.1 807.0 L482.8 807.0 L483.5 807.0 L484.2 807.0 L484.9 807.0 L485.6 807.0 L486.3 807.0 L487.0 807.0 L487.7 807.0 L488.4 807.0 L489.1 807.0 L489.8 807.0 L490.5 807.0 L491.2 807.0 L491.9 807.0 L492.6 807.0 L493.3 807.0 L494.0 807.0 L494.7 807.0 L495.4 807.0 L496.1 807.0 L496.8 807.0 L497.5 807.0 L498.2 807.0 L498.9 807.0 L499.6 807.0 L500.3 807.0 L501.0 807.0 L501.7 807.0 L502.4 807.0 L503.1 807.0 L503.8 807.0 L504.5 807.0 L505.2 807.0 L505.9 807.0 L506.6 807.0 L507.3 807.0 L508.0 807.0 L508.7 807.0 L509.4 807.0 L510.1 807.0 L510.1 807.8 L509.4 807.8 L508.7 807.8 L508.0 807.8 L507.3 807.8 L506.6 807.8 L505.9 807.8 L505.2 807.8 L504.5 807.8 L503.8 807.8 L503.1 807.8 L502.4 807.8 L501.7 807.8 L501.0 807.8 L500.3 807.8 L499.6 807.8 L498.9 807.8 L498.2 807.8 L497.5 807.8 L496.8 807.8 L496.1 807.8 L495.4 807.8 L494.7 807.8 L494.0 807.8 L493.3 807.8 L492.6 807.8 L491.9 807.8 L491.2 807.8 L490.5 807.8 L489.8 807.8 L489.1 807.8 L488.4 807.8 L487.7 807.8 L487.0 807.8 L486.3 807.8 L485.6 807.8 L484.9 807.8 L484.2 807.8 L483.5 807.8 L482.8 807.8 L482.1 807.8 L481.4 807.8 L480.7 807.8 L480.0 807.8 L479.3 807.8 L478.6 807.8 L477.9 807.8 L477.2 807.8 L476.5 807.8 L475.8 807.8 L475.1 807.8 L474.4 807.8 Z M510.6 806.8 L511.3 799.7 L512.0 796.5 L512.7 795.3 L513.4 796.5 L514.1 798.3 L514.8 799.9 L515.5 802.1 L516.2 802.7 L516.9 803.1 L517.6 803.6 L518.3 803.5 L519.0 803.8 L519.7 803.8 L520.4 803.6 L521.1 803.6 L521.8 803.7 L522.5 803.6 L523.2 803.2 L523.9 803.1 L524.6 802.9 L525.3 802.8 L526.0 802.6 L526.7 802.8 L527.4 802.3 L528.1 802.0 L528.8 801.8 L529.5 801.0 L530.2 801.1 L530.9 800.8 L531.6 800.6 L532.3 800.2 L533.0 800.4 L533.7 800.2 L534.4 800.2 L535.1 800.2 L535.8 800.1 L536.5 800.5 L537.2 800.6 L537.9 801.3 L538.6 801.0 L539.3 801.9 L540.0 802.3 L540.7 803.2 L541.4 803.8 L542.1 804.5 L542.8 804.8 L543.5 804.6 L544.2 804.3 L544.9 802.1 L545.6 799.9 L546.3 799.0 L547.0 798.4 L547.7 798.6 L548.4 798.9 L549.1 799.8 L549.8 800.3 L550.5 800.9 L551.2 801.9 L551.9 803.0 L552.6 804.3 L553.3 804.5 L554.0 804.7 L554.7 804.9 L555.4 804.8 L556.1 804.7 L556.8 804.8 L557.5 804.6 L558.2 804.3 L558.9 803.9 L559.6 803.3 L560.3 800.8 L561.0 799.8 L561.7 799.6 L562.4 799.1 L563.1 799.1 L563.8 799.5 L564.5 799.8 L565.2 799.9 L565.9 800.6 L566.6 800.2 L567.3 800.3 L568.0 799.6 L568.7 799.7 L569.4 800.0 L570.1 800.1 L570.8 799.9 L571.5 800.3 L572.2 799.9 L572.9 799.6 L573.6 800.0 L574.3 799.6 L575.0 799.3 L575.7 799.8 L576.4 799.8 L577.1 800.2 L577.8 800.7 L578.5 801.8 L579.2 802.6 L579.9 802.8 L580.6 802.7 L581.3 802.0 L582.0 801.8 L582.7 801.5 L583.4 801.6 L584.1 801.4 L584.8 801.0 L585.5 801.4 L586.2 801.4 L586.9 801.6 L587.6 801.9 L588.3 802.0 L589.0 802.6 L589.7 802.8 L590.4 802.9 L591.1 802.3 L591.8 800.0 L592.5 797.2 L593.2 796.0 L593.9 794.2 L594.6 793.6 L595.3 791.5 L596.0 791.6 L596.7 793.5 L597.4 794.3 L598.1 796.4 L598.8 799.1 L599.5 800.8 L600.2 801.9 L600.9 802.8 L601.6 803.0 L602.3 802.9 L603.0 803.0 L603.7 803.2 L604.4 803.7 L605.1 803.6 L605.8 804.0 L606.5 804.0 L607.2 804.5 L607.9 804.9 L608.6 805.2 L609.3 803.8 L610.0 802.4 L610.7 804.3 L611.4 805.3 L612.1 805.9 L612.8 806.3 L613.5 806.6 L614.2 806.8 L614.2 808.0 L613.5 808.2 L612.8 808.5 L612.1 808.9 L611.4 809.5 L610.7 810.5 L610.0 811.9 L609.3 810.9 L608.6 809.8 L607.9 809.9 L607.2 810.3 L606.5 810.5 L605.8 810.9 L605.1 811.0 L604.4 811.2 L603.7 811.6 L603.0 811.4 L602.3 811.9 L601.6 811.8 L600.9 812.1 L600.2 813.1 L599.5 813.9 L598.8 815.4 L598.1 818.3 L597.4 820.0 L596.7 822.0 L596.0 823.2 L595.3 822.4 L594.6 821.4 L593.9 820.6 L593.2 819.3 L592.5 817.9 L591.8 814.6 L591.1 812.7 L590.4 812.3 L589.7 811.9 L589.0 812.4 L588.3 812.7 L587.6 813.1 L586.9 813.3 L586.2 813.7 L585.5 813.5 L584.8 813.7 L584.1 813.3 L583.4 813.6 L582.7 813.4 L582.0 813.2 L581.3 812.7 L580.6 811.9 L579.9 812.1 L579.2 812.2 L578.5 813.2 L577.8 814.4 L577.1 815.0 L576.4 814.7 L575.7 815.2 L575.0 815.0 L574.3 815.5 L573.6 815.0 L572.9 815.0 L572.2 814.9 L571.5 815.0 L570.8 814.6 L570.1 815.3 L569.4 814.8 L568.7 815.0 L568.0 814.7 L567.3 815.0 L566.6 814.6 L565.9 814.4 L565.2 815.0 L564.5 815.0 L563.8 815.1 L563.1 815.2 L562.4 815.3 L561.7 815.2 L561.0 815.2 L560.3 813.9 L559.6 811.6 L558.9 811.0 L558.2 810.4 L557.5 810.0 L556.8 810.1 L556.1 809.9 L555.4 809.8 L554.7 810.0 L554.0 810.2 L553.3 810.6 L552.6 810.5 L551.9 811.9 L551.2 812.9 L550.5 813.6 L549.8 814.3 L549.1 815.9 L548.4 816.1 L547.7 816.2 L547.0 815.9 L546.3 815.9 L545.6 815.0 L544.9 812.5 L544.2 810.5 L543.5 810.2 L542.8 810.1 L542.1 810.3 L541.4 810.9 L540.7 811.7 L540.0 812.5 L539.3 813.0 L538.6 813.3 L537.9 813.9 L537.2 814.1 L536.5 814.6 L535.8 814.2 L535.1 814.3 L534.4 814.4 L533.7 814.3 L533.0 814.0 L532.3 813.9 L531.6 814.4 L530.9 814.1 L530.2 814.1 L529.5 813.4 L528.8 813.6 L528.1 812.7 L527.4 812.2 L526.7 812.3 L526.0 812.1 L525.3 811.7 L524.6 811.5 L523.9 811.4 L523.2 811.7 L522.5 811.2 L521.8 811.4 L521.1 811.1 L520.4 810.9 L519.7 810.9 L519.0 811.1 L518.3 811.1 L517.6 811.0 L516.9 811.7 L516.2 812.0 L515.5 813.1 L514.8 814.3 L514.1 816.2 L513.4 817.5 L512.7 819.7 L512.0 818.4 L511.3 815.0 L510.6 808.0 Z M618.0 807.0 L618.7 807.0 L619.4 807.0 L620.1 807.0 L620.8 807.0 L621.5 806.9 L622.2 806.0 L622.9 804.7 L623.6 803.9 L624.3 803.6 L625.0 803.2 L625.7 802.9 L626.4 802.9 L627.1 802.7 L627.8 802.6 L628.5 802.3 L629.2 802.6 L629.9 802.9 L630.6 803.0 L631.3 803.4 L632.0 803.5 L632.7 804.1 L633.4 804.6 L634.1 805.3 L634.8 805.8 L635.5 806.0 L636.2 806.2 L636.9 805.8 L637.6 805.5 L638.3 804.9 L639.0 804.0 L639.7 803.3 L640.4 803.1 L641.1 803.0 L641.8 802.9 L642.5 802.9 L643.2 802.8 L643.9 802.7 L644.6 802.4 L645.3 802.3 L646.0 802.1 L646.7 802.5 L647.4 803.2 L648.1 803.5 L648.8 804.0 L649.5 804.5 L650.2 805.1 L650.9 805.6 L651.6 806.2 L652.3 806.4 L653.0 806.6 L653.7 806.5 L654.4 806.3 L655.1 802.4 L655.8 798.4 L656.5 796.0 L657.2 792.9 L657.9 792.0 L658.6 794.6 L659.3 796.4 L660.0 798.4 L660.7 800.3 L661.4 801.9 L662.1 803.1 L662.8 804.2 L663.5 804.8 L664.2 805.0 L664.9 805.4 L665.6 805.8 L666.3 806.0 L667.0 805.9 L667.7 805.7 L668.4 805.6 L669.1 805.5 L669.8 805.0 L670.5 804.9 L671.2 804.5 L671.9 804.3 L672.6 804.2 L673.3 804.3 L674.0 804.1 L674.7 804.2 L675.4 804.3 L676.1 804.4 L676.8 804.4 L677.5 804.7 L678.2 804.9 L678.9 805.0 L679.6 805.1 L680.3 805.3 L681.0 805.6 L681.7 805.9 L682.4 806.1 L683.1 806.3 L683.8 806.3 L684.5 806.2 L685.2 806.3 L685.9 806.0 L686.6 805.4 L687.3 804.0 L688.0 801.7 L688.7 800.6 L689.4 799.4 L690.1 798.6 L690.8 798.8 L691.5 798.3 L692.2 798.2 L692.9 798.8 L693.6 800.0 L694.3 800.1 L695.0 800.8 L695.7 801.3 L696.4 800.6 L697.1 800.2 L697.8 798.8 L698.5 798.7 L699.2 799.0 L699.9 798.6 L700.6 798.8 L701.3 799.1 L702.0 799.3 L702.7 799.4 L703.4 800.0 L704.1 800.4 L704.8 800.9 L705.5 800.6 L706.2 799.9 L706.9 798.7 L707.6 798.6 L708.3 798.6 L709.0 798.5 L709.7 798.9 L710.4 798.9 L711.1 799.4 L711.8 799.2 L712.5 798.3 L713.2 798.3 L713.9 798.1 L714.6 798.7 L715.3 798.4 L716.0 799.3 L716.7 800.8 L717.4 802.2 L718.1 803.8 L718.8 804.9 L719.5 805.7 L720.2 806.3 L720.2 808.5 L719.5 809.2 L718.8 809.8 L718.1 811.1 L717.4 812.6 L716.7 814.2 L716.0 815.4 L715.3 816.0 L714.6 816.1 L713.9 816.4 L713.2 816.3 L712.5 816.8 L711.8 815.7 L711.1 815.5 L710.4 815.5 L709.7 815.9 L709.0 815.9 L708.3 816.4 L707.6 816.3 L706.9 815.5 L706.2 815.1 L705.5 814.9 L704.8 814.2 L704.1 814.8 L703.4 814.9 L702.7 815.5 L702.0 815.5 L701.3 815.8 L700.6 815.9 L699.9 816.8 L699.2 816.0 L698.5 816.2 L697.8 815.5 L697.1 814.7 L696.4 813.9 L695.7 813.6 L695.0 813.9 L694.3 814.7 L693.6 815.0 L692.9 815.4 L692.2 816.6 L691.5 816.7 L690.8 816.5 L690.1 815.8 L689.4 815.7 L688.7 814.6 L688.0 813.7 L687.3 810.9 L686.6 809.5 L685.9 808.8 L685.2 808.6 L684.5 808.5 L683.8 808.6 L683.1 808.5 L682.4 808.8 L681.7 809.0 L681.0 809.2 L680.3 809.4 L679.6 809.6 L678.9 809.7 L678.2 809.9 L677.5 810.0 L676.8 810.1 L676.1 810.2 L675.4 810.3 L674.7 810.7 L674.0 810.7 L673.3 810.6 L672.6 810.4 L671.9 810.4 L671.2 810.3 L670.5 810.1 L669.8 809.8 L669.1 809.4 L668.4 809.1 L667.7 809.0 L667.0 809.0 L666.3 808.8 L665.6 808.9 L664.9 809.3 L664.2 809.6 L663.5 810.0 L662.8 810.5 L662.1 811.9 L661.4 813.1 L660.7 814.1 L660.0 816.0 L659.3 818.2 L658.6 821.0 L657.9 821.9 L657.2 821.3 L656.5 820.0 L655.8 817.0 L655.1 812.0 L654.4 808.5 L653.7 808.3 L653.0 808.1 L652.3 808.5 L651.6 808.7 L650.9 809.2 L650.2 809.8 L649.5 810.2 L648.8 811.1 L648.1 811.5 L647.4 811.8 L646.7 812.1 L646.0 812.5 L645.3 812.4 L644.6 812.6 L643.9 812.0 L643.2 812.4 L642.5 812.1 L641.8 812.1 L641.1 811.9 L640.4 811.8 L639.7 811.2 L639.0 810.6 L638.3 810.1 L637.6 809.2 L636.9 808.9 L636.2 808.6 L635.5 808.8 L634.8 809.2 L634.1 809.6 L633.4 810.3 L632.7 810.7 L632.0 811.4 L631.3 811.6 L630.6 812.0 L629.9 812.3 L629.2 812.5 L628.5 812.3 L627.8 812.0 L627.1 811.9 L626.4 812.0 L625.7 811.7 L625.0 811.4 L624.3 811.3 L623.6 810.9 L622.9 810.1 L622.2 808.8 L621.5 807.9 L620.8 807.9 L620.1 807.8 L619.4 807.8 L618.7 807.8 L618.0 807.8 Z M720.6 807.0 L721.3 807.0 L722.0 806.9 L722.7 806.8 L723.4 806.7 L724.1 806.7 L724.8 806.3 L725.5 805.6 L726.2 805.0 L726.9 804.9 L727.6 804.7 L728.3 804.5 L729.0 804.4 L729.7 804.4 L730.4 804.5 L731.1 804.5 L731.8 804.3 L732.5 804.4 L733.2 804.1 L733.9 804.1 L734.6 803.6 L735.3 803.5 L736.0 803.3 L736.7 803.2 L737.4 803.0 L738.1 803.2 L738.8 802.9 L739.5 802.7 L740.2 803.0 L740.9 803.0 L741.6 803.3 L742.3 803.4 L743.0 803.3 L743.7 803.9 L744.4 803.8 L745.1 804.2 L745.8 804.4 L746.5 804.9 L747.2 805.4 L747.9 805.8 L748.6 806.3 L749.3 806.5 L750.0 806.7 L750.7 806.9 L750.7 807.9 L750.0 808.1 L749.3 808.3 L748.6 808.5 L747.9 809.0 L747.2 809.5 L746.5 810.0 L745.8 810.2 L745.1 810.7 L744.4 810.8 L743.7 811.0 L743.0 811.5 L742.3 811.7 L741.6 811.6 L740.9 811.7 L740.2 811.9 L739.5 811.8 L738.8 811.7 L738.1 811.8 L737.4 811.7 L736.7 811.7 L736.0 811.4 L735.3 811.0 L734.6 811.0 L733.9 810.7 L733.2 810.5 L732.5 810.5 L731.8 810.4 L731.1 810.3 L730.4 810.2 L729.7 810.2 L729.0 810.5 L728.3 810.5 L727.6 810.4 L726.9 810.0 L726.2 809.8 L725.5 809.1 L724.8 808.4 L724.1 808.1 L723.4 808.1 L722.7 808.0 L722.0 807.9 L721.3 807.8 L720.6 807.8 Z M751.0 807.0 L751.7 807.0 L752.4 807.0 L753.1 807.0 L753.8 807.0 L754.5 807.0 L755.2 807.0 L755.9 807.0 L756.6 807.0 L757.3 806.9 L758.0 807.0 L758.7 806.9 L759.4 806.9 L760.1 806.9 L760.8 806.9 L761.5 806.0 L762.2 804.9 L762.9 803.7 L763.6 802.3 L764.3 801.4 L765.0 800.3 L765.7 799.5 L766.4 798.6 L767.1 798.5 L767.8 798.4 L768.5 798.3 L769.2 798.2 L769.9 797.4 L770.6 797.1 L771.3 796.6 L772.0 797.1 L772.7 796.5 L773.4 796.3 L774.1 797.0 L774.8 797.1 L775.5 796.9 L776.2 796.7 L776.9 795.6 L777.6 796.4 L778.3 797.7 L779.0 800.8 L779.7 803.7 L780.4 803.8 L781.1 802.0 L781.8 799.8 L782.5 797.2 L783.2 794.4 L783.9 792.3 L784.6 792.1 L785.3 792.2 L786.0 794.4 L786.7 796.3 L787.4 797.5 L788.1 798.5 L788.8 798.8 L789.5 799.7 L790.2 799.6 L790.9 799.8 L791.6 799.4 L792.3 799.3 L793.0 799.6 L793.7 799.5 L794.4 799.3 L795.1 799.3 L795.8 798.4 L796.5 798.6 L797.2 798.6 L797.9 799.1 L798.6 798.8 L799.3 799.0 L800.0 799.7 L800.7 799.7 L801.4 799.9 L802.1 800.4 L802.8 801.4 L803.5 801.7 L804.2 803.4 L804.9 805.0 L805.6 806.3 L806.3 806.5 L807.0 806.7 L807.7 806.8 L808.4 806.9 L808.4 807.9 L807.7 807.9 L807.0 808.1 L806.3 808.4 L805.6 808.5 L804.9 809.8 L804.2 811.2 L803.5 812.7 L802.8 813.6 L802.1 814.0 L801.4 814.5 L800.7 814.9 L800.0 815.3 L799.3 815.7 L798.6 815.3 L797.9 815.4 L797.2 815.8 L796.5 816.1 L795.8 815.8 L795.1 815.9 L794.4 816.0 L793.7 815.6 L793.0 815.0 L792.3 815.6 L791.6 815.4 L790.9 814.9 L790.2 815.4 L789.5 815.2 L788.8 815.5 L788.1 816.1 L787.4 817.2 L786.7 818.5 L786.0 820.8 L785.3 821.8 L784.6 822.7 L783.9 821.7 L783.2 820.2 L782.5 817.7 L781.8 814.7 L781.1 812.6 L780.4 811.0 L779.7 811.0 L779.0 814.0 L778.3 816.4 L777.6 819.0 L776.9 819.2 L776.2 818.3 L775.5 818.3 L774.8 817.7 L774.1 817.5 L773.4 818.3 L772.7 817.9 L772.0 817.8 L771.3 817.7 L770.6 817.8 L769.9 816.8 L769.2 816.9 L768.5 817.2 L767.8 816.8 L767.1 816.5 L766.4 815.7 L765.7 815.7 L765.0 814.4 L764.3 813.5 L763.6 812.6 L762.9 811.0 L762.2 809.8 L761.5 808.7 L760.8 807.9 L760.1 807.9 L759.4 807.9 L758.7 807.9 L758.0 807.9 L757.3 807.8 L756.6 807.8 L755.9 807.8 L755.2 807.8 L754.5 807.8 L753.8 807.8 L753.1 807.8 L752.4 807.8 L751.7 807.8 L751.0 807.8 Z M809.0 807.0 L809.7 806.9 L810.4 806.8 L811.1 806.7 L811.8 806.4 L812.5 805.6 L813.2 804.8 L813.9 804.2 L814.6 804.0 L815.3 803.6 L816.0 803.3 L816.7 803.4 L817.4 803.5 L818.1 803.4 L818.8 803.2 L819.5 802.9 L820.2 802.8 L820.9 803.1 L821.6 802.8 L822.3 802.7 L823.0 803.0 L823.7 802.5 L824.4 802.6 L825.1 802.8 L825.8 802.5 L826.5 802.6 L827.2 802.8 L827.9 803.1 L828.6 803.0 L829.3 803.0 L830.0 803.4 L830.7 803.5 L831.4 803.7 L832.1 804.1 L832.8 804.6 L833.5 805.1 L834.2 805.6 L834.9 806.0 L835.6 806.3 L836.3 806.3 L837.0 805.9 L837.7 805.4 L838.4 804.8 L839.1 803.9 L839.8 803.6 L840.5 803.3 L841.2 803.0 L841.9 803.1 L842.6 802.7 L843.3 802.7 L844.0 802.9 L844.7 803.1 L845.4 803.3 L846.1 803.8 L846.8 804.2 L847.5 804.7 L848.2 805.2 L848.9 805.9 L849.6 806.2 L850.3 806.4 L851.0 806.4 L851.7 805.7 L852.4 805.2 L853.1 804.7 L853.8 804.1 L854.5 804.1 L855.2 803.4 L855.9 803.4 L856.6 803.3 L857.3 803.5 L858.0 803.4 L858.7 802.9 L859.4 803.2 L860.1 803.3 L860.8 803.0 L861.5 803.0 L862.2 803.0 L862.9 803.4 L863.6 803.0 L864.3 803.3 L865.0 803.3 L865.7 803.4 L866.4 803.2 L867.1 803.5 L867.8 803.5 L868.5 803.7 L869.2 803.8 L869.9 803.7 L870.6 803.8 L871.3 803.8 L872.0 804.1 L872.7 804.0 L873.4 804.2 L874.1 804.3 L874.8 804.3 L875.5 804.5 L876.2 804.6 L876.9 804.8 L877.6 804.7 L878.3 805.0 L879.0 805.1 L879.7 805.3 L880.4 805.5 L881.1 805.8 L881.8 806.0 L882.5 806.1 L883.2 806.3 L883.9 806.5 L884.6 806.7 L884.6 808.1 L883.9 808.2 L883.2 808.4 L882.5 808.7 L881.8 808.8 L881.1 809.0 L880.4 809.2 L879.7 809.5 L879.0 809.7 L878.3 809.8 L877.6 810.0 L876.9 810.2 L876.2 810.1 L875.5 810.5 L874.8 810.5 L874.1 810.7 L873.4 810.6 L872.7 810.9 L872.0 810.8 L871.3 811.1 L870.6 811.1 L869.9 811.2 L869.2 811.1 L868.5 811.4 L867.8 811.5 L867.1 811.4 L866.4 811.6 L865.7 811.3 L865.0 811.5 L864.3 811.4 L863.6 811.4 L862.9 811.4 L862.2 811.5 L861.5 811.7 L860.8 811.6 L860.1 811.6 L859.4 811.9 L858.7 811.9 L858.0 811.7 L857.3 811.5 L856.6 811.4 L855.9 811.2 L855.2 811.4 L854.5 810.8 L853.8 810.7 L853.1 810.1 L852.4 809.6 L851.7 809.0 L851.0 808.3 L850.3 808.5 L849.6 808.5 L848.9 809.0 L848.2 809.5 L847.5 810.1 L846.8 810.7 L846.1 811.2 L845.4 811.7 L844.7 811.7 L844.0 811.8 L843.3 812.0 L842.6 811.9 L841.9 812.0 L841.2 811.8 L840.5 811.4 L839.8 811.1 L839.1 810.8 L838.4 810.1 L837.7 809.5 L837.0 808.9 L836.3 808.5 L835.6 808.4 L834.9 808.8 L834.2 809.2 L833.5 809.8 L832.8 810.3 L832.1 810.6 L831.4 810.8 L830.7 811.3 L830.0 811.4 L829.3 811.8 L828.6 811.7 L827.9 811.7 L827.2 811.7 L826.5 811.9 L825.8 812.3 L825.1 812.2 L824.4 811.9 L823.7 812.2 L823.0 812.1 L822.3 811.9 L821.6 812.0 L820.9 811.8 L820.2 811.6 L819.5 811.9 L818.8 811.6 L818.1 811.4 L817.4 811.4 L816.7 811.4 L816.0 811.5 L815.3 811.0 L814.6 810.8 L813.9 810.4 L813.2 810.1 L812.5 809.3 L811.8 808.4 L811.1 808.1 L810.4 808.0 L809.7 807.9 L809.0 807.8 Z M885.0 807.0 L885.7 807.0 L886.4 807.0 L887.1 807.0 L887.8 807.0 L888.5 807.0 L889.2 807.0 L889.9 807.0 L890.6 807.0 L891.3 807.0 L892.0 807.0 L892.7 807.0 L893.4 807.0 L894.1 807.0 L894.8 807.0 L895.5 807.0 L896.2 807.0 L896.9 807.0 L897.6 807.0 L898.3 807.0 L899.0 807.0 L899.7 807.0 L900.4 807.0 L901.1 807.0 L901.8 807.0 L902.5 807.0 L903.2 807.0 L903.9 807.0 L904.6 807.0 L904.6 807.8 L903.9 807.8 L903.2 807.8 L902.5 807.8 L901.8 807.8 L901.1 807.8 L900.4 807.8 L899.7 807.8 L899.0 807.8 L898.3 807.8 L897.6 807.8 L896.9 807.8 L896.2 807.8 L895.5 807.8 L894.8 807.8 L894.1 807.8 L893.4 807.8 L892.7 807.8 L892.0 807.8 L891.3 807.8 L890.6 807.8 L889.9 807.8 L889.2 807.8 L888.5 807.8 L887.8 807.8 L887.1 807.8 L886.4 807.8 L885.7 807.8 L885.0 807.8 Z M905.0 806.9 L905.7 805.2 L906.4 803.5 L907.1 802.3 L907.8 801.6 L908.5 800.7 L909.2 801.1 L909.9 801.4 L910.6 801.6 L911.3 802.3 L912.0 803.5 L912.7 804.0 L913.4 805.0 L914.1 805.9 L914.8 806.5 L914.8 808.2 L914.1 809.0 L913.4 809.7 L912.7 810.6 L912.0 811.3 L911.3 812.4 L910.6 813.1 L909.9 813.7 L909.2 813.6 L908.5 814.2 L907.8 813.4 L907.1 812.4 L906.4 811.3 L905.7 809.6 L905.0 807.9 Z M915.4 807.0 L916.1 807.0 L916.8 807.0 L917.5 807.0 L918.2 807.0 L918.9 807.0 L919.6 807.0 L920.3 806.9 L921.0 806.9 L921.7 806.9 L922.4 805.7 L923.1 803.2 L923.8 802.6 L924.5 802.1 L925.2 801.4 L925.9 801.3 L926.6 801.4 L927.3 801.9 L928.0 801.8 L928.7 801.9 L929.4 801.9 L930.1 801.9 L930.8 802.2 L931.5 801.9 L932.2 802.2 L932.9 801.5 L933.6 801.2 L934.3 801.1 L935.0 801.3 L935.7 801.2 L936.4 801.2 L937.1 801.0 L937.8 801.1 L938.5 801.2 L939.2 801.1 L939.9 800.8 L940.6 801.6 L941.3 801.6 L942.0 801.9 L942.7 801.8 L943.4 802.6 L944.1 802.8 L944.8 803.0 L945.5 803.3 L946.2 804.0 L946.9 804.8 L947.6 805.4 L948.3 805.9 L949.0 806.4 L949.0 808.4 L948.3 808.9 L947.6 809.2 L946.9 809.9 L946.2 810.5 L945.5 811.1 L944.8 811.9 L944.1 812.0 L943.4 812.5 L942.7 813.0 L942.0 813.2 L941.3 813.2 L940.6 813.7 L939.9 813.9 L939.2 813.9 L938.5 813.7 L937.8 814.1 L937.1 814.4 L936.4 814.0 L935.7 814.1 L935.0 813.7 L934.3 813.6 L933.6 813.6 L932.9 813.0 L932.2 812.8 L931.5 812.7 L930.8 812.8 L930.1 813.0 L929.4 813.1 L928.7 812.9 L928.0 813.0 L927.3 813.1 L926.6 813.3 L925.9 813.1 L925.2 813.4 L924.5 812.7 L923.8 812.2 L923.1 811.5 L922.4 809.1 L921.7 807.9 L921.0 807.8 L920.3 807.9 L919.6 807.8 L918.9 807.8 L918.2 807.8 L917.5 807.8 L916.8 807.8 L916.1 807.8 L915.4 807.8 Z M949.6 807.0 L950.3 807.0 L951.0 807.0 L951.7 806.9 L952.4 806.9 L953.1 806.9 L953.8 806.9 L954.5 806.9 L955.2 805.9 L955.9 803.0 L956.6 801.4 L957.3 800.6 L958.0 800.4 L958.7 800.2 L959.4 800.2 L960.1 800.4 L960.8 800.9 L961.5 800.2 L962.2 800.6 L962.9 800.6 L963.6 800.5 L964.3 800.4 L965.0 799.7 L965.7 800.0 L966.4 799.2 L967.1 799.7 L967.8 799.2 L968.5 798.7 L969.2 798.1 L969.9 798.3 L970.6 799.2 L971.3 798.7 L972.0 799.3 L972.7 798.9 L973.4 799.7 L974.1 799.5 L974.8 800.0 L975.5 799.8 L976.2 800.6 L976.9 800.9 L977.6 801.3 L978.3 801.2 L979.0 801.9 L979.7 802.1 L980.4 802.7 L981.1 803.2 L981.8 803.9 L982.5 804.3 L983.2 804.6 L983.9 805.1 L984.6 805.6 L985.3 806.0 L986.0 806.3 L986.7 806.6 L987.4 806.9 L987.4 808.0 L986.7 808.3 L986.0 808.6 L985.3 808.7 L984.6 809.1 L983.9 809.6 L983.2 809.9 L982.5 810.4 L981.8 810.8 L981.1 811.4 L980.4 812.2 L979.7 812.8 L979.0 813.4 L978.3 813.4 L977.6 814.0 L976.9 814.3 L976.2 814.3 L975.5 814.5 L974.8 814.8 L974.1 815.1 L973.4 815.2 L972.7 815.5 L972.0 815.7 L971.3 816.3 L970.6 816.1 L969.9 816.7 L969.2 816.3 L968.5 816.3 L967.8 816.1 L967.1 815.5 L966.4 815.4 L965.7 815.3 L965.0 815.1 L964.3 814.7 L963.6 814.9 L962.9 814.1 L962.2 814.3 L961.5 814.5 L960.8 814.2 L960.1 814.3 L959.4 814.7 L958.7 814.4 L958.0 814.7 L957.3 814.2 L956.6 813.3 L955.9 812.0 L955.2 808.9 L954.5 807.9 L953.8 808.0 L953.1 807.9 L952.4 807.9 L951.7 807.9 L951.0 807.8 L950.3 807.8 L949.6 807.8 Z M987.6 807.0 L988.3 807.0 L989.0 807.0 L989.7 807.0 L990.4 807.0 L991.1 807.0 L991.8 807.0 L992.5 807.0 L993.2 807.0 L993.9 807.0 L994.6 807.0 L995.3 807.0 L996.0 807.0 L996.7 807.0 L997.4 807.0 L998.1 807.0 L998.8 807.0 L999.5 807.0 L1000.2 807.0 L1000.9 807.0 L1001.6 807.0 L1002.3 807.0 L1003.0 807.0 L1003.7 807.0 L1004.4 807.0 L1005.1 807.0 L1005.8 807.0 L1006.5 807.0 L1007.2 807.0 L1007.9 807.0 L1008.6 807.0 L1009.3 807.0 L1010.0 807.0 L1010.7 807.0 L1011.4 807.0 L1012.1 807.0 L1012.8 807.0 L1012.8 807.8 L1012.1 807.8 L1011.4 807.8 L1010.7 807.8 L1010.0 807.8 L1009.3 807.8 L1008.6 807.8 L1007.9 807.8 L1007.2 807.8 L1006.5 807.8 L1005.8 807.8 L1005.1 807.8 L1004.4 807.8 L1003.7 807.8 L1003.0 807.8 L1002.3 807.8 L1001.6 807.8 L1000.9 807.8 L1000.2 807.8 L999.5 807.8 L998.8 807.8 L998.1 807.8 L997.4 807.8 L996.7 807.8 L996.0 807.8 L995.3 807.8 L994.6 807.8 L993.9 807.8 L993.2 807.8 L992.5 807.8 L991.8 807.8 L991.1 807.8 L990.4 807.8 L989.7 807.8 L989.0 807.8 L988.3 807.8 L987.6 807.8 Z M1013.0 807.0 L1013.7 806.8 L1014.4 806.7 L1015.1 806.5 L1015.8 806.3 L1016.5 806.1 L1017.2 805.9 L1017.9 805.7 L1018.6 805.2 L1019.3 804.9 L1020.0 804.5 L1020.7 804.3 L1021.4 804.1 L1022.1 803.6 L1022.8 803.4 L1023.5 803.1 L1024.2 802.9 L1024.9 802.7 L1024.9 812.4 L1024.2 811.8 L1023.5 811.5 L1022.8 811.4 L1022.1 811.2 L1021.4 811.0 L1020.7 810.5 L1020.0 810.3 L1019.3 809.7 L1018.6 809.5 L1017.9 809.1 L1017.2 808.8 L1016.5 808.6 L1015.8 808.4 L1015.1 808.3 L1014.4 808.1 L1013.7 808.0 L1013.0 807.8 Z" fill="#6b6977"/></g>
<g clip-path="url(#ovsel)"><path d="M116.0 807.0 L116.7 807.0 L117.4 807.0 L118.1 807.0 L118.8 807.0 L119.5 807.0 L120.2 807.0 L120.9 807.0 L121.6 807.0 L122.3 807.0 L123.0 807.0 L123.7 807.0 L124.4 807.0 L125.1 807.0 L125.8 807.0 L126.5 807.0 L127.2 807.0 L127.9 807.0 L128.6 807.0 L129.3 807.0 L130.0 807.0 L130.7 807.0 L131.4 807.0 L132.1 807.0 L132.8 807.0 L133.5 807.0 L134.2 807.0 L134.9 807.0 L135.6 807.0 L136.3 807.0 L137.0 807.0 L137.7 807.0 L138.4 807.0 L139.1 807.0 L139.8 807.0 L140.5 807.0 L141.2 807.0 L141.9 807.0 L142.6 807.0 L142.6 807.8 L141.9 807.8 L141.2 807.8 L140.5 807.8 L139.8 807.8 L139.1 807.8 L138.4 807.8 L137.7 807.8 L137.0 807.8 L136.3 807.8 L135.6 807.8 L134.9 807.8 L134.2 807.8 L133.5 807.8 L132.8 807.8 L132.1 807.8 L131.4 807.8 L130.7 807.8 L130.0 807.8 L129.3 807.8 L128.6 807.8 L127.9 807.8 L127.2 807.8 L126.5 807.8 L125.8 807.8 L125.1 807.8 L124.4 807.8 L123.7 807.8 L123.0 807.8 L122.3 807.8 L121.6 807.8 L120.9 807.8 L120.2 807.8 L119.5 807.8 L118.8 807.8 L118.1 807.8 L117.4 807.8 L116.7 807.8 L116.0 807.8 Z M145.5 806.9 L146.2 804.9 L146.9 803.1 L147.6 801.8 L148.3 801.4 L149.0 801.6 L149.7 800.9 L150.4 801.1 L151.1 801.1 L151.8 801.4 L152.5 801.6 L153.2 801.8 L153.9 802.4 L154.6 802.6 L155.3 802.9 L156.0 803.4 L156.7 803.9 L157.4 804.1 L158.1 804.5 L158.8 805.2 L159.5 805.7 L160.2 806.4 L160.2 808.5 L159.5 809.1 L158.8 809.6 L158.1 810.2 L157.4 810.7 L156.7 811.0 L156.0 811.4 L155.3 811.7 L154.6 812.1 L153.9 812.5 L153.2 812.8 L152.5 813.2 L151.8 813.3 L151.1 813.7 L150.4 814.0 L149.7 813.8 L149.0 813.4 L148.3 813.1 L147.6 812.8 L146.9 812.0 L146.2 809.9 L145.5 807.9 Z M160.6 806.9 L161.3 806.9 L162.0 806.8 L162.7 806.8 L163.4 806.8 L164.1 806.3 L164.8 803.7 L165.5 801.9 L166.2 802.0 L166.9 801.1 L167.6 800.9 L168.3 800.9 L169.0 801.2 L169.7 801.3 L170.4 801.5 L171.1 801.7 L171.8 801.5 L172.5 801.3 L173.2 801.0 L173.9 800.6 L174.6 801.3 L175.3 802.3 L176.0 803.1 L176.7 802.5 L177.4 802.2 L178.1 801.6 L178.8 801.4 L179.5 801.4 L180.2 801.0 L180.9 800.6 L181.6 800.7 L182.3 801.2 L183.0 801.6 L183.7 801.8 L184.4 802.4 L185.1 803.0 L185.8 803.7 L186.5 805.0 L187.2 806.2 L187.9 806.6 L188.6 806.8 L188.6 808.0 L187.9 808.2 L187.2 808.6 L186.5 809.8 L185.8 811.0 L185.1 811.6 L184.4 812.8 L183.7 813.0 L183.0 813.5 L182.3 813.9 L181.6 813.8 L180.9 814.2 L180.2 813.8 L179.5 813.3 L178.8 813.5 L178.1 813.1 L177.4 812.8 L176.7 812.3 L176.0 811.8 L175.3 812.4 L174.6 813.6 L173.9 813.9 L173.2 813.9 L172.5 814.1 L171.8 813.8 L171.1 813.2 L170.4 813.5 L169.7 813.5 L169.0 813.8 L168.3 813.7 L167.6 813.7 L166.9 813.6 L166.2 812.9 L165.5 812.8 L164.8 811.0 L164.1 808.4 L163.4 808.0 L162.7 808.0 L162.0 807.9 L161.3 807.9 L160.6 807.9 Z M189.0 806.9 L189.7 806.3 L190.4 805.7 L191.1 806.2 L191.8 806.6 L192.5 806.8 L193.2 806.7 L193.9 806.7 L194.6 804.0 L195.3 801.6 L196.0 801.2 L196.7 800.8 L197.4 801.2 L198.1 800.8 L198.8 801.2 L199.5 801.3 L200.2 801.5 L200.9 801.2 L201.6 801.6 L202.3 801.4 L203.0 801.5 L203.7 801.0 L204.4 801.0 L205.1 800.6 L205.8 800.3 L206.5 799.8 L207.2 800.2 L207.9 799.8 L208.6 799.4 L209.3 798.9 L210.0 798.9 L210.7 799.0 L211.4 798.7 L212.1 799.3 L212.8 798.9 L213.5 799.5 L214.2 799.9 L214.9 799.8 L215.6 800.7 L216.3 800.9 L217.0 800.9 L217.7 801.2 L218.4 801.8 L219.1 802.1 L219.8 802.2 L220.5 802.8 L221.2 803.1 L221.9 803.3 L222.6 803.9 L223.3 803.9 L224.0 804.4 L224.7 804.6 L225.4 804.9 L226.1 805.1 L226.8 805.5 L227.5 805.7 L228.2 806.0 L228.9 806.2 L229.6 806.4 L230.3 806.7 L231.0 806.9 L231.0 807.9 L230.3 808.1 L229.6 808.4 L228.9 808.6 L228.2 808.8 L227.5 809.0 L226.8 809.4 L226.1 809.7 L225.4 809.8 L224.7 810.1 L224.0 810.6 L223.3 810.6 L222.6 810.9 L221.9 811.6 L221.2 811.6 L220.5 811.8 L219.8 812.1 L219.1 812.7 L218.4 813.1 L217.7 813.1 L217.0 813.8 L216.3 814.1 L215.6 814.5 L214.9 815.0 L214.2 814.8 L213.5 815.1 L212.8 815.9 L212.1 816.0 L211.4 816.1 L210.7 815.9 L210.0 815.5 L209.3 815.6 L208.6 815.4 L207.9 815.4 L207.2 814.8 L206.5 814.8 L205.8 814.2 L205.1 813.9 L204.4 814.2 L203.7 813.3 L203.0 813.4 L202.3 813.4 L201.6 813.2 L200.9 813.5 L200.2 813.6 L199.5 813.4 L198.8 813.7 L198.1 814.3 L197.4 813.7 L196.7 813.9 L196.0 813.4 L195.3 813.6 L194.6 810.8 L193.9 808.2 L193.2 808.1 L192.5 808.0 L191.8 808.1 L191.1 808.7 L190.4 809.0 L189.7 808.4 L189.0 807.9 Z M231.0 807.0 L231.7 807.0 L232.4 807.0 L233.1 807.0 L233.8 807.0 L234.5 807.0 L235.2 807.0 L235.9 807.0 L236.6 807.0 L237.3 807.0 L238.0 807.0 L238.7 807.0 L239.4 807.0 L240.1 807.0 L240.8 807.0 L241.5 807.0 L242.2 807.0 L242.9 807.0 L243.6 807.0 L244.3 807.0 L245.0 807.0 L245.7 807.0 L246.4 807.0 L247.1 807.0 L247.8 807.0 L248.5 807.0 L249.2 807.0 L249.9 807.0 L250.6 807.0 L251.3 807.0 L252.0 807.0 L252.7 807.0 L253.4 807.0 L254.1 807.0 L254.1 807.8 L253.4 807.8 L252.7 807.8 L252.0 807.8 L251.3 807.8 L250.6 807.8 L249.9 807.8 L249.2 807.8 L248.5 807.8 L247.8 807.8 L247.1 807.8 L246.4 807.8 L245.7 807.8 L245.0 807.8 L244.3 807.8 L243.6 807.8 L242.9 807.8 L242.2 807.8 L241.5 807.8 L240.8 807.8 L240.1 807.8 L239.4 807.8 L238.7 807.8 L238.0 807.8 L237.3 807.8 L236.6 807.8 L235.9 807.8 L235.2 807.8 L234.5 807.8 L233.8 807.8 L233.1 807.8 L232.4 807.8 L231.7 807.8 L231.0 807.8 Z M254.6 806.9 L255.3 806.1 L256.0 805.3 L256.7 804.8 L257.4 804.6 L258.1 804.5 L258.8 804.5 L259.5 804.4 L260.2 804.6 L260.9 805.0 L261.6 805.2 L262.3 805.3 L263.0 804.9 L263.7 804.6 L264.4 804.3 L265.1 804.2 L265.8 804.2 L266.5 804.3 L267.2 804.4 L267.9 804.3 L268.6 804.4 L269.3 804.4 L270.0 804.1 L270.7 803.8 L271.4 803.6 L272.1 802.3 L272.8 800.3 L273.5 799.4 L274.2 799.3 L274.9 798.9 L275.6 798.9 L276.3 798.7 L277.0 798.9 L277.7 798.9 L278.4 799.2 L279.1 799.9 L279.8 800.1 L280.5 799.4 L281.2 799.2 L281.9 799.7 L282.6 799.4 L283.3 799.5 L284.0 799.5 L284.7 799.5 L285.4 799.3 L286.1 800.0 L286.8 799.7 L287.5 800.0 L288.2 800.1 L288.9 799.4 L289.6 799.4 L290.3 799.1 L291.0 798.5 L291.7 798.4 L292.4 798.6 L293.1 799.2 L293.8 799.0 L294.5 799.8 L295.2 799.5 L295.9 799.9 L296.6 800.3 L297.3 801.2 L298.0 801.7 L298.7 802.2 L299.4 802.5 L300.1 804.1 L300.8 805.1 L301.5 805.1 L302.2 805.1 L302.9 805.0 L303.6 804.5 L304.3 804.0 L305.0 801.5 L305.7 798.0 L306.4 797.1 L307.1 797.3 L307.8 797.2 L308.5 797.8 L309.2 799.1 L309.9 799.6 L310.6 799.8 L311.3 799.3 L312.0 799.4 L312.7 799.9 L313.4 799.5 L314.1 799.5 L314.8 799.8 L315.5 800.1 L316.2 799.9 L316.9 800.2 L317.6 800.2 L318.3 799.7 L319.0 799.8 L319.7 799.5 L320.4 799.4 L321.1 799.4 L321.8 799.1 L322.5 798.9 L323.2 798.3 L323.9 798.5 L324.6 796.9 L325.3 797.6 L326.0 796.9 L326.7 797.6 L327.4 797.9 L328.1 799.3 L328.8 800.0 L329.5 801.0 L330.2 802.0 L330.9 803.2 L331.6 804.6 L332.3 805.4 L333.0 806.0 L333.7 806.0 L334.4 806.3 L335.1 806.3 L335.8 806.4 L336.5 806.1 L337.2 805.9 L337.9 799.9 L338.6 797.2 L339.3 798.4 L340.0 799.4 L340.7 799.9 L341.4 800.6 L342.1 801.6 L342.8 802.2 L343.5 802.6 L344.2 803.0 L344.9 803.6 L345.6 804.2 L346.3 804.7 L347.0 805.2 L347.7 805.3 L348.4 805.6 L349.1 805.9 L349.8 806.1 L350.5 806.1 L351.2 806.0 L351.9 806.1 L352.6 804.3 L353.3 802.5 L354.0 802.2 L354.7 801.5 L355.4 801.3 L356.1 801.3 L356.8 801.3 L357.5 801.1 L358.2 801.6 L358.9 801.2 L359.6 800.8 L360.3 800.4 L361.0 800.7 L361.7 800.4 L362.4 800.7 L363.1 800.9 L363.8 801.1 L364.5 801.2 L365.2 802.1 L365.9 802.0 L366.6 802.5 L367.3 803.2 L368.0 803.7 L368.7 803.4 L369.4 802.4 L370.1 802.2 L370.8 801.8 L371.5 801.6 L372.2 801.6 L372.9 801.8 L373.6 802.0 L374.3 801.6 L375.0 801.9 L375.7 802.3 L376.4 802.2 L377.1 802.1 L377.8 801.8 L378.5 801.6 L379.2 801.6 L379.9 801.8 L380.6 802.0 L381.3 802.1 L382.0 802.2 L382.7 801.9 L383.4 802.1 L384.1 802.4 L384.8 802.3 L385.5 802.7 L386.2 802.9 L386.9 803.0 L387.6 803.1 L388.3 803.1 L389.0 803.6 L389.7 803.6 L390.4 804.0 L391.1 804.0 L391.8 804.2 L392.5 804.4 L393.2 804.6 L393.9 804.9 L394.6 805.2 L395.3 805.3 L396.0 805.6 L396.7 805.7 L397.4 805.9 L398.1 806.1 L398.8 806.2 L399.5 806.4 L400.2 806.2 L400.9 806.1 L401.6 805.7 L402.3 804.6 L403.0 803.7 L403.7 803.7 L404.4 803.5 L405.1 803.5 L405.8 803.4 L406.5 803.2 L407.2 803.4 L407.9 803.5 L408.6 803.3 L409.3 803.6 L410.0 803.5 L410.7 803.6 L411.4 803.9 L412.1 804.2 L412.8 804.2 L413.5 804.4 L414.2 804.4 L414.9 804.5 L415.6 804.7 L416.3 804.9 L417.0 804.9 L417.7 804.7 L418.4 804.4 L419.1 804.1 L419.8 803.3 L420.5 802.6 L421.2 802.0 L421.9 801.8 L422.6 801.8 L423.3 801.5 L424.0 801.6 L424.7 801.6 L425.4 801.3 L426.1 801.4 L426.8 801.7 L427.5 801.9 L428.2 801.9 L428.9 801.4 L429.6 801.7 L430.3 801.6 L431.0 801.6 L431.7 801.4 L432.4 801.8 L433.1 801.4 L433.8 801.3 L434.5 801.8 L435.2 801.8 L435.9 802.2 L436.6 802.4 L437.3 802.8 L438.0 803.4 L438.7 804.1 L439.4 804.5 L440.1 805.2 L440.8 806.1 L441.5 806.4 L442.2 806.4 L442.9 806.5 L443.6 805.6 L444.3 804.5 L445.0 803.8 L445.7 803.4 L446.4 803.1 L447.1 802.6 L447.8 802.7 L448.5 802.6 L449.2 802.3 L449.9 802.0 L450.6 802.1 L451.3 802.7 L452.0 803.0 L452.7 803.1 L453.4 803.1 L454.1 802.7 L454.8 802.5 L455.5 802.2 L456.2 802.2 L456.9 802.1 L457.6 801.8 L458.3 801.8 L459.0 801.5 L459.7 801.7 L460.4 801.9 L461.1 802.1 L461.8 802.0 L462.5 801.6 L463.2 801.7 L463.9 802.1 L464.6 802.4 L465.3 802.1 L466.0 802.6 L466.7 802.4 L467.4 802.9 L468.1 803.3 L468.8 803.4 L469.5 803.7 L470.2 803.9 L470.9 804.3 L471.6 804.7 L472.3 805.3 L473.0 805.7 L473.7 806.3 L474.4 806.9 L474.4 808.0 L473.7 808.4 L473.0 809.0 L472.3 809.4 L471.6 809.9 L470.9 810.3 L470.2 810.7 L469.5 811.2 L468.8 811.5 L468.1 811.7 L467.4 812.1 L466.7 812.4 L466.0 812.1 L465.3 812.6 L464.6 812.7 L463.9 812.9 L463.2 812.9 L462.5 813.1 L461.8 813.2 L461.1 813.2 L460.4 813.1 L459.7 813.0 L459.0 813.4 L458.3 812.8 L457.6 813.1 L456.9 812.6 L456.2 812.9 L455.5 812.6 L454.8 812.6 L454.1 812.2 L453.4 811.7 L452.7 811.7 L452.0 812.0 L451.3 812.4 L450.6 812.7 L449.9 812.9 L449.2 812.4 L448.5 812.7 L447.8 812.3 L447.1 812.4 L446.4 811.9 L445.7 811.3 L445.0 810.8 L444.3 810.2 L443.6 809.2 L442.9 808.4 L442.2 808.4 L441.5 808.5 L440.8 808.7 L440.1 809.5 L439.4 810.4 L438.7 810.7 L438.0 811.6 L437.3 811.9 L436.6 812.6 L435.9 812.5 L435.2 813.1 L434.5 813.3 L433.8 813.4 L433.1 813.5 L432.4 813.4 L431.7 813.2 L431.0 812.9 L430.3 812.9 L429.6 812.8 L428.9 813.3 L428.2 813.1 L427.5 813.3 L426.8 813.2 L426.1 813.4 L425.4 813.5 L424.7 813.4 L424.0 813.2 L423.3 812.8 L422.6 813.2 L421.9 813.0 L421.2 812.8 L420.5 811.9 L419.8 811.4 L419.1 810.7 L418.4 810.5 L417.7 810.1 L417.0 809.8 L416.3 810.0 L415.6 810.0 L414.9 810.3 L414.2 810.4 L413.5 810.4 L412.8 810.6 L412.1 811.0 L411.4 810.8 L410.7 811.0 L410.0 811.2 L409.3 811.3 L408.6 811.4 L407.9 811.1 L407.2 811.5 L406.5 811.3 L405.8 811.4 L405.1 811.2 L404.4 811.2 L403.7 811.3 L403.0 810.9 L402.3 810.1 L401.6 809.2 L400.9 808.8 L400.2 808.6 L399.5 808.4 L398.8 808.5 L398.1 808.8 L397.4 808.8 L396.7 809.2 L396.0 809.4 L395.3 809.4 L394.6 809.7 L393.9 810.0 L393.2 810.0 L392.5 810.3 L391.8 810.4 L391.1 810.9 L390.4 810.9 L389.7 811.1 L389.0 811.4 L388.3 811.3 L387.6 811.5 L386.9 812.0 L386.2 812.2 L385.5 811.9 L384.8 812.4 L384.1 812.3 L383.4 812.5 L382.7 812.6 L382.0 812.6 L381.3 812.9 L380.6 812.9 L379.9 813.1 L379.2 813.1 L378.5 812.9 L377.8 813.0 L377.1 813.1 L376.4 813.0 L375.7 812.7 L375.0 813.1 L374.3 812.8 L373.6 812.9 L372.9 813.4 L372.2 813.1 L371.5 812.9 L370.8 813.2 L370.1 812.9 L369.4 812.2 L368.7 811.2 L368.0 811.1 L367.3 811.7 L366.6 812.4 L365.9 812.4 L365.2 812.9 L364.5 813.6 L363.8 813.8 L363.1 813.8 L362.4 813.9 L361.7 814.0 L361.0 814.3 L360.3 814.3 L359.6 813.6 L358.9 813.8 L358.2 813.5 L357.5 813.5 L356.8 813.6 L356.1 814.0 L355.4 813.7 L354.7 813.3 L354.0 812.7 L353.3 812.3 L352.6 810.6 L351.9 808.8 L351.2 808.7 L350.5 808.8 L349.8 808.7 L349.1 808.9 L348.4 809.2 L347.7 809.4 L347.0 809.7 L346.3 810.1 L345.6 810.8 L344.9 811.3 L344.2 811.8 L343.5 811.9 L342.8 812.9 L342.1 813.5 L341.4 814.1 L340.7 814.9 L340.0 815.4 L339.3 816.5 L338.6 817.5 L337.9 815.1 L337.2 808.8 L336.5 808.6 L335.8 808.4 L335.1 808.5 L334.4 808.5 L333.7 808.7 L333.0 808.8 L332.3 809.3 L331.6 810.4 L330.9 811.3 L330.2 812.8 L329.5 814.0 L328.8 814.6 L328.1 815.8 L327.4 817.4 L326.7 817.5 L326.0 817.5 L325.3 817.7 L324.6 817.2 L323.9 816.6 L323.2 816.6 L322.5 816.1 L321.8 815.6 L321.1 815.7 L320.4 815.0 L319.7 815.1 L319.0 815.1 L318.3 815.0 L317.6 814.5 L316.9 814.7 L316.2 814.5 L315.5 814.5 L314.8 814.6 L314.1 814.9 L313.4 814.8 L312.7 815.4 L312.0 815.4 L311.3 815.5 L310.6 815.0 L309.9 815.3 L309.2 815.8 L308.5 816.8 L307.8 817.9 L307.1 817.9 L306.4 817.4 L305.7 816.7 L305.0 813.8 L304.3 811.1 L303.6 810.2 L302.9 809.6 L302.2 809.8 L301.5 809.7 L300.8 809.8 L300.1 810.8 L299.4 812.4 L298.7 812.5 L298.0 813.3 L297.3 814.1 L296.6 814.0 L295.9 814.4 L295.2 815.2 L294.5 815.2 L293.8 816.0 L293.1 815.6 L292.4 816.5 L291.7 816.1 L291.0 816.8 L290.3 816.0 L289.6 815.8 L288.9 815.2 L288.2 814.7 L287.5 814.8 L286.8 815.1 L286.1 814.8 L285.4 814.8 L284.7 815.6 L284.0 815.7 L283.3 815.7 L282.6 815.2 L281.9 815.4 L281.2 815.0 L280.5 815.3 L279.8 814.8 L279.1 815.0 L278.4 815.5 L277.7 815.4 L277.0 816.0 L276.3 816.3 L275.6 815.8 L274.9 815.5 L274.2 815.2 L273.5 814.9 L272.8 814.8 L272.1 812.7 L271.4 811.1 L270.7 810.8 L270.0 810.7 L269.3 810.7 L268.6 810.6 L267.9 810.6 L267.2 810.5 L266.5 810.6 L265.8 810.7 L265.1 810.7 L264.4 810.3 L263.7 810.0 L263.0 809.8 L262.3 809.7 L261.6 809.5 L260.9 809.9 L260.2 810.1 L259.5 810.2 L258.8 810.4 L258.1 810.4 L257.4 810.2 L256.7 810.0 L256.0 809.4 L255.3 808.7 L254.6 807.9 Z M474.4 807.0 L475.1 807.0 L475.8 807.0 L476.5 807.0 L477.2 807.0 L477.9 807.0 L478.6 807.0 L479.3 807.0 L480.0 807.0 L480.7 807.0 L481.4 807.0 L482.1 807.0 L482.8 807.0 L483.5 807.0 L484.2 807.0 L484.9 807.0 L485.6 807.0 L486.3 807.0 L487.0 807.0 L487.7 807.0 L488.4 807.0 L489.1 807.0 L489.8 807.0 L490.5 807.0 L491.2 807.0 L491.9 807.0 L492.6 807.0 L493.3 807.0 L494.0 807.0 L494.7 807.0 L495.4 807.0 L496.1 807.0 L496.8 807.0 L497.5 807.0 L498.2 807.0 L498.9 807.0 L499.6 807.0 L500.3 807.0 L501.0 807.0 L501.7 807.0 L502.4 807.0 L503.1 807.0 L503.8 807.0 L504.5 807.0 L505.2 807.0 L505.9 807.0 L506.6 807.0 L507.3 807.0 L508.0 807.0 L508.7 807.0 L509.4 807.0 L510.1 807.0 L510.1 807.8 L509.4 807.8 L508.7 807.8 L508.0 807.8 L507.3 807.8 L506.6 807.8 L505.9 807.8 L505.2 807.8 L504.5 807.8 L503.8 807.8 L503.1 807.8 L502.4 807.8 L501.7 807.8 L501.0 807.8 L500.3 807.8 L499.6 807.8 L498.9 807.8 L498.2 807.8 L497.5 807.8 L496.8 807.8 L496.1 807.8 L495.4 807.8 L494.7 807.8 L494.0 807.8 L493.3 807.8 L492.6 807.8 L491.9 807.8 L491.2 807.8 L490.5 807.8 L489.8 807.8 L489.1 807.8 L488.4 807.8 L487.7 807.8 L487.0 807.8 L486.3 807.8 L485.6 807.8 L484.9 807.8 L484.2 807.8 L483.5 807.8 L482.8 807.8 L482.1 807.8 L481.4 807.8 L480.7 807.8 L480.0 807.8 L479.3 807.8 L478.6 807.8 L477.9 807.8 L477.2 807.8 L476.5 807.8 L475.8 807.8 L475.1 807.8 L474.4 807.8 Z M510.6 806.8 L511.3 799.7 L512.0 796.5 L512.7 795.3 L513.4 796.5 L514.1 798.3 L514.8 799.9 L515.5 802.1 L516.2 802.7 L516.9 803.1 L517.6 803.6 L518.3 803.5 L519.0 803.8 L519.7 803.8 L520.4 803.6 L521.1 803.6 L521.8 803.7 L522.5 803.6 L523.2 803.2 L523.9 803.1 L524.6 802.9 L525.3 802.8 L526.0 802.6 L526.7 802.8 L527.4 802.3 L528.1 802.0 L528.8 801.8 L529.5 801.0 L530.2 801.1 L530.9 800.8 L531.6 800.6 L532.3 800.2 L533.0 800.4 L533.7 800.2 L534.4 800.2 L535.1 800.2 L535.8 800.1 L536.5 800.5 L537.2 800.6 L537.9 801.3 L538.6 801.0 L539.3 801.9 L540.0 802.3 L540.7 803.2 L541.4 803.8 L542.1 804.5 L542.8 804.8 L543.5 804.6 L544.2 804.3 L544.9 802.1 L545.6 799.9 L546.3 799.0 L547.0 798.4 L547.7 798.6 L548.4 798.9 L549.1 799.8 L549.8 800.3 L550.5 800.9 L551.2 801.9 L551.9 803.0 L552.6 804.3 L553.3 804.5 L554.0 804.7 L554.7 804.9 L555.4 804.8 L556.1 804.7 L556.8 804.8 L557.5 804.6 L558.2 804.3 L558.9 803.9 L559.6 803.3 L560.3 800.8 L561.0 799.8 L561.7 799.6 L562.4 799.1 L563.1 799.1 L563.8 799.5 L564.5 799.8 L565.2 799.9 L565.9 800.6 L566.6 800.2 L567.3 800.3 L568.0 799.6 L568.7 799.7 L569.4 800.0 L570.1 800.1 L570.8 799.9 L571.5 800.3 L572.2 799.9 L572.9 799.6 L573.6 800.0 L574.3 799.6 L575.0 799.3 L575.7 799.8 L576.4 799.8 L577.1 800.2 L577.8 800.7 L578.5 801.8 L579.2 802.6 L579.9 802.8 L580.6 802.7 L581.3 802.0 L582.0 801.8 L582.7 801.5 L583.4 801.6 L584.1 801.4 L584.8 801.0 L585.5 801.4 L586.2 801.4 L586.9 801.6 L587.6 801.9 L588.3 802.0 L589.0 802.6 L589.7 802.8 L590.4 802.9 L591.1 802.3 L591.8 800.0 L592.5 797.2 L593.2 796.0 L593.9 794.2 L594.6 793.6 L595.3 791.5 L596.0 791.6 L596.7 793.5 L597.4 794.3 L598.1 796.4 L598.8 799.1 L599.5 800.8 L600.2 801.9 L600.9 802.8 L601.6 803.0 L602.3 802.9 L603.0 803.0 L603.7 803.2 L604.4 803.7 L605.1 803.6 L605.8 804.0 L606.5 804.0 L607.2 804.5 L607.9 804.9 L608.6 805.2 L609.3 803.8 L610.0 802.4 L610.7 804.3 L611.4 805.3 L612.1 805.9 L612.8 806.3 L613.5 806.6 L614.2 806.8 L614.2 808.0 L613.5 808.2 L612.8 808.5 L612.1 808.9 L611.4 809.5 L610.7 810.5 L610.0 811.9 L609.3 810.9 L608.6 809.8 L607.9 809.9 L607.2 810.3 L606.5 810.5 L605.8 810.9 L605.1 811.0 L604.4 811.2 L603.7 811.6 L603.0 811.4 L602.3 811.9 L601.6 811.8 L600.9 812.1 L600.2 813.1 L599.5 813.9 L598.8 815.4 L598.1 818.3 L597.4 820.0 L596.7 822.0 L596.0 823.2 L595.3 822.4 L594.6 821.4 L593.9 820.6 L593.2 819.3 L592.5 817.9 L591.8 814.6 L591.1 812.7 L590.4 812.3 L589.7 811.9 L589.0 812.4 L588.3 812.7 L587.6 813.1 L586.9 813.3 L586.2 813.7 L585.5 813.5 L584.8 813.7 L584.1 813.3 L583.4 813.6 L582.7 813.4 L582.0 813.2 L581.3 812.7 L580.6 811.9 L579.9 812.1 L579.2 812.2 L578.5 813.2 L577.8 814.4 L577.1 815.0 L576.4 814.7 L575.7 815.2 L575.0 815.0 L574.3 815.5 L573.6 815.0 L572.9 815.0 L572.2 814.9 L571.5 815.0 L570.8 814.6 L570.1 815.3 L569.4 814.8 L568.7 815.0 L568.0 814.7 L567.3 815.0 L566.6 814.6 L565.9 814.4 L565.2 815.0 L564.5 815.0 L563.8 815.1 L563.1 815.2 L562.4 815.3 L561.7 815.2 L561.0 815.2 L560.3 813.9 L559.6 811.6 L558.9 811.0 L558.2 810.4 L557.5 810.0 L556.8 810.1 L556.1 809.9 L555.4 809.8 L554.7 810.0 L554.0 810.2 L553.3 810.6 L552.6 810.5 L551.9 811.9 L551.2 812.9 L550.5 813.6 L549.8 814.3 L549.1 815.9 L548.4 816.1 L547.7 816.2 L547.0 815.9 L546.3 815.9 L545.6 815.0 L544.9 812.5 L544.2 810.5 L543.5 810.2 L542.8 810.1 L542.1 810.3 L541.4 810.9 L540.7 811.7 L540.0 812.5 L539.3 813.0 L538.6 813.3 L537.9 813.9 L537.2 814.1 L536.5 814.6 L535.8 814.2 L535.1 814.3 L534.4 814.4 L533.7 814.3 L533.0 814.0 L532.3 813.9 L531.6 814.4 L530.9 814.1 L530.2 814.1 L529.5 813.4 L528.8 813.6 L528.1 812.7 L527.4 812.2 L526.7 812.3 L526.0 812.1 L525.3 811.7 L524.6 811.5 L523.9 811.4 L523.2 811.7 L522.5 811.2 L521.8 811.4 L521.1 811.1 L520.4 810.9 L519.7 810.9 L519.0 811.1 L518.3 811.1 L517.6 811.0 L516.9 811.7 L516.2 812.0 L515.5 813.1 L514.8 814.3 L514.1 816.2 L513.4 817.5 L512.7 819.7 L512.0 818.4 L511.3 815.0 L510.6 808.0 Z M618.0 807.0 L618.7 807.0 L619.4 807.0 L620.1 807.0 L620.8 807.0 L621.5 806.9 L622.2 806.0 L622.9 804.7 L623.6 803.9 L624.3 803.6 L625.0 803.2 L625.7 802.9 L626.4 802.9 L627.1 802.7 L627.8 802.6 L628.5 802.3 L629.2 802.6 L629.9 802.9 L630.6 803.0 L631.3 803.4 L632.0 803.5 L632.7 804.1 L633.4 804.6 L634.1 805.3 L634.8 805.8 L635.5 806.0 L636.2 806.2 L636.9 805.8 L637.6 805.5 L638.3 804.9 L639.0 804.0 L639.7 803.3 L640.4 803.1 L641.1 803.0 L641.8 802.9 L642.5 802.9 L643.2 802.8 L643.9 802.7 L644.6 802.4 L645.3 802.3 L646.0 802.1 L646.7 802.5 L647.4 803.2 L648.1 803.5 L648.8 804.0 L649.5 804.5 L650.2 805.1 L650.9 805.6 L651.6 806.2 L652.3 806.4 L653.0 806.6 L653.7 806.5 L654.4 806.3 L655.1 802.4 L655.8 798.4 L656.5 796.0 L657.2 792.9 L657.9 792.0 L658.6 794.6 L659.3 796.4 L660.0 798.4 L660.7 800.3 L661.4 801.9 L662.1 803.1 L662.8 804.2 L663.5 804.8 L664.2 805.0 L664.9 805.4 L665.6 805.8 L666.3 806.0 L667.0 805.9 L667.7 805.7 L668.4 805.6 L669.1 805.5 L669.8 805.0 L670.5 804.9 L671.2 804.5 L671.9 804.3 L672.6 804.2 L673.3 804.3 L674.0 804.1 L674.7 804.2 L675.4 804.3 L676.1 804.4 L676.8 804.4 L677.5 804.7 L678.2 804.9 L678.9 805.0 L679.6 805.1 L680.3 805.3 L681.0 805.6 L681.7 805.9 L682.4 806.1 L683.1 806.3 L683.8 806.3 L684.5 806.2 L685.2 806.3 L685.9 806.0 L686.6 805.4 L687.3 804.0 L688.0 801.7 L688.7 800.6 L689.4 799.4 L690.1 798.6 L690.8 798.8 L691.5 798.3 L692.2 798.2 L692.9 798.8 L693.6 800.0 L694.3 800.1 L695.0 800.8 L695.7 801.3 L696.4 800.6 L697.1 800.2 L697.8 798.8 L698.5 798.7 L699.2 799.0 L699.9 798.6 L700.6 798.8 L701.3 799.1 L702.0 799.3 L702.7 799.4 L703.4 800.0 L704.1 800.4 L704.8 800.9 L705.5 800.6 L706.2 799.9 L706.9 798.7 L707.6 798.6 L708.3 798.6 L709.0 798.5 L709.7 798.9 L710.4 798.9 L711.1 799.4 L711.8 799.2 L712.5 798.3 L713.2 798.3 L713.9 798.1 L714.6 798.7 L715.3 798.4 L716.0 799.3 L716.7 800.8 L717.4 802.2 L718.1 803.8 L718.8 804.9 L719.5 805.7 L720.2 806.3 L720.2 808.5 L719.5 809.2 L718.8 809.8 L718.1 811.1 L717.4 812.6 L716.7 814.2 L716.0 815.4 L715.3 816.0 L714.6 816.1 L713.9 816.4 L713.2 816.3 L712.5 816.8 L711.8 815.7 L711.1 815.5 L710.4 815.5 L709.7 815.9 L709.0 815.9 L708.3 816.4 L707.6 816.3 L706.9 815.5 L706.2 815.1 L705.5 814.9 L704.8 814.2 L704.1 814.8 L703.4 814.9 L702.7 815.5 L702.0 815.5 L701.3 815.8 L700.6 815.9 L699.9 816.8 L699.2 816.0 L698.5 816.2 L697.8 815.5 L697.1 814.7 L696.4 813.9 L695.7 813.6 L695.0 813.9 L694.3 814.7 L693.6 815.0 L692.9 815.4 L692.2 816.6 L691.5 816.7 L690.8 816.5 L690.1 815.8 L689.4 815.7 L688.7 814.6 L688.0 813.7 L687.3 810.9 L686.6 809.5 L685.9 808.8 L685.2 808.6 L684.5 808.5 L683.8 808.6 L683.1 808.5 L682.4 808.8 L681.7 809.0 L681.0 809.2 L680.3 809.4 L679.6 809.6 L678.9 809.7 L678.2 809.9 L677.5 810.0 L676.8 810.1 L676.1 810.2 L675.4 810.3 L674.7 810.7 L674.0 810.7 L673.3 810.6 L672.6 810.4 L671.9 810.4 L671.2 810.3 L670.5 810.1 L669.8 809.8 L669.1 809.4 L668.4 809.1 L667.7 809.0 L667.0 809.0 L666.3 808.8 L665.6 808.9 L664.9 809.3 L664.2 809.6 L663.5 810.0 L662.8 810.5 L662.1 811.9 L661.4 813.1 L660.7 814.1 L660.0 816.0 L659.3 818.2 L658.6 821.0 L657.9 821.9 L657.2 821.3 L656.5 820.0 L655.8 817.0 L655.1 812.0 L654.4 808.5 L653.7 808.3 L653.0 808.1 L652.3 808.5 L651.6 808.7 L650.9 809.2 L650.2 809.8 L649.5 810.2 L648.8 811.1 L648.1 811.5 L647.4 811.8 L646.7 812.1 L646.0 812.5 L645.3 812.4 L644.6 812.6 L643.9 812.0 L643.2 812.4 L642.5 812.1 L641.8 812.1 L641.1 811.9 L640.4 811.8 L639.7 811.2 L639.0 810.6 L638.3 810.1 L637.6 809.2 L636.9 808.9 L636.2 808.6 L635.5 808.8 L634.8 809.2 L634.1 809.6 L633.4 810.3 L632.7 810.7 L632.0 811.4 L631.3 811.6 L630.6 812.0 L629.9 812.3 L629.2 812.5 L628.5 812.3 L627.8 812.0 L627.1 811.9 L626.4 812.0 L625.7 811.7 L625.0 811.4 L624.3 811.3 L623.6 810.9 L622.9 810.1 L622.2 808.8 L621.5 807.9 L620.8 807.9 L620.1 807.8 L619.4 807.8 L618.7 807.8 L618.0 807.8 Z M720.6 807.0 L721.3 807.0 L722.0 806.9 L722.7 806.8 L723.4 806.7 L724.1 806.7 L724.8 806.3 L725.5 805.6 L726.2 805.0 L726.9 804.9 L727.6 804.7 L728.3 804.5 L729.0 804.4 L729.7 804.4 L730.4 804.5 L731.1 804.5 L731.8 804.3 L732.5 804.4 L733.2 804.1 L733.9 804.1 L734.6 803.6 L735.3 803.5 L736.0 803.3 L736.7 803.2 L737.4 803.0 L738.1 803.2 L738.8 802.9 L739.5 802.7 L740.2 803.0 L740.9 803.0 L741.6 803.3 L742.3 803.4 L743.0 803.3 L743.7 803.9 L744.4 803.8 L745.1 804.2 L745.8 804.4 L746.5 804.9 L747.2 805.4 L747.9 805.8 L748.6 806.3 L749.3 806.5 L750.0 806.7 L750.7 806.9 L750.7 807.9 L750.0 808.1 L749.3 808.3 L748.6 808.5 L747.9 809.0 L747.2 809.5 L746.5 810.0 L745.8 810.2 L745.1 810.7 L744.4 810.8 L743.7 811.0 L743.0 811.5 L742.3 811.7 L741.6 811.6 L740.9 811.7 L740.2 811.9 L739.5 811.8 L738.8 811.7 L738.1 811.8 L737.4 811.7 L736.7 811.7 L736.0 811.4 L735.3 811.0 L734.6 811.0 L733.9 810.7 L733.2 810.5 L732.5 810.5 L731.8 810.4 L731.1 810.3 L730.4 810.2 L729.7 810.2 L729.0 810.5 L728.3 810.5 L727.6 810.4 L726.9 810.0 L726.2 809.8 L725.5 809.1 L724.8 808.4 L724.1 808.1 L723.4 808.1 L722.7 808.0 L722.0 807.9 L721.3 807.8 L720.6 807.8 Z M751.0 807.0 L751.7 807.0 L752.4 807.0 L753.1 807.0 L753.8 807.0 L754.5 807.0 L755.2 807.0 L755.9 807.0 L756.6 807.0 L757.3 806.9 L758.0 807.0 L758.7 806.9 L759.4 806.9 L760.1 806.9 L760.8 806.9 L761.5 806.0 L762.2 804.9 L762.9 803.7 L763.6 802.3 L764.3 801.4 L765.0 800.3 L765.7 799.5 L766.4 798.6 L767.1 798.5 L767.8 798.4 L768.5 798.3 L769.2 798.2 L769.9 797.4 L770.6 797.1 L771.3 796.6 L772.0 797.1 L772.7 796.5 L773.4 796.3 L774.1 797.0 L774.8 797.1 L775.5 796.9 L776.2 796.7 L776.9 795.6 L777.6 796.4 L778.3 797.7 L779.0 800.8 L779.7 803.7 L780.4 803.8 L781.1 802.0 L781.8 799.8 L782.5 797.2 L783.2 794.4 L783.9 792.3 L784.6 792.1 L785.3 792.2 L786.0 794.4 L786.7 796.3 L787.4 797.5 L788.1 798.5 L788.8 798.8 L789.5 799.7 L790.2 799.6 L790.9 799.8 L791.6 799.4 L792.3 799.3 L793.0 799.6 L793.7 799.5 L794.4 799.3 L795.1 799.3 L795.8 798.4 L796.5 798.6 L797.2 798.6 L797.9 799.1 L798.6 798.8 L799.3 799.0 L800.0 799.7 L800.7 799.7 L801.4 799.9 L802.1 800.4 L802.8 801.4 L803.5 801.7 L804.2 803.4 L804.9 805.0 L805.6 806.3 L806.3 806.5 L807.0 806.7 L807.7 806.8 L808.4 806.9 L808.4 807.9 L807.7 807.9 L807.0 808.1 L806.3 808.4 L805.6 808.5 L804.9 809.8 L804.2 811.2 L803.5 812.7 L802.8 813.6 L802.1 814.0 L801.4 814.5 L800.7 814.9 L800.0 815.3 L799.3 815.7 L798.6 815.3 L797.9 815.4 L797.2 815.8 L796.5 816.1 L795.8 815.8 L795.1 815.9 L794.4 816.0 L793.7 815.6 L793.0 815.0 L792.3 815.6 L791.6 815.4 L790.9 814.9 L790.2 815.4 L789.5 815.2 L788.8 815.5 L788.1 816.1 L787.4 817.2 L786.7 818.5 L786.0 820.8 L785.3 821.8 L784.6 822.7 L783.9 821.7 L783.2 820.2 L782.5 817.7 L781.8 814.7 L781.1 812.6 L780.4 811.0 L779.7 811.0 L779.0 814.0 L778.3 816.4 L777.6 819.0 L776.9 819.2 L776.2 818.3 L775.5 818.3 L774.8 817.7 L774.1 817.5 L773.4 818.3 L772.7 817.9 L772.0 817.8 L771.3 817.7 L770.6 817.8 L769.9 816.8 L769.2 816.9 L768.5 817.2 L767.8 816.8 L767.1 816.5 L766.4 815.7 L765.7 815.7 L765.0 814.4 L764.3 813.5 L763.6 812.6 L762.9 811.0 L762.2 809.8 L761.5 808.7 L760.8 807.9 L760.1 807.9 L759.4 807.9 L758.7 807.9 L758.0 807.9 L757.3 807.8 L756.6 807.8 L755.9 807.8 L755.2 807.8 L754.5 807.8 L753.8 807.8 L753.1 807.8 L752.4 807.8 L751.7 807.8 L751.0 807.8 Z M809.0 807.0 L809.7 806.9 L810.4 806.8 L811.1 806.7 L811.8 806.4 L812.5 805.6 L813.2 804.8 L813.9 804.2 L814.6 804.0 L815.3 803.6 L816.0 803.3 L816.7 803.4 L817.4 803.5 L818.1 803.4 L818.8 803.2 L819.5 802.9 L820.2 802.8 L820.9 803.1 L821.6 802.8 L822.3 802.7 L823.0 803.0 L823.7 802.5 L824.4 802.6 L825.1 802.8 L825.8 802.5 L826.5 802.6 L827.2 802.8 L827.9 803.1 L828.6 803.0 L829.3 803.0 L830.0 803.4 L830.7 803.5 L831.4 803.7 L832.1 804.1 L832.8 804.6 L833.5 805.1 L834.2 805.6 L834.9 806.0 L835.6 806.3 L836.3 806.3 L837.0 805.9 L837.7 805.4 L838.4 804.8 L839.1 803.9 L839.8 803.6 L840.5 803.3 L841.2 803.0 L841.9 803.1 L842.6 802.7 L843.3 802.7 L844.0 802.9 L844.7 803.1 L845.4 803.3 L846.1 803.8 L846.8 804.2 L847.5 804.7 L848.2 805.2 L848.9 805.9 L849.6 806.2 L850.3 806.4 L851.0 806.4 L851.7 805.7 L852.4 805.2 L853.1 804.7 L853.8 804.1 L854.5 804.1 L855.2 803.4 L855.9 803.4 L856.6 803.3 L857.3 803.5 L858.0 803.4 L858.7 802.9 L859.4 803.2 L860.1 803.3 L860.8 803.0 L861.5 803.0 L862.2 803.0 L862.9 803.4 L863.6 803.0 L864.3 803.3 L865.0 803.3 L865.7 803.4 L866.4 803.2 L867.1 803.5 L867.8 803.5 L868.5 803.7 L869.2 803.8 L869.9 803.7 L870.6 803.8 L871.3 803.8 L872.0 804.1 L872.7 804.0 L873.4 804.2 L874.1 804.3 L874.8 804.3 L875.5 804.5 L876.2 804.6 L876.9 804.8 L877.6 804.7 L878.3 805.0 L879.0 805.1 L879.7 805.3 L880.4 805.5 L881.1 805.8 L881.8 806.0 L882.5 806.1 L883.2 806.3 L883.9 806.5 L884.6 806.7 L884.6 808.1 L883.9 808.2 L883.2 808.4 L882.5 808.7 L881.8 808.8 L881.1 809.0 L880.4 809.2 L879.7 809.5 L879.0 809.7 L878.3 809.8 L877.6 810.0 L876.9 810.2 L876.2 810.1 L875.5 810.5 L874.8 810.5 L874.1 810.7 L873.4 810.6 L872.7 810.9 L872.0 810.8 L871.3 811.1 L870.6 811.1 L869.9 811.2 L869.2 811.1 L868.5 811.4 L867.8 811.5 L867.1 811.4 L866.4 811.6 L865.7 811.3 L865.0 811.5 L864.3 811.4 L863.6 811.4 L862.9 811.4 L862.2 811.5 L861.5 811.7 L860.8 811.6 L860.1 811.6 L859.4 811.9 L858.7 811.9 L858.0 811.7 L857.3 811.5 L856.6 811.4 L855.9 811.2 L855.2 811.4 L854.5 810.8 L853.8 810.7 L853.1 810.1 L852.4 809.6 L851.7 809.0 L851.0 808.3 L850.3 808.5 L849.6 808.5 L848.9 809.0 L848.2 809.5 L847.5 810.1 L846.8 810.7 L846.1 811.2 L845.4 811.7 L844.7 811.7 L844.0 811.8 L843.3 812.0 L842.6 811.9 L841.9 812.0 L841.2 811.8 L840.5 811.4 L839.8 811.1 L839.1 810.8 L838.4 810.1 L837.7 809.5 L837.0 808.9 L836.3 808.5 L835.6 808.4 L834.9 808.8 L834.2 809.2 L833.5 809.8 L832.8 810.3 L832.1 810.6 L831.4 810.8 L830.7 811.3 L830.0 811.4 L829.3 811.8 L828.6 811.7 L827.9 811.7 L827.2 811.7 L826.5 811.9 L825.8 812.3 L825.1 812.2 L824.4 811.9 L823.7 812.2 L823.0 812.1 L822.3 811.9 L821.6 812.0 L820.9 811.8 L820.2 811.6 L819.5 811.9 L818.8 811.6 L818.1 811.4 L817.4 811.4 L816.7 811.4 L816.0 811.5 L815.3 811.0 L814.6 810.8 L813.9 810.4 L813.2 810.1 L812.5 809.3 L811.8 808.4 L811.1 808.1 L810.4 808.0 L809.7 807.9 L809.0 807.8 Z M885.0 807.0 L885.7 807.0 L886.4 807.0 L887.1 807.0 L887.8 807.0 L888.5 807.0 L889.2 807.0 L889.9 807.0 L890.6 807.0 L891.3 807.0 L892.0 807.0 L892.7 807.0 L893.4 807.0 L894.1 807.0 L894.8 807.0 L895.5 807.0 L896.2 807.0 L896.9 807.0 L897.6 807.0 L898.3 807.0 L899.0 807.0 L899.7 807.0 L900.4 807.0 L901.1 807.0 L901.8 807.0 L902.5 807.0 L903.2 807.0 L903.9 807.0 L904.6 807.0 L904.6 807.8 L903.9 807.8 L903.2 807.8 L902.5 807.8 L901.8 807.8 L901.1 807.8 L900.4 807.8 L899.7 807.8 L899.0 807.8 L898.3 807.8 L897.6 807.8 L896.9 807.8 L896.2 807.8 L895.5 807.8 L894.8 807.8 L894.1 807.8 L893.4 807.8 L892.7 807.8 L892.0 807.8 L891.3 807.8 L890.6 807.8 L889.9 807.8 L889.2 807.8 L888.5 807.8 L887.8 807.8 L887.1 807.8 L886.4 807.8 L885.7 807.8 L885.0 807.8 Z M905.0 806.9 L905.7 805.2 L906.4 803.5 L907.1 802.3 L907.8 801.6 L908.5 800.7 L909.2 801.1 L909.9 801.4 L910.6 801.6 L911.3 802.3 L912.0 803.5 L912.7 804.0 L913.4 805.0 L914.1 805.9 L914.8 806.5 L914.8 808.2 L914.1 809.0 L913.4 809.7 L912.7 810.6 L912.0 811.3 L911.3 812.4 L910.6 813.1 L909.9 813.7 L909.2 813.6 L908.5 814.2 L907.8 813.4 L907.1 812.4 L906.4 811.3 L905.7 809.6 L905.0 807.9 Z M915.4 807.0 L916.1 807.0 L916.8 807.0 L917.5 807.0 L918.2 807.0 L918.9 807.0 L919.6 807.0 L920.3 806.9 L921.0 806.9 L921.7 806.9 L922.4 805.7 L923.1 803.2 L923.8 802.6 L924.5 802.1 L925.2 801.4 L925.9 801.3 L926.6 801.4 L927.3 801.9 L928.0 801.8 L928.7 801.9 L929.4 801.9 L930.1 801.9 L930.8 802.2 L931.5 801.9 L932.2 802.2 L932.9 801.5 L933.6 801.2 L934.3 801.1 L935.0 801.3 L935.7 801.2 L936.4 801.2 L937.1 801.0 L937.8 801.1 L938.5 801.2 L939.2 801.1 L939.9 800.8 L940.6 801.6 L941.3 801.6 L942.0 801.9 L942.7 801.8 L943.4 802.6 L944.1 802.8 L944.8 803.0 L945.5 803.3 L946.2 804.0 L946.9 804.8 L947.6 805.4 L948.3 805.9 L949.0 806.4 L949.0 808.4 L948.3 808.9 L947.6 809.2 L946.9 809.9 L946.2 810.5 L945.5 811.1 L944.8 811.9 L944.1 812.0 L943.4 812.5 L942.7 813.0 L942.0 813.2 L941.3 813.2 L940.6 813.7 L939.9 813.9 L939.2 813.9 L938.5 813.7 L937.8 814.1 L937.1 814.4 L936.4 814.0 L935.7 814.1 L935.0 813.7 L934.3 813.6 L933.6 813.6 L932.9 813.0 L932.2 812.8 L931.5 812.7 L930.8 812.8 L930.1 813.0 L929.4 813.1 L928.7 812.9 L928.0 813.0 L927.3 813.1 L926.6 813.3 L925.9 813.1 L925.2 813.4 L924.5 812.7 L923.8 812.2 L923.1 811.5 L922.4 809.1 L921.7 807.9 L921.0 807.8 L920.3 807.9 L919.6 807.8 L918.9 807.8 L918.2 807.8 L917.5 807.8 L916.8 807.8 L916.1 807.8 L915.4 807.8 Z M949.6 807.0 L950.3 807.0 L951.0 807.0 L951.7 806.9 L952.4 806.9 L953.1 806.9 L953.8 806.9 L954.5 806.9 L955.2 805.9 L955.9 803.0 L956.6 801.4 L957.3 800.6 L958.0 800.4 L958.7 800.2 L959.4 800.2 L960.1 800.4 L960.8 800.9 L961.5 800.2 L962.2 800.6 L962.9 800.6 L963.6 800.5 L964.3 800.4 L965.0 799.7 L965.7 800.0 L966.4 799.2 L967.1 799.7 L967.8 799.2 L968.5 798.7 L969.2 798.1 L969.9 798.3 L970.6 799.2 L971.3 798.7 L972.0 799.3 L972.7 798.9 L973.4 799.7 L974.1 799.5 L974.8 800.0 L975.5 799.8 L976.2 800.6 L976.9 800.9 L977.6 801.3 L978.3 801.2 L979.0 801.9 L979.7 802.1 L980.4 802.7 L981.1 803.2 L981.8 803.9 L982.5 804.3 L983.2 804.6 L983.9 805.1 L984.6 805.6 L985.3 806.0 L986.0 806.3 L986.7 806.6 L987.4 806.9 L987.4 808.0 L986.7 808.3 L986.0 808.6 L985.3 808.7 L984.6 809.1 L983.9 809.6 L983.2 809.9 L982.5 810.4 L981.8 810.8 L981.1 811.4 L980.4 812.2 L979.7 812.8 L979.0 813.4 L978.3 813.4 L977.6 814.0 L976.9 814.3 L976.2 814.3 L975.5 814.5 L974.8 814.8 L974.1 815.1 L973.4 815.2 L972.7 815.5 L972.0 815.7 L971.3 816.3 L970.6 816.1 L969.9 816.7 L969.2 816.3 L968.5 816.3 L967.8 816.1 L967.1 815.5 L966.4 815.4 L965.7 815.3 L965.0 815.1 L964.3 814.7 L963.6 814.9 L962.9 814.1 L962.2 814.3 L961.5 814.5 L960.8 814.2 L960.1 814.3 L959.4 814.7 L958.7 814.4 L958.0 814.7 L957.3 814.2 L956.6 813.3 L955.9 812.0 L955.2 808.9 L954.5 807.9 L953.8 808.0 L953.1 807.9 L952.4 807.9 L951.7 807.9 L951.0 807.8 L950.3 807.8 L949.6 807.8 Z M987.6 807.0 L988.3 807.0 L989.0 807.0 L989.7 807.0 L990.4 807.0 L991.1 807.0 L991.8 807.0 L992.5 807.0 L993.2 807.0 L993.9 807.0 L994.6 807.0 L995.3 807.0 L996.0 807.0 L996.7 807.0 L997.4 807.0 L998.1 807.0 L998.8 807.0 L999.5 807.0 L1000.2 807.0 L1000.9 807.0 L1001.6 807.0 L1002.3 807.0 L1003.0 807.0 L1003.7 807.0 L1004.4 807.0 L1005.1 807.0 L1005.8 807.0 L1006.5 807.0 L1007.2 807.0 L1007.9 807.0 L1008.6 807.0 L1009.3 807.0 L1010.0 807.0 L1010.7 807.0 L1011.4 807.0 L1012.1 807.0 L1012.8 807.0 L1012.8 807.8 L1012.1 807.8 L1011.4 807.8 L1010.7 807.8 L1010.0 807.8 L1009.3 807.8 L1008.6 807.8 L1007.9 807.8 L1007.2 807.8 L1006.5 807.8 L1005.8 807.8 L1005.1 807.8 L1004.4 807.8 L1003.7 807.8 L1003.0 807.8 L1002.3 807.8 L1001.6 807.8 L1000.9 807.8 L1000.2 807.8 L999.5 807.8 L998.8 807.8 L998.1 807.8 L997.4 807.8 L996.7 807.8 L996.0 807.8 L995.3 807.8 L994.6 807.8 L993.9 807.8 L993.2 807.8 L992.5 807.8 L991.8 807.8 L991.1 807.8 L990.4 807.8 L989.7 807.8 L989.0 807.8 L988.3 807.8 L987.6 807.8 Z M1013.0 807.0 L1013.7 806.8 L1014.4 806.7 L1015.1 806.5 L1015.8 806.3 L1016.5 806.1 L1017.2 805.9 L1017.9 805.7 L1018.6 805.2 L1019.3 804.9 L1020.0 804.5 L1020.7 804.3 L1021.4 804.1 L1022.1 803.6 L1022.8 803.4 L1023.5 803.1 L1024.2 802.9 L1024.9 802.7 L1024.9 812.4 L1024.2 811.8 L1023.5 811.5 L1022.8 811.4 L1022.1 811.2 L1021.4 811.0 L1020.7 810.5 L1020.0 810.3 L1019.3 809.7 L1018.6 809.5 L1017.9 809.1 L1017.2 808.8 L1016.5 808.6 L1015.8 808.4 L1015.1 808.3 L1014.4 808.1 L1013.7 808.0 L1013.0 807.8 Z" fill="#6d668f"/></g>
<rect x="141.1" y="796.6" width="5" height="22" rx="2.5" fill="#8f80f5"/>
<rect x="142.9" y="799.4" width="1.4" height="16.4" rx="0.7" fill="#ffffff"/>
<rect x="613.4" y="796.6" width="5" height="22" rx="2.5" fill="#8f80f5"/>
<rect x="615.2" y="799.4" width="1.4" height="16.4" rx="0.7" fill="#ffffff"/>
<g stroke="#a9a7b2" stroke-width="1.45" stroke-linecap="round" stroke-linejoin="round"><path d="M66.2 788.4H78M69.6 788.2V786.6 A1 1 0 0 1 70.6 785.6H73.6 A1 1 0 0 1 74.6 786.6V788.2"/><path d="M67.4 788.6V797.6 A1.4 1.4 0 0 0 68.8 799H75.4 A1.4 1.4 0 0 0 76.8 797.6V788.6"/><path d="M70.7 791.4V796.2M73.5 791.4V796.2"/></g>
<g stroke="#a9a7b2" stroke-width="1.45" stroke-linecap="round" stroke-linejoin="round"><path d="M66.4 822.8H78"/><path d="M68.5 816.6L72.2 820.3L75.9 816.6"/><path d="M68.5 829.4L72.2 825.7L75.9 829.4"/></g>
</svg>
</body></html>
